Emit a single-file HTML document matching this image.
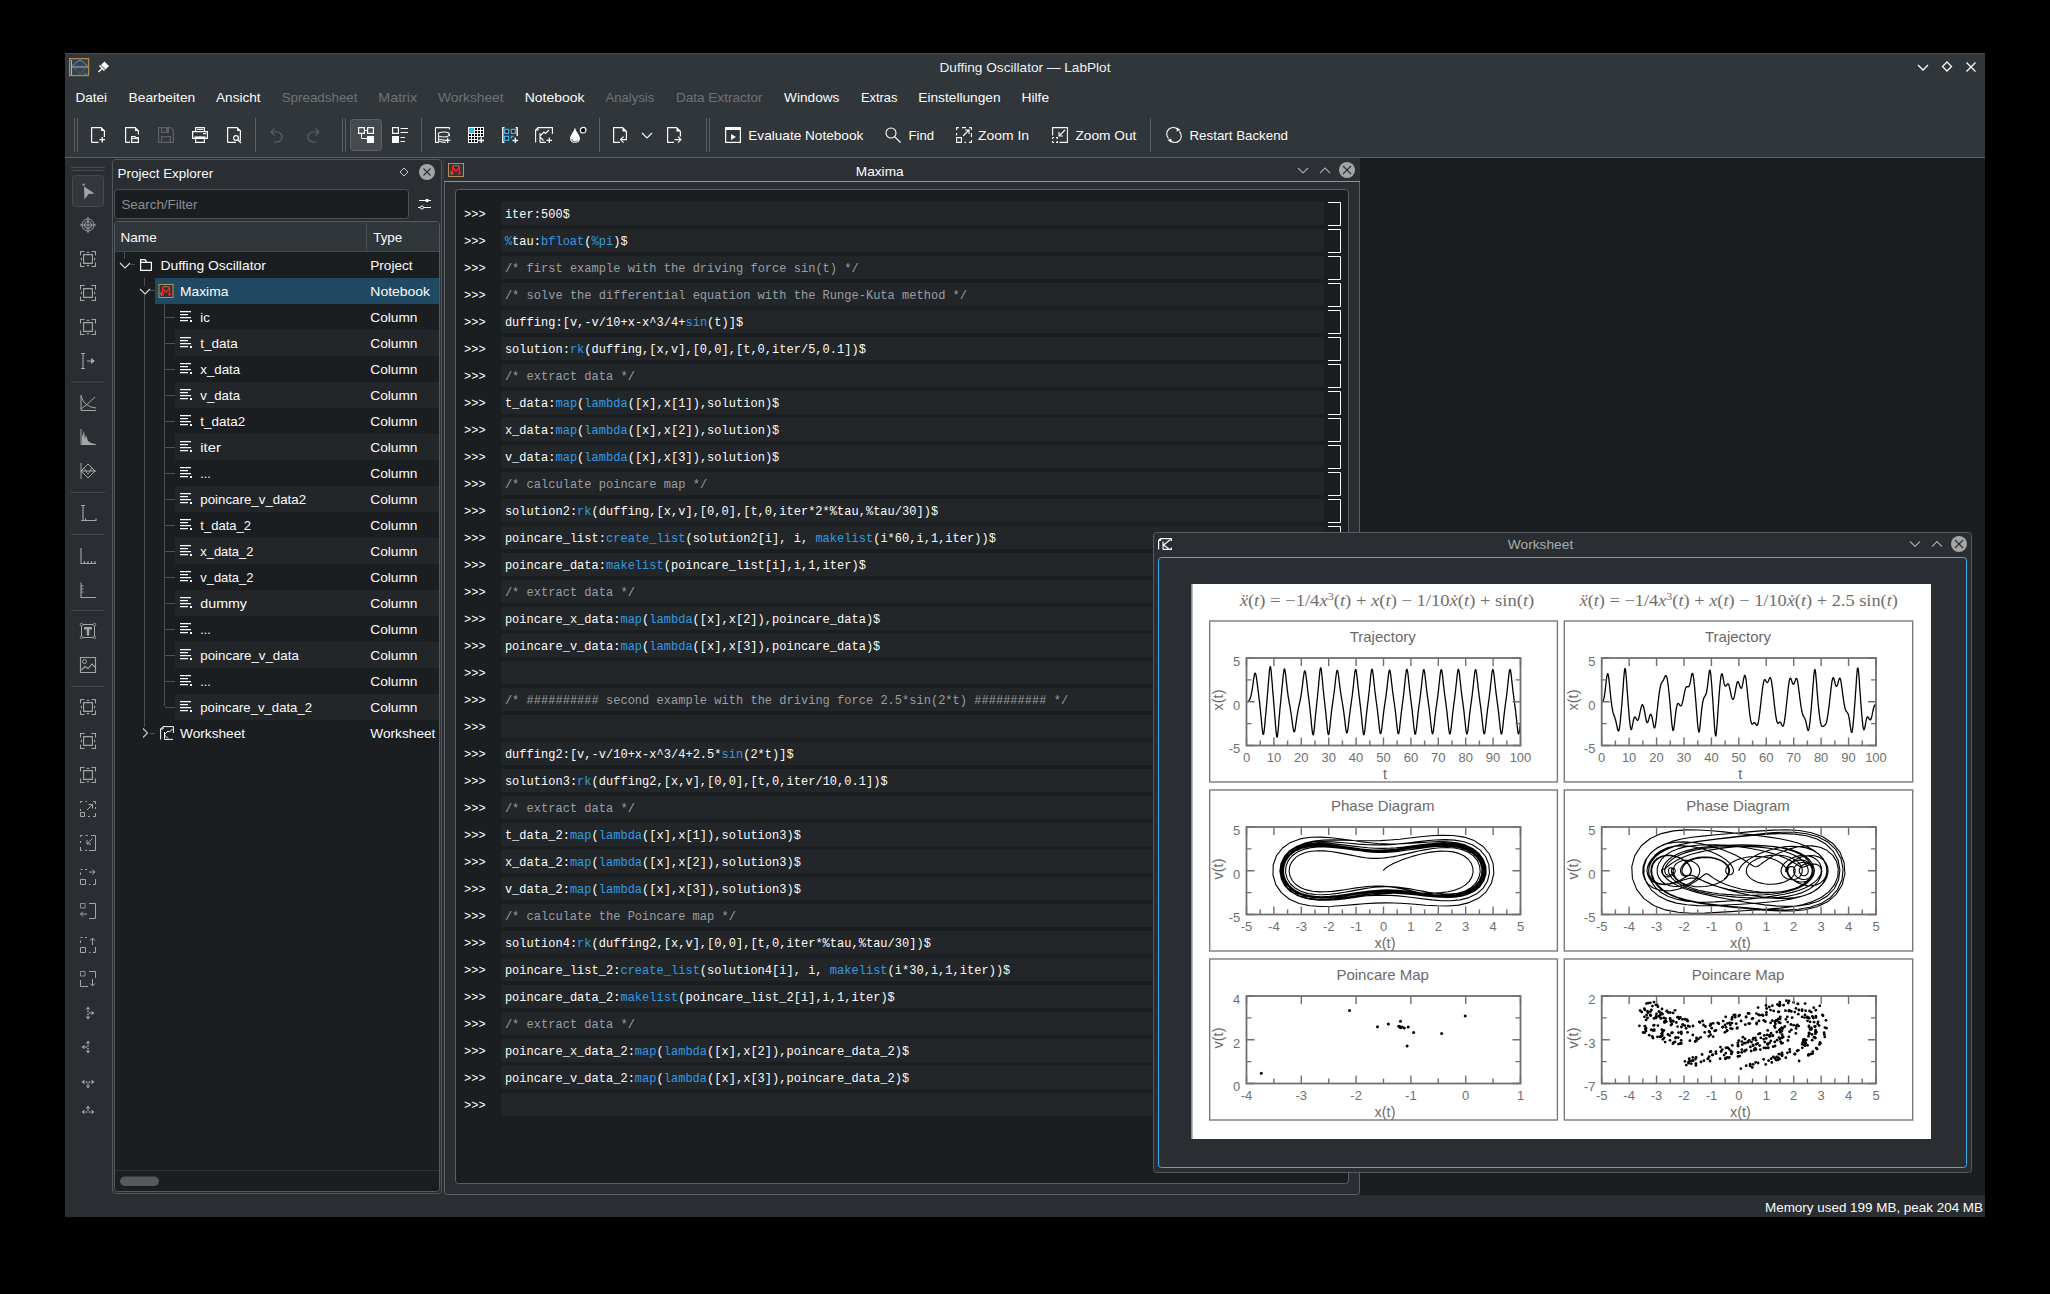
<!DOCTYPE html><html><head><meta charset="utf-8"><style>
*{box-sizing:border-box;margin:0;padding:0}
html,body{width:2050px;height:1294px;overflow:hidden;background:#000}
body{position:relative;font-family:"Liberation Sans",sans-serif;color:#eff0f1;font-size:13px}
.a{position:absolute}
.t{position:absolute;white-space:pre;line-height:1}
.mono{font-family:"Liberation Mono",monospace}
svg{position:absolute;overflow:visible}
</style></head><body><svg width="2050" height="1294" viewBox="0 0 2050 1294" style="left:0;top:0"><rect x="0" y="0" width="2050" height="1294" fill="#000" />
<rect x="65" y="53" width="1920" height="1164" fill="#31363b" />
<rect x="65" y="53" width="1920" height="1" fill="#454a50" />
<rect x="65" y="158" width="1920" height="1059" fill="#2a2e32" />
<line x1="65" y1="157.5" x2="1985" y2="157.5" stroke="#5b6065" stroke-width="1" />
<text x="1025" y="72" font-family="Liberation Sans" font-size="13.33" fill="#eff0f1" text-anchor="middle" textLength="171" lengthAdjust="spacingAndGlyphs" >Duffing Oscillator — LabPlot</text>
<rect x="69.6" y="58.6" width="19" height="17" fill="#3a434d" stroke="#b48a52" stroke-width="1.2"/>
<path d="M71.5 60 V75 M71 67 H88" stroke="#b9bec3" stroke-width="0.9" fill="none" />
<path d="M71.5 66.5 Q76 63 78 61 Q80 59.5 82 61 Q85 64 88 66.5" stroke="#5aa0d8" stroke-width="0.9" fill="none" />
<path d="M74 67.5 Q78 72 80 74 Q82 72 86 67.5" stroke="#7d858c" stroke-width="0.8" fill="none" stroke-dasharray="1.2 0.8"/>
<path d="M84 74 H87.5" stroke="#3d8fd0" stroke-width="1" fill="none" />
<path d="M104.5 61.5 L109 66 L105.5 69.5 L101 65 Z" stroke="none" stroke-width="0" fill="#fcfcfc" />
<path d="M99.5 65.5 L104.5 70.5" stroke="#fcfcfc" stroke-width="1.6" fill="none" />
<path d="M98.5 72 L102 68.5" stroke="#fcfcfc" stroke-width="1.5" fill="none" />
<path d="M1918 65 L1923 70 L1928 65" stroke="#fcfcfc" stroke-width="1.3" fill="none" />
<path d="M1947 62 L1951.5 66.5 L1947 71 L1942.5 66.5 Z" stroke="#fcfcfc" stroke-width="1.3" fill="none" />
<path d="M1966.5 62.5 L1975.5 71.5 M1975.5 62.5 L1966.5 71.5" stroke="#fcfcfc" stroke-width="1.3" fill="none" />
<text x="75.5" y="102" font-family="Liberation Sans" font-size="13.33" fill="#fcfcfc" text-anchor="start" textLength="31.6" lengthAdjust="spacingAndGlyphs" >Datei</text>
<text x="128.6" y="102" font-family="Liberation Sans" font-size="13.33" fill="#fcfcfc" text-anchor="start" textLength="66.6" lengthAdjust="spacingAndGlyphs" >Bearbeiten</text>
<text x="216" y="102" font-family="Liberation Sans" font-size="13.33" fill="#fcfcfc" text-anchor="start" textLength="44.6" lengthAdjust="spacingAndGlyphs" >Ansicht</text>
<text x="281.7" y="102" font-family="Liberation Sans" font-size="13.33" fill="#6e7378" text-anchor="start" textLength="75.8" lengthAdjust="spacingAndGlyphs" >Spreadsheet</text>
<text x="378.3" y="102" font-family="Liberation Sans" font-size="13.33" fill="#6e7378" text-anchor="start" textLength="38.9" lengthAdjust="spacingAndGlyphs" >Matrix</text>
<text x="438" y="102" font-family="Liberation Sans" font-size="13.33" fill="#6e7378" text-anchor="start" textLength="65.6" lengthAdjust="spacingAndGlyphs" >Worksheet</text>
<text x="524.7" y="102" font-family="Liberation Sans" font-size="13.33" fill="#fcfcfc" text-anchor="start" textLength="59.7" lengthAdjust="spacingAndGlyphs" >Notebook</text>
<text x="605.6" y="102" font-family="Liberation Sans" font-size="13.33" fill="#6e7378" text-anchor="start" textLength="48.7" lengthAdjust="spacingAndGlyphs" >Analysis</text>
<text x="675.9" y="102" font-family="Liberation Sans" font-size="13.33" fill="#6e7378" text-anchor="start" textLength="86.7" lengthAdjust="spacingAndGlyphs" >Data Extractor</text>
<text x="784.1" y="102" font-family="Liberation Sans" font-size="13.33" fill="#fcfcfc" text-anchor="start" textLength="55.3" lengthAdjust="spacingAndGlyphs" >Windows</text>
<text x="860.9" y="102" font-family="Liberation Sans" font-size="13.33" fill="#fcfcfc" text-anchor="start" textLength="36.5" lengthAdjust="spacingAndGlyphs" >Extras</text>
<text x="918.3" y="102" font-family="Liberation Sans" font-size="13.33" fill="#fcfcfc" text-anchor="start" textLength="82.3" lengthAdjust="spacingAndGlyphs" >Einstellungen</text>
<text x="1021.4" y="102" font-family="Liberation Sans" font-size="13.33" fill="#fcfcfc" text-anchor="start" textLength="27.7" lengthAdjust="spacingAndGlyphs" >Hilfe</text>
<line x1="74.5" y1="118" x2="74.5" y2="152" stroke="#5b6065" stroke-width="1" />
<line x1="77.5" y1="118" x2="77.5" y2="152" stroke="#5b6065" stroke-width="1" />
<line x1="255.5" y1="118" x2="255.5" y2="152" stroke="#5b6065" stroke-width="1" />
<line x1="342.5" y1="118" x2="342.5" y2="152" stroke="#5b6065" stroke-width="1" />
<line x1="345.5" y1="118" x2="345.5" y2="152" stroke="#5b6065" stroke-width="1" />
<line x1="421.5" y1="118" x2="421.5" y2="152" stroke="#5b6065" stroke-width="1" />
<line x1="599.5" y1="118" x2="599.5" y2="152" stroke="#5b6065" stroke-width="1" />
<line x1="706.5" y1="118" x2="706.5" y2="152" stroke="#5b6065" stroke-width="1" />
<line x1="709.5" y1="118" x2="709.5" y2="152" stroke="#5b6065" stroke-width="1" />
<line x1="1150.5" y1="118" x2="1150.5" y2="152" stroke="#5b6065" stroke-width="1" />
<rect x="350.5" y="119.5" width="31" height="31" rx="3" fill="#454a4f" stroke="#5d6166" stroke-width="1"/>
<g transform="translate(91,127)"><path d="M0.6,15.4 V0.6 H10 L13.4,4 V10 M0.6,15.4 H7.5" stroke="#fcfcfc" stroke-width="1.2" fill="none"/><path d="M10,0 L14,4 L10,4 Z" fill="#fcfcfc"/><path d="M8.5,12.6 H14 M11.25,10 V15.6" stroke="#fcfcfc" stroke-width="1.3" fill="none"/></g>
<g transform="translate(125,127)"><path d="M0.6,15.4 V0.6 H10 L13.4,4 V7.5 M0.6,15.4 H5" stroke="#fcfcfc" stroke-width="1.2" fill="none"/><path d="M10,0 L14,4 L10,4 Z" fill="#fcfcfc"/><path d="M6.6,9.6 H10 L11,10.6 H13.4 V15.4 H6.6 Z" stroke="#fcfcfc" stroke-width="1.2" fill="none"/><path d="M6.6,11.6 H13.4" stroke="#fcfcfc" stroke-width="1" fill="none"/></g>
<g transform="translate(158,127)"><path d="M0.6,0.6 H12.5 L15.4,3.5 V15.4 H0.6 Z" stroke="#5d6166" stroke-width="1.2" fill="none"/><path d="M3.6,0.6 V5.4 H10.4 V0.6" stroke="#5d6166" stroke-width="1.2" fill="none"/><path d="M3.6,15.4 V9.6 H12.4 V15.4" stroke="#5d6166" stroke-width="1.2" fill="none"/><path d="M8,1 H10 V5 H8 Z" fill="#5d6166"/></g>
<g transform="translate(192,127)"><path d="M3.6,4.6 V0.6 H12.4 V4.6" stroke="#fcfcfc" stroke-width="1.2" fill="none"/><path d="M5,2.4 H11" stroke="#fcfcfc" stroke-width="1" fill="none"/><path d="M0.6,4.6 H15.4 V11.4 H0.6 Z" stroke="#fcfcfc" stroke-width="1.2" fill="none"/><path d="M11,6 H14 V7.2 H11 Z" fill="#fcfcfc"/><path d="M2.5,9.4 H13.5 V11.2 H2.5 Z" fill="#fcfcfc"/><path d="M3.6,11.4 V15.4 H12.4 V11.4" stroke="#fcfcfc" stroke-width="1.2" fill="none"/></g>
<g transform="translate(227,127)"><path d="M0.6,15.4 V0.6 H10 L13.4,4 V14 M0.6,15.4 H9" stroke="#fcfcfc" stroke-width="1.2" fill="none"/><path d="M10,0 L14,4 L10,4 Z" fill="#fcfcfc"/><circle cx="9" cy="11" r="2.4" stroke="#fcfcfc" stroke-width="1.2" fill="none"/><path d="M10.8,12.8 L14,16" stroke="#fcfcfc" stroke-width="1.3" fill="none"/></g>
<g transform="translate(270,127)"><path d="M1,5 L4.5,1.5 M1,5 L4.5,8.5 M1,5 H7 A5,5 0 0 1 7,15 H4" stroke="#5d6166" stroke-width="1.2" fill="none"/></g>
<g transform="translate(304,127)"><path d="M15,5 L11.5,1.5 M15,5 L11.5,8.5 M15,5 H9 A5,5 0 0 0 9,15 H12" stroke="#5d6166" stroke-width="1.2" fill="none"/></g>
<g transform="translate(358,127)"><path d="M0.6,0.6 H6.4 V6.4 H0.6 Z M9.6,0.6 H15.4 V6.4 H9.6 Z" stroke="#fcfcfc" stroke-width="1.2" fill="none"/><path d="M6.4,3.5 H9.6 M3.5,6.4 V11.5 H9" stroke="#fcfcfc" stroke-width="1" fill="none"/><path d="M9,9 H16 V16 H9 Z" fill="#fcfcfc"/></g>
<g transform="translate(392,127)"><path d="M0.6,0.6 H6.4 V6.4 H0.6 Z" stroke="#fcfcfc" stroke-width="1.2" fill="none"/><path d="M8.5,1.5 H16 M8.5,5.5 H16 M8.5,10.5 H13 M8.5,14.5 H13" stroke="#fcfcfc" stroke-width="1.2" fill="none"/><path d="M0,9 H7 V16 H0 Z" fill="#fcfcfc"/></g>
<g transform="translate(434,127)"><path d="M1.5,0.6 H15.4 V2.5 M1.5,0.6 V15.4 H5 M15.4,7 V9" stroke="#fcfcfc" stroke-width="1.1" fill="none"/><path d="M4.5,6 Q10,4 15,6 M4.5,6 V14 Q10,16 12,15 M4.5,9 Q10,11 14.5,9 M4.5,12 Q9,13.5 11,13 M15,6 V9" stroke="#fcfcfc" stroke-width="1.1" fill="none"/><path d="M11,13.4 H16.4 M13.7,10.7 V16" stroke="#fcfcfc" stroke-width="1.3" fill="none"/></g>
<g transform="translate(468,127)"><path d="M0,0 H16 V10 H10 V16 H0 Z" fill="#fcfcfc"/><rect x="7" y="1" width="2" height="2" fill="#000"/><rect x="10" y="1" width="2" height="2" fill="#000"/><rect x="13" y="1" width="2" height="2" fill="#000"/><rect x="7" y="4" width="2" height="2" fill="#000"/><rect x="10" y="4" width="2" height="2" fill="#000"/><rect x="13" y="4" width="2" height="2" fill="#000"/><rect x="1" y="7" width="2" height="2" fill="#000"/><rect x="4" y="7" width="2" height="2" fill="#000"/><rect x="7" y="7" width="2" height="2" fill="#000"/><rect x="10" y="7" width="2" height="2" fill="#000"/><rect x="13" y="7" width="2" height="2" fill="#000"/><rect x="1" y="10" width="2" height="2" fill="#000"/><rect x="4" y="10" width="2" height="2" fill="#000"/><rect x="7" y="10" width="2" height="2" fill="#000"/><rect x="1" y="13" width="2" height="2" fill="#000"/><rect x="4" y="13" width="2" height="2" fill="#000"/><rect x="7" y="13" width="2" height="2" fill="#000"/><rect x="1" y="1" width="5" height="5" fill="#3daee9"/><rect x="10" y="10" width="7" height="7" fill="#31363b"/><path d="M10.5,13.5 H16 M13.25,10.5 V16" stroke="#fcfcfc" stroke-width="1.3" fill="none"/></g>
<g transform="translate(502,127)"><path d="M2.5,0.6 H0.8 V15.4 H2.5 M13.5,0.6 H15.2 V9" stroke="#fcfcfc" stroke-width="1.4" fill="none"/><rect x="2.6" y="2.4" width="4" height="4" fill="#2a2624" stroke="#3daee9" stroke-width="1.2"/><rect x="9.4" y="2.4" width="4" height="4" fill="#2a2624" stroke="#3daee9" stroke-width="1.2"/><rect x="2.6" y="9.3" width="4" height="4" fill="#2a2624" stroke="#3daee9" stroke-width="1.2"/><path d="M9.4,11.5 V9.3 H11.5" stroke="#3daee9" stroke-width="1.2" fill="none"/><path d="M10.5,13.5 H16 M13.25,10.5 V16" stroke="#fcfcfc" stroke-width="1.3" fill="none"/></g>
<g transform="translate(535,127)"><path d="M0.6,15.4 V3 L3,0.6 H17.4 V7 M0.6,3 H3 V0.6" stroke="#fcfcfc" stroke-width="1.1" fill="none"/><path d="M5,15.4 V6 M5,15.4 H11 M5,10 L8.5,13.5 M5,9 L9,5 L10.5,6.5 L14,3" stroke="#fcfcfc" stroke-width="1.1" fill="none"/><path d="M11.6,13.4 H17 M14.3,10.7 V16" stroke="#fcfcfc" stroke-width="1.3" fill="none"/></g>
<g transform="translate(570,127)"><path d="M4.9,0.5 C6,5 10,8 10,11.5 A5,4.5 0 0 1 0,11.5 C0,8 4,5 4.9,0.5 Z" fill="#fcfcfc"/><path d="M1.8,12 A3.2,2.8 0 0 0 7.8,13.5" stroke="#31363b" stroke-width="0.8" fill="none"/><circle cx="13.2" cy="3.2" r="2.8" fill="#000" stroke="#fcfcfc" stroke-width="1.2"/></g>
<g transform="translate(613,127)"><path d="M7,15.4 H0.6 V0.6 H9.5 L13.4,4.5 V12.6 H8" stroke="#fcfcfc" stroke-width="1.2" fill="none"/><path d="M9.5,0 L14,4.5 L9.5,4.5 Z" fill="#fcfcfc"/><path d="M10.6,9.6 L7.6,12.6 L10.6,15.6" stroke="#fcfcfc" stroke-width="1.2" fill="none"/></g>
<path d="M642 133 L647 138 L652 133" stroke="#fcfcfc" stroke-width="1.1" fill="none" />
<g transform="translate(667,127)"><path d="M7,15.4 H0.6 V0.6 H9.5 L13.4,4.5 V9.5" stroke="#fcfcfc" stroke-width="1.2" fill="none"/><path d="M9.5,0 L14,4.5 L9.5,4.5 Z" fill="#fcfcfc"/><path d="M7.5,12.6 H14 M11,9.6 L14,12.6 L11,15.6" stroke="#fcfcfc" stroke-width="1.2" fill="none"/></g>
<g transform="translate(725,127)"><path d="M0.6,0.6 H15.4 V15.4 H0.6 Z" stroke="#fcfcfc" stroke-width="1.2" fill="none"/><path d="M0,0 H16 V3 H0 Z" fill="#fcfcfc"/><path d="M6,7 L11,10 L6,13 Z" fill="#fcfcfc"/></g>
<text x="748.3" y="140" font-family="Liberation Sans" font-size="13.33" fill="#fcfcfc" text-anchor="start" textLength="115" lengthAdjust="spacingAndGlyphs" >Evaluate Notebook</text>
<g transform="translate(885,127)"><circle cx="6" cy="6" r="5" stroke="#fcfcfc" stroke-width="1.1" fill="none"/><path d="M9.6,9.6 L15.5,15.5" stroke="#fcfcfc" stroke-width="1.2" fill="none"/></g>
<text x="908.5" y="140" font-family="Liberation Sans" font-size="13.33" fill="#fcfcfc" text-anchor="start" textLength="25.5" lengthAdjust="spacingAndGlyphs" >Find</text>
<g transform="translate(956,127)"><path d="M0.6,3 V0.6 H3 M6,0.6 H10 M13,0.6 H15.4 V3 M15.4,6 V10 M15.4,13 V15.4 H13 M10,15.4 H8.5 M0.6,6 V8.5" stroke="#fcfcfc" stroke-width="1.1" fill="none"/><path d="M0.6,10.6 H5.4 V15.4 H0.6 Z" stroke="#fcfcfc" stroke-width="1.1" fill="none"/><path d="M7,9 L13,3 M9,3 H13 V7" stroke="#fcfcfc" stroke-width="1.1" fill="none"/></g>
<text x="978" y="140" font-family="Liberation Sans" font-size="13.33" fill="#fcfcfc" text-anchor="start" textLength="51" lengthAdjust="spacingAndGlyphs" >Zoom In</text>
<g transform="translate(1052,127)"><path d="M0.6,8.5 V0.6 H15.4 V15.4 H7.5" stroke="#fcfcfc" stroke-width="1.1" fill="none"/><path d="M0.6,10.6 H2 M4,10.6 H5.4 V12 M5.4,14 V15.4 H4 M2,15.4 H0.6 V14 M0.6,12 V10.6" stroke="#fcfcfc" stroke-width="1.1" fill="none"/><path d="M13,3 L7,9 M7,5 V9 H11" stroke="#fcfcfc" stroke-width="1.1" fill="none"/></g>
<text x="1075.4" y="140" font-family="Liberation Sans" font-size="13.33" fill="#fcfcfc" text-anchor="start" textLength="61" lengthAdjust="spacingAndGlyphs" >Zoom Out</text>
<g transform="translate(1166,127)"><path d="M2.5,11.5 A6.5,6.5 0 0 1 12,2.5 M13.5,4.5 A6.5,6.5 0 0 1 4,13.5" stroke="#fcfcfc" stroke-width="1.1" fill="none"/><path d="M11,0.5 L14.5,3 L10.5,4.5 Z" fill="#fcfcfc"/><path d="M5,15.5 L1.5,13 L5.5,11.5 Z" fill="#fcfcfc"/></g>
<text x="1189.5" y="140" font-family="Liberation Sans" font-size="13.33" fill="#fcfcfc" text-anchor="start" textLength="98.5" lengthAdjust="spacingAndGlyphs" >Restart Backend</text>
<line x1="71" y1="167.5" x2="105" y2="167.5" stroke="#464a4f" stroke-width="1" />
<line x1="71" y1="170.5" x2="105" y2="170.5" stroke="#464a4f" stroke-width="1" />
<rect x="72.5" y="175.5" width="31" height="31" rx="3" fill="#33373c" stroke="#45494e" stroke-width="1"/>
<line x1="71" y1="382" x2="105" y2="382" stroke="#43474c" stroke-width="1" />
<line x1="71" y1="492.5" x2="105" y2="492.5" stroke="#43474c" stroke-width="1" />
<line x1="71" y1="534.5" x2="105" y2="534.5" stroke="#43474c" stroke-width="1" />
<line x1="71" y1="610.5" x2="105" y2="610.5" stroke="#43474c" stroke-width="1" />
<line x1="71" y1="686.5" x2="105" y2="686.5" stroke="#43474c" stroke-width="1" />
<g transform="translate(80,183)"><path d="M4,3.5 L14.5,10.5 L8.5,11 L4.5,16.5 Z" fill="#a3a6a9"/><rect x="2.6" y="0.6" width="2" height="2" fill="#a3a6a9"/></g>
<g transform="translate(80,217)"><circle cx="8" cy="8" r="6" stroke="#a3a6a9" stroke-width="1" fill="none"/><circle cx="8" cy="8" r="3.5" stroke="#a3a6a9" stroke-width="1" fill="none"/><path d="M8,0 V16 M0,8 H16" stroke="#a3a6a9" stroke-width="0.9" fill="none"/></g>
<g transform="translate(80,251)"><path d="M0.5,4.5 V0.5 H4.5 M11.5,0.5 H15.5 V4.5 M15.5,11.5 V15.5 H11.5 M4.5,15.5 H0.5 V11.5" stroke="#a3a6a9" stroke-width="1.1" fill="none"/><path d="M3.6,3.6 H12.4 V12.4 H3.6 Z" stroke="#a3a6a9" stroke-width="1.1" fill="none"/><path d="M8,0.3 L9.6,2 H6.4 Z M8,15.7 L9.6,14 H6.4 Z M0.3,8 L2,6.4 V9.6 Z M15.7,8 L14,6.4 V9.6 Z" fill="#a3a6a9"/></g>
<g transform="translate(80,285)"><path d="M0.5,4.5 V0.5 H4.5 M11.5,0.5 H15.5 V4.5 M15.5,11.5 V15.5 H11.5 M4.5,15.5 H0.5 V11.5" stroke="#a3a6a9" stroke-width="1.1" fill="none"/><path d="M3.6,3.6 H12.4 V12.4 H3.6 Z" stroke="#a3a6a9" stroke-width="1.1" fill="none"/><path d="M0.3,8 L2,6.4 V9.6 Z M15.7,8 L14,6.4 V9.6 Z" fill="#a3a6a9"/></g>
<g transform="translate(80,319)"><path d="M0.5,4.5 V0.5 H4.5 M11.5,0.5 H15.5 V4.5 M15.5,11.5 V15.5 H11.5 M4.5,15.5 H0.5 V11.5" stroke="#a3a6a9" stroke-width="1.1" fill="none"/><path d="M3.6,3.6 H12.4 V12.4 H3.6 Z" stroke="#a3a6a9" stroke-width="1.1" fill="none"/><path d="M8,0.3 L9.6,2 H6.4 Z M8,15.7 L9.6,14 H6.4 Z" fill="#a3a6a9"/></g>
<g transform="translate(80,353)"><path d="M1,0.5 H5 M3,0.5 V15.5 M1,15.5 H5 M7,8 H12" stroke="#a3a6a9" stroke-width="1.1" fill="none"/><path d="M11,5 L15,8 L11,11 Z" fill="#a3a6a9"/></g>
<g transform="translate(80,395)"><path d="M1,0 V15.5 H16 M1,1 Q4,12 16,13 M1,14 Q8,9 15,2" stroke="#a3a6a9" stroke-width="1" fill="none"/></g>
<g transform="translate(80,429)"><path d="M1,0 V15.5 H16" stroke="#a3a6a9" stroke-width="1" fill="none"/><path d="M2,15 V8 L4,2 L5,10 L6,6 L8,12 L11,14 L15,15 Z" fill="#a3a6a9"/></g>
<g transform="translate(80,463)"><path d="M1,0 V16 M1,8 H16 M1,8 L8,1 L15,8 L8,15 Z" stroke="#a3a6a9" stroke-width="1" fill="none"/><path d="M2,8 Q4,2 6,8 T10,8 T14,8" stroke="#a3a6a9" stroke-width="0.8" fill="none"/></g>
<g transform="translate(80,505)"><path d="M1,0.5 H5 M3,0.5 V15.5 M1,15.5 H5 M5.5,13.5 V15.5 H16 V13.5" stroke="#a3a6a9" stroke-width="1.1" fill="none"/></g>
<g transform="translate(80,548)"><path d="M1,0 V15.5 H16 M4.5,15.5 V13 M8,15.5 V13 M11.5,15.5 V13 M15,15.5 V13" stroke="#a3a6a9" stroke-width="1.1" fill="none"/></g>
<g transform="translate(80,582)"><path d="M1,0.5 V15.5 H16 M1,4 H3.5 M1,7 H3.5 M1,10 H3.5" stroke="#a3a6a9" stroke-width="1.1" fill="none"/></g>
<g transform="translate(80,623)"><path d="M1.5,1.5 H14.5 V14.5 H1.5 Z" stroke="#a3a6a9" stroke-width="1" fill="none"/><path d="M4,4 H12 V6.5 H9.3 V12.5 H6.7 V6.5 H4 Z" fill="#a3a6a9"/><circle cx="1.5" cy="1.5" r="1.3" fill="#2a2e32" stroke="#a3a6a9" stroke-width="0.8"/><circle cx="14.5" cy="1.5" r="1.3" fill="#2a2e32" stroke="#a3a6a9" stroke-width="0.8"/><circle cx="1.5" cy="14.5" r="1.3" fill="#2a2e32" stroke="#a3a6a9" stroke-width="0.8"/><circle cx="14.5" cy="14.5" r="1.3" fill="#2a2e32" stroke="#a3a6a9" stroke-width="0.8"/></g>
<g transform="translate(80,657)"><path d="M0.5,0.5 H15.5 V15.5 H0.5 Z" stroke="#a3a6a9" stroke-width="1.1" fill="none"/><circle cx="4.5" cy="4.5" r="2" stroke="#a3a6a9" stroke-width="1" fill="none"/><path d="M1.5,13 L5,9.5 L8,11.5 L12,7 L15,10" stroke="#a3a6a9" stroke-width="1.1" fill="none"/></g>
<g transform="translate(80,699)"><path d="M0.5,4.5 V0.5 H4.5 M11.5,0.5 H15.5 V4.5 M15.5,11.5 V15.5 H11.5 M4.5,15.5 H0.5 V11.5" stroke="#a3a6a9" stroke-width="1.1" fill="none"/><path d="M3.6,3.6 H12.4 V12.4 H3.6 Z" stroke="#a3a6a9" stroke-width="1.1" fill="none"/><path d="M8,0.3 L9.6,2 H6.4 Z M8,15.7 L9.6,14 H6.4 Z M0.3,8 L2,6.4 V9.6 Z M15.7,8 L14,6.4 V9.6 Z" fill="#a3a6a9"/></g>
<g transform="translate(80,733)"><path d="M0.5,4.5 V0.5 H4.5 M11.5,0.5 H15.5 V4.5 M15.5,11.5 V15.5 H11.5 M4.5,15.5 H0.5 V11.5" stroke="#a3a6a9" stroke-width="1.1" fill="none"/><path d="M3.6,3.6 H12.4 V12.4 H3.6 Z" stroke="#a3a6a9" stroke-width="1.1" fill="none"/><path d="M0.3,8 L2,6.4 V9.6 Z M15.7,8 L14,6.4 V9.6 Z" fill="#a3a6a9"/></g>
<g transform="translate(80,767)"><path d="M0.5,4.5 V0.5 H4.5 M11.5,0.5 H15.5 V4.5 M15.5,11.5 V15.5 H11.5 M4.5,15.5 H0.5 V11.5" stroke="#a3a6a9" stroke-width="1.1" fill="none"/><path d="M3.6,3.6 H12.4 V12.4 H3.6 Z" stroke="#a3a6a9" stroke-width="1.1" fill="none"/><path d="M8,0.3 L9.6,2 H6.4 Z M8,15.7 L9.6,14 H6.4 Z" fill="#a3a6a9"/></g>
<g transform="translate(80,801)"><path d="M0.5,2 V0.5 H2.5 M5.5,0.5 H7 M13,0.5 H15.5 V3 M15.5,6 V8 M15.5,12 V15.5 H13 M8,15.5 H10 M0.5,8 V10" stroke="#a3a6a9" stroke-width="1" fill="none"/><path d="M0.5,11.5 H4.5 V15.5 H0.5 Z" stroke="#a3a6a9" stroke-width="1" fill="none"/><path d="M7,9 L12.5,3.5 M8.5,3.5 H12.5 V7.5" stroke="#a3a6a9" stroke-width="1" fill="none"/></g>
<g transform="translate(80,835)"><path d="M0.5,2 V0.5 H2.5 M5.5,0.5 H8 M0.5,6 V8 M0.5,12 V15.5 H2 M5,15.5 H7 M15.5,0.5 V15.5 H9 M11,0.5 H15.5" stroke="#a3a6a9" stroke-width="1" fill="none"/><path d="M12.5,3.5 L7,9 M7,5 V9 H11" stroke="#a3a6a9" stroke-width="1" fill="none"/></g>
<g transform="translate(80,869)"><path d="M0.5,0.5 H2.5 M5,0.5 H7 M0.5,3.5 V6 M15.5,10 V15.5 H13 M9,15.5 H10.5" stroke="#a3a6a9" stroke-width="1" fill="none"/><path d="M0.5,10.5 H5.5 V15.5 H0.5 Z" stroke="#a3a6a9" stroke-width="1" fill="none"/><path d="M9,3 H15 M12.5,0.5 L15,3 L12.5,5.5" stroke="#a3a6a9" stroke-width="1" fill="none"/></g>
<g transform="translate(80,903)"><path d="M0.5,0.5 H5 V5 H0.5 Z" stroke="#a3a6a9" stroke-width="0.8" fill="none"/><path d="M9,0.5 H15.5 V15.5 H9 M0.5,11 H7 M3,8.5 L0.5,11 L3,13.5" stroke="#a3a6a9" stroke-width="1" fill="none"/></g>
<g transform="translate(80,937)"><path d="M0.5,0.5 H2.5 M5,0.5 H7 M0.5,3.5 V6 M15.5,10 V15.5 H13 M9,15.5 H10.5" stroke="#a3a6a9" stroke-width="1" fill="none"/><path d="M0.5,10.5 H5.5 V15.5 H0.5 Z" stroke="#a3a6a9" stroke-width="1" fill="none"/><path d="M12.5,8 V1 M10,3.5 L12.5,1 L15,3.5" stroke="#a3a6a9" stroke-width="1" fill="none"/></g>
<g transform="translate(80,971)"><path d="M0.5,0.5 H5 V5 H0.5 Z" stroke="#a3a6a9" stroke-width="0.8" fill="none"/><path d="M9,0.5 H15.5 V7 M0.5,9 V15.5 H8 M12.5,8 V15 M10,12.5 L12.5,15 L15,12.5" stroke="#a3a6a9" stroke-width="1" fill="none"/></g>
<g transform="translate(80,1005)"><path d="M8,1.5 L10.2,4.5 H5.8 ZM8,14.5 L10.2,11.5 H5.8 ZM14.5,8 L11.5,5.8 V10.2 Z" fill="#a3a6a9"/><path d="M7.25,5.75 h1.5 v1.5 h-1.5 Z M7.25,8.75 h1.5 v1.5 h-1.5 Z M9.25,7.25 h1.5 v1.5 h-1.5 Z " fill="#a3a6a9"/></g>
<g transform="translate(80,1039)"><path d="M8,1.5 L10.2,4.5 H5.8 ZM8,14.5 L10.2,11.5 H5.8 ZM1.5,8 L4.5,5.8 V10.2 Z" fill="#a3a6a9"/><path d="M7.25,5.75 h1.5 v1.5 h-1.5 Z M7.25,8.75 h1.5 v1.5 h-1.5 Z M5.25,7.25 h1.5 v1.5 h-1.5 Z " fill="#a3a6a9"/></g>
<g transform="translate(80,1074)"><path d="M1.5,8 L4.5,5.8 V10.2 ZM14.5,8 L11.5,5.8 V10.2 ZM8,14.5 L10.2,11.5 H5.8 Z" fill="#a3a6a9"/><path d="M5.75,7.25 h1.5 v1.5 h-1.5 Z M8.75,7.25 h1.5 v1.5 h-1.5 Z M7.25,9.25 h1.5 v1.5 h-1.5 Z " fill="#a3a6a9"/></g>
<g transform="translate(80,1104)"><path d="M1.5,8 L4.5,5.8 V10.2 ZM14.5,8 L11.5,5.8 V10.2 ZM8,1.5 L10.2,4.5 H5.8 Z" fill="#a3a6a9"/><path d="M5.75,7.25 h1.5 v1.5 h-1.5 Z M8.75,7.25 h1.5 v1.5 h-1.5 Z M7.25,5.25 h1.5 v1.5 h-1.5 Z " fill="#a3a6a9"/></g>
<rect x="112.5" y="159.5" width="329" height="1034" rx="3" fill="#2a2e32" stroke="#52575c" stroke-width="1"/>
<text x="117.6" y="178" font-family="Liberation Sans" font-size="13.33" fill="#fcfcfc" text-anchor="start" textLength="95.6" lengthAdjust="spacingAndGlyphs" >Project Explorer</text>
<path d="M404 168 L408 172 L404 176 L400 172 Z" stroke="#c8cacc" stroke-width="1" fill="none" />
<circle cx="427" cy="172" r="8" fill="#a4a4a4"/>
<path d="M423.5 168.5 L430.5 175.5 M430.5 168.5 L423.5 175.5" stroke="#2a2e32" stroke-width="1.1" fill="none" />
<rect x="114.5" y="189.5" width="294" height="29" rx="3" fill="#1b1e20" stroke="#4b5055" stroke-width="1"/>
<text x="121.4" y="209" font-family="Liberation Sans" font-size="13.33" fill="#8a8e92" text-anchor="start" textLength="76" lengthAdjust="spacingAndGlyphs" >Search/Filter</text>
<path d="M419 200.5 H431 M418 207.5 H431" stroke="#fcfcfc" stroke-width="1" fill="none" />
<circle cx="427" cy="200.5" r="1.8" fill="#fcfcfc"/><circle cx="422" cy="207.5" r="1.6" fill="#2a2e32" stroke="#fcfcfc" stroke-width="1"/>
<rect x="114.5" y="221.5" width="325" height="970" rx="3" fill="#1b1e20" stroke="#55595e" stroke-width="1"/>
<path d="M115,251 V225 Q115,222 118,222 H436 Q439,222 439,225 V251 Z" fill="#31363b"/>
<line x1="115" y1="251.5" x2="439" y2="251.5" stroke="#43474c" stroke-width="1" />
<line x1="366.5" y1="223" x2="366.5" y2="251" stroke="#4b5055" stroke-width="1" />
<text x="120.5" y="242.3" font-family="Liberation Sans" font-size="13.33" fill="#fcfcfc" text-anchor="start" textLength="36.2" lengthAdjust="spacingAndGlyphs" >Name</text>
<text x="373.2" y="242.3" font-family="Liberation Sans" font-size="13.33" fill="#fcfcfc" text-anchor="start" textLength="29.1" lengthAdjust="spacingAndGlyphs" >Type</text>
<path d="M120 263 L125 268 L130 263" stroke="#dcdedf" stroke-width="1.1" fill="none" />
<line x1="130" y1="264.5" x2="135" y2="264.5" stroke="#4b5055" stroke-width="1" />
<g transform="translate(140,259)"><path d="M0.6,11.4 V0.6 H5 L7,3.4 H11.4 V11.4 Z M0.6,3.4 H7" stroke="#fcfcfc" stroke-width="1.2" fill="none"/></g>
<text x="160.4" y="270" font-family="Liberation Sans" font-size="13.33" fill="#fcfcfc" text-anchor="start" textLength="105.5" lengthAdjust="spacingAndGlyphs" >Duffing Oscillator</text>
<text x="370.3" y="270" font-family="Liberation Sans" font-size="13.33" fill="#fcfcfc" text-anchor="start" textLength="42.2" lengthAdjust="spacingAndGlyphs" >Project</text>
<rect x="155" y="278" width="284" height="26" fill="#1f4a62" />
<path d="M140 289 L145 294 L150 289" stroke="#dcdedf" stroke-width="1.1" fill="none" />
<line x1="150" y1="290.5" x2="155" y2="290.5" stroke="#4b5055" stroke-width="1" />
<rect x="159" y="284.5" width="14" height="13" fill="#333" stroke="#b8905a" stroke-width="1"/>
<path d="M162.5 294.5 V288 L166 292.5 L169.5 288 V294.5 M161 294.5 H164 M168 294.5 H171" stroke="#ff2020" stroke-width="1.3" fill="none" />
<path d="M163 287 Q166 286 169 287 M161 292 Q160 294 162 296" stroke="#bbbbbb" stroke-width="0.6" fill="none" />
<text x="180" y="296" font-family="Liberation Sans" font-size="13.33" fill="#fcfcfc" text-anchor="start" textLength="48.4" lengthAdjust="spacingAndGlyphs" >Maxima</text>
<text x="370.3" y="296" font-family="Liberation Sans" font-size="13.33" fill="#fcfcfc" text-anchor="start" textLength="59.8" lengthAdjust="spacingAndGlyphs" >Notebook</text>
<line x1="165" y1="317.5" x2="175" y2="317.5" stroke="#4b5055" stroke-width="1" />
<g transform="translate(180,311)"><path d="M0,0.6 H11 M0,3.6 H8 M0,6.6 H11 M0,9.6 H8" stroke="#fcfcfc" stroke-width="1.2" fill="none"/><path d="M10,9 H12 V11 H10 Z" fill="#fcfcfc"/></g>
<text x="200.3" y="322" font-family="Liberation Sans" font-size="13.33" fill="#fcfcfc" text-anchor="start" textLength="9.5" lengthAdjust="spacingAndGlyphs" >ic</text>
<text x="370.3" y="322" font-family="Liberation Sans" font-size="13.33" fill="#fcfcfc" text-anchor="start" textLength="47.2" lengthAdjust="spacingAndGlyphs" >Column</text>
<rect x="175" y="330" width="264" height="26" fill="#232629" />
<line x1="165" y1="343.5" x2="175" y2="343.5" stroke="#4b5055" stroke-width="1" />
<g transform="translate(180,337)"><path d="M0,0.6 H11 M0,3.6 H8 M0,6.6 H11 M0,9.6 H8" stroke="#fcfcfc" stroke-width="1.2" fill="none"/><path d="M10,9 H12 V11 H10 Z" fill="#fcfcfc"/></g>
<text x="200.3" y="348" font-family="Liberation Sans" font-size="13.33" fill="#fcfcfc" text-anchor="start" textLength="37.5" lengthAdjust="spacingAndGlyphs" >t_data</text>
<text x="370.3" y="348" font-family="Liberation Sans" font-size="13.33" fill="#fcfcfc" text-anchor="start" textLength="47.2" lengthAdjust="spacingAndGlyphs" >Column</text>
<line x1="165" y1="369.5" x2="175" y2="369.5" stroke="#4b5055" stroke-width="1" />
<g transform="translate(180,363)"><path d="M0,0.6 H11 M0,3.6 H8 M0,6.6 H11 M0,9.6 H8" stroke="#fcfcfc" stroke-width="1.2" fill="none"/><path d="M10,9 H12 V11 H10 Z" fill="#fcfcfc"/></g>
<text x="200.3" y="374" font-family="Liberation Sans" font-size="13.33" fill="#fcfcfc" text-anchor="start" textLength="39.9" lengthAdjust="spacingAndGlyphs" >x_data</text>
<text x="370.3" y="374" font-family="Liberation Sans" font-size="13.33" fill="#fcfcfc" text-anchor="start" textLength="47.2" lengthAdjust="spacingAndGlyphs" >Column</text>
<rect x="175" y="382" width="264" height="26" fill="#232629" />
<line x1="165" y1="395.5" x2="175" y2="395.5" stroke="#4b5055" stroke-width="1" />
<g transform="translate(180,389)"><path d="M0,0.6 H11 M0,3.6 H8 M0,6.6 H11 M0,9.6 H8" stroke="#fcfcfc" stroke-width="1.2" fill="none"/><path d="M10,9 H12 V11 H10 Z" fill="#fcfcfc"/></g>
<text x="200.3" y="400" font-family="Liberation Sans" font-size="13.33" fill="#fcfcfc" text-anchor="start" textLength="39.7" lengthAdjust="spacingAndGlyphs" >v_data</text>
<text x="370.3" y="400" font-family="Liberation Sans" font-size="13.33" fill="#fcfcfc" text-anchor="start" textLength="47.2" lengthAdjust="spacingAndGlyphs" >Column</text>
<line x1="165" y1="421.5" x2="175" y2="421.5" stroke="#4b5055" stroke-width="1" />
<g transform="translate(180,415)"><path d="M0,0.6 H11 M0,3.6 H8 M0,6.6 H11 M0,9.6 H8" stroke="#fcfcfc" stroke-width="1.2" fill="none"/><path d="M10,9 H12 V11 H10 Z" fill="#fcfcfc"/></g>
<text x="200.3" y="426" font-family="Liberation Sans" font-size="13.33" fill="#fcfcfc" text-anchor="start" textLength="44.9" lengthAdjust="spacingAndGlyphs" >t_data2</text>
<text x="370.3" y="426" font-family="Liberation Sans" font-size="13.33" fill="#fcfcfc" text-anchor="start" textLength="47.2" lengthAdjust="spacingAndGlyphs" >Column</text>
<rect x="175" y="434" width="264" height="26" fill="#232629" />
<line x1="165" y1="447.5" x2="175" y2="447.5" stroke="#4b5055" stroke-width="1" />
<g transform="translate(180,441)"><path d="M0,0.6 H11 M0,3.6 H8 M0,6.6 H11 M0,9.6 H8" stroke="#fcfcfc" stroke-width="1.2" fill="none"/><path d="M10,9 H12 V11 H10 Z" fill="#fcfcfc"/></g>
<text x="200.3" y="452" font-family="Liberation Sans" font-size="13.33" fill="#fcfcfc" text-anchor="start" textLength="20.5" lengthAdjust="spacingAndGlyphs" >iter</text>
<text x="370.3" y="452" font-family="Liberation Sans" font-size="13.33" fill="#fcfcfc" text-anchor="start" textLength="47.2" lengthAdjust="spacingAndGlyphs" >Column</text>
<line x1="165" y1="473.5" x2="175" y2="473.5" stroke="#4b5055" stroke-width="1" />
<g transform="translate(180,467)"><path d="M0,0.6 H11 M0,3.6 H8 M0,6.6 H11 M0,9.6 H8" stroke="#fcfcfc" stroke-width="1.2" fill="none"/><path d="M10,9 H12 V11 H10 Z" fill="#fcfcfc"/></g>
<text x="200.3" y="478" font-family="Liberation Sans" font-size="13.33" fill="#fcfcfc" text-anchor="start" textLength="10.3" lengthAdjust="spacingAndGlyphs" >...</text>
<text x="370.3" y="478" font-family="Liberation Sans" font-size="13.33" fill="#fcfcfc" text-anchor="start" textLength="47.2" lengthAdjust="spacingAndGlyphs" >Column</text>
<rect x="175" y="486" width="264" height="26" fill="#232629" />
<line x1="165" y1="499.5" x2="175" y2="499.5" stroke="#4b5055" stroke-width="1" />
<g transform="translate(180,493)"><path d="M0,0.6 H11 M0,3.6 H8 M0,6.6 H11 M0,9.6 H8" stroke="#fcfcfc" stroke-width="1.2" fill="none"/><path d="M10,9 H12 V11 H10 Z" fill="#fcfcfc"/></g>
<text x="200.3" y="504" font-family="Liberation Sans" font-size="13.33" fill="#fcfcfc" text-anchor="start" textLength="105.8" lengthAdjust="spacingAndGlyphs" >poincare_v_data2</text>
<text x="370.3" y="504" font-family="Liberation Sans" font-size="13.33" fill="#fcfcfc" text-anchor="start" textLength="47.2" lengthAdjust="spacingAndGlyphs" >Column</text>
<line x1="165" y1="525.5" x2="175" y2="525.5" stroke="#4b5055" stroke-width="1" />
<g transform="translate(180,519)"><path d="M0,0.6 H11 M0,3.6 H8 M0,6.6 H11 M0,9.6 H8" stroke="#fcfcfc" stroke-width="1.2" fill="none"/><path d="M10,9 H12 V11 H10 Z" fill="#fcfcfc"/></g>
<text x="200.3" y="530" font-family="Liberation Sans" font-size="13.33" fill="#fcfcfc" text-anchor="start" textLength="50.8" lengthAdjust="spacingAndGlyphs" >t_data_2</text>
<text x="370.3" y="530" font-family="Liberation Sans" font-size="13.33" fill="#fcfcfc" text-anchor="start" textLength="47.2" lengthAdjust="spacingAndGlyphs" >Column</text>
<rect x="175" y="538" width="264" height="26" fill="#232629" />
<line x1="165" y1="551.5" x2="175" y2="551.5" stroke="#4b5055" stroke-width="1" />
<g transform="translate(180,545)"><path d="M0,0.6 H11 M0,3.6 H8 M0,6.6 H11 M0,9.6 H8" stroke="#fcfcfc" stroke-width="1.2" fill="none"/><path d="M10,9 H12 V11 H10 Z" fill="#fcfcfc"/></g>
<text x="200.3" y="556" font-family="Liberation Sans" font-size="13.33" fill="#fcfcfc" text-anchor="start" textLength="53.1" lengthAdjust="spacingAndGlyphs" >x_data_2</text>
<text x="370.3" y="556" font-family="Liberation Sans" font-size="13.33" fill="#fcfcfc" text-anchor="start" textLength="47.2" lengthAdjust="spacingAndGlyphs" >Column</text>
<line x1="165" y1="577.5" x2="175" y2="577.5" stroke="#4b5055" stroke-width="1" />
<g transform="translate(180,571)"><path d="M0,0.6 H11 M0,3.6 H8 M0,6.6 H11 M0,9.6 H8" stroke="#fcfcfc" stroke-width="1.2" fill="none"/><path d="M10,9 H12 V11 H10 Z" fill="#fcfcfc"/></g>
<text x="200.3" y="582" font-family="Liberation Sans" font-size="13.33" fill="#fcfcfc" text-anchor="start" textLength="53.0" lengthAdjust="spacingAndGlyphs" >v_data_2</text>
<text x="370.3" y="582" font-family="Liberation Sans" font-size="13.33" fill="#fcfcfc" text-anchor="start" textLength="47.2" lengthAdjust="spacingAndGlyphs" >Column</text>
<rect x="175" y="590" width="264" height="26" fill="#232629" />
<line x1="165" y1="603.5" x2="175" y2="603.5" stroke="#4b5055" stroke-width="1" />
<g transform="translate(180,597)"><path d="M0,0.6 H11 M0,3.6 H8 M0,6.6 H11 M0,9.6 H8" stroke="#fcfcfc" stroke-width="1.2" fill="none"/><path d="M10,9 H12 V11 H10 Z" fill="#fcfcfc"/></g>
<text x="200.3" y="608" font-family="Liberation Sans" font-size="13.33" fill="#fcfcfc" text-anchor="start" textLength="46.7" lengthAdjust="spacingAndGlyphs" >dummy</text>
<text x="370.3" y="608" font-family="Liberation Sans" font-size="13.33" fill="#fcfcfc" text-anchor="start" textLength="47.2" lengthAdjust="spacingAndGlyphs" >Column</text>
<line x1="165" y1="629.5" x2="175" y2="629.5" stroke="#4b5055" stroke-width="1" />
<g transform="translate(180,623)"><path d="M0,0.6 H11 M0,3.6 H8 M0,6.6 H11 M0,9.6 H8" stroke="#fcfcfc" stroke-width="1.2" fill="none"/><path d="M10,9 H12 V11 H10 Z" fill="#fcfcfc"/></g>
<text x="200.3" y="634" font-family="Liberation Sans" font-size="13.33" fill="#fcfcfc" text-anchor="start" textLength="10.3" lengthAdjust="spacingAndGlyphs" >...</text>
<text x="370.3" y="634" font-family="Liberation Sans" font-size="13.33" fill="#fcfcfc" text-anchor="start" textLength="47.2" lengthAdjust="spacingAndGlyphs" >Column</text>
<rect x="175" y="642" width="264" height="26" fill="#232629" />
<line x1="165" y1="655.5" x2="175" y2="655.5" stroke="#4b5055" stroke-width="1" />
<g transform="translate(180,649)"><path d="M0,0.6 H11 M0,3.6 H8 M0,6.6 H11 M0,9.6 H8" stroke="#fcfcfc" stroke-width="1.2" fill="none"/><path d="M10,9 H12 V11 H10 Z" fill="#fcfcfc"/></g>
<text x="200.3" y="660" font-family="Liberation Sans" font-size="13.33" fill="#fcfcfc" text-anchor="start" textLength="98.5" lengthAdjust="spacingAndGlyphs" >poincare_v_data</text>
<text x="370.3" y="660" font-family="Liberation Sans" font-size="13.33" fill="#fcfcfc" text-anchor="start" textLength="47.2" lengthAdjust="spacingAndGlyphs" >Column</text>
<line x1="165" y1="681.5" x2="175" y2="681.5" stroke="#4b5055" stroke-width="1" />
<g transform="translate(180,675)"><path d="M0,0.6 H11 M0,3.6 H8 M0,6.6 H11 M0,9.6 H8" stroke="#fcfcfc" stroke-width="1.2" fill="none"/><path d="M10,9 H12 V11 H10 Z" fill="#fcfcfc"/></g>
<text x="200.3" y="686" font-family="Liberation Sans" font-size="13.33" fill="#fcfcfc" text-anchor="start" textLength="10.3" lengthAdjust="spacingAndGlyphs" >...</text>
<text x="370.3" y="686" font-family="Liberation Sans" font-size="13.33" fill="#fcfcfc" text-anchor="start" textLength="47.2" lengthAdjust="spacingAndGlyphs" >Column</text>
<rect x="175" y="694" width="264" height="26" fill="#232629" />
<line x1="165" y1="707.5" x2="175" y2="707.5" stroke="#4b5055" stroke-width="1" />
<g transform="translate(180,701)"><path d="M0,0.6 H11 M0,3.6 H8 M0,6.6 H11 M0,9.6 H8" stroke="#fcfcfc" stroke-width="1.2" fill="none"/><path d="M10,9 H12 V11 H10 Z" fill="#fcfcfc"/></g>
<text x="200.3" y="712" font-family="Liberation Sans" font-size="13.33" fill="#fcfcfc" text-anchor="start" textLength="111.7" lengthAdjust="spacingAndGlyphs" >poincare_v_data_2</text>
<text x="370.3" y="712" font-family="Liberation Sans" font-size="13.33" fill="#fcfcfc" text-anchor="start" textLength="47.2" lengthAdjust="spacingAndGlyphs" >Column</text>
<path d="M143 728.5 L147.5 733 L143 737.5" stroke="#c8cacc" stroke-width="1.1" fill="none" />
<line x1="150" y1="733.5" x2="155" y2="733.5" stroke="#4b5055" stroke-width="1" />
<g transform="translate(160,726)"><path d="M0.6,13.4 V3 L3,0.6 H13.4 V7 M0.6,3 H3 V0.6" stroke="#fcfcfc" stroke-width="1" fill="none"/><path d="M4.5,13.4 V6 M4.5,13.4 H13 M4.5,9 L8,12.5 M4.5,8.5 L8,5 L9.5,6 L12.5,3" stroke="#fcfcfc" stroke-width="1" fill="none"/></g>
<text x="180" y="738" font-family="Liberation Sans" font-size="13.33" fill="#fcfcfc" text-anchor="start" textLength="65.1" lengthAdjust="spacingAndGlyphs" >Worksheet</text>
<text x="370.3" y="738" font-family="Liberation Sans" font-size="13.33" fill="#fcfcfc" text-anchor="start" textLength="65.1" lengthAdjust="spacingAndGlyphs" >Worksheet</text>
<line x1="124.5" y1="252" x2="124.5" y2="259" stroke="#4b5055" stroke-width="1" />
<line x1="144.5" y1="278" x2="144.5" y2="286" stroke="#4b5055" stroke-width="1" />
<line x1="144.5" y1="295" x2="144.5" y2="727" stroke="#4b5055" stroke-width="1" />
<line x1="164.5" y1="304" x2="164.5" y2="706" stroke="#4b5055" stroke-width="1" />
<line x1="144.5" y1="265.5" x2="134" y2="265.5" stroke="#4b5055" stroke-width="0" />
<line x1="115" y1="1170.5" x2="439" y2="1170.5" stroke="#2e3236" stroke-width="1" />
<rect x="120" y="1176.5" width="39" height="9.5" rx="4.75" fill="#55595e"/>
<rect x="1360" y="158" width="625" height="1037" fill="#1b1e20" />
<rect x="65" y="1195" width="1920" height="22" fill="#2a2e32" />
<text x="1983" y="1211.8" font-family="Liberation Sans" font-size="13.33" fill="#fcfcfc" text-anchor="end" textLength="218" lengthAdjust="spacingAndGlyphs" >Memory used 199 MB, peak 204 MB</text>
<path d="M443,1194 V161 Q443,158 446,158 H1357 Q1360,158 1360,161 V1194 Z" fill="#2c3035"/>
<rect x="444" y="181" width="916" height="1" fill="#3daee9" />
<path d="M444.5,182 V1191.5 Q444.5,1194.5 447.5,1194.5 H1356.5 Q1359.5,1194.5 1359.5,1191.5 V182" fill="#2a2e32" stroke="#5b6065" stroke-width="1"/>
<line x1="443.5" y1="160" x2="443.5" y2="181" stroke="#3a3f44" stroke-width="1" />
<rect x="448.5" y="163.5" width="15" height="13" fill="#333" stroke="#b8905a" stroke-width="1"/>
<path d="M452.5 173.5 V167 L456 171.5 L459.5 167 V173.5 M451 173.5 H454 M458 173.5 H461" stroke="#ff2020" stroke-width="1.3" fill="none" />
<path d="M453 166 Q456 165 459 166 M451 171 Q450 173 452 175" stroke="#bbbbbb" stroke-width="0.6" fill="none" />
<text x="879.7" y="175.5" font-family="Liberation Sans" font-size="13.33" fill="#fcfcfc" text-anchor="middle" textLength="47.8" lengthAdjust="spacingAndGlyphs" >Maxima</text>
<path d="M1298 168 L1303 173 L1308 168" stroke="#a4a6a8" stroke-width="1.1" fill="none" />
<path d="M1320 173 L1325 168 L1330 173" stroke="#a4a6a8" stroke-width="1.1" fill="none" />
<circle cx="1347" cy="170" r="8" fill="#a4a4a4"/>
<path d="M1343 166 L1351 174 M1351 166 L1343 174" stroke="#2a2e32" stroke-width="1.1" fill="none" />
<rect x="455.5" y="189.5" width="893" height="994" rx="3" fill="#1b1e20" stroke="#5b6065" stroke-width="1"/>
<rect x="501" y="202" width="823" height="23" fill="#232629" />
<text x="464" y="218" font-family="Liberation Mono" font-size="12" fill="#fcfcfc" text-anchor="start" >&gt;&gt;&gt;</text>
<text x="504.9" y="218" font-family="Liberation Mono" font-size="12" textLength="65.0" lengthAdjust="spacing" xml:space="preserve"><tspan fill="#fcfcfc">iter:500$</tspan></text>
<path d="M1328 202.5 H1340.5 V225.5 H1328" stroke="#fcfcfc" stroke-width="1" fill="none" />
<rect x="501" y="229" width="823" height="23" fill="#232629" />
<text x="464" y="245" font-family="Liberation Mono" font-size="12" fill="#fcfcfc" text-anchor="start" >&gt;&gt;&gt;</text>
<text x="504.9" y="245" font-family="Liberation Mono" font-size="12" textLength="122.7" lengthAdjust="spacing" xml:space="preserve"><tspan fill="#2f9be6">%</tspan><tspan fill="#fcfcfc">tau:</tspan><tspan fill="#2f9be6">bfloat</tspan><tspan fill="#fcfcfc">(</tspan><tspan fill="#2f9be6">%pi</tspan><tspan fill="#fcfcfc">)$</tspan></text>
<path d="M1328 229.5 H1340.5 V252.5 H1328" stroke="#fcfcfc" stroke-width="1" fill="none" />
<rect x="501" y="256" width="823" height="23" fill="#232629" />
<text x="464" y="272" font-family="Liberation Mono" font-size="12" fill="#fcfcfc" text-anchor="start" >&gt;&gt;&gt;</text>
<text x="504.9" y="272" font-family="Liberation Mono" font-size="12" textLength="353.8" lengthAdjust="spacing" xml:space="preserve"><tspan fill="#9a9ea2">/* first example with the driving force sin(t) */</tspan></text>
<path d="M1328 256.5 H1340.5 V279.5 H1328" stroke="#fcfcfc" stroke-width="1" fill="none" />
<rect x="501" y="283" width="823" height="23" fill="#232629" />
<text x="464" y="299" font-family="Liberation Mono" font-size="12" fill="#fcfcfc" text-anchor="start" >&gt;&gt;&gt;</text>
<text x="504.9" y="299" font-family="Liberation Mono" font-size="12" textLength="462.1" lengthAdjust="spacing" xml:space="preserve"><tspan fill="#9a9ea2">/* solve the differential equation with the Runge-Kuta method */</tspan></text>
<path d="M1328 283.5 H1340.5 V306.5 H1328" stroke="#fcfcfc" stroke-width="1" fill="none" />
<rect x="501" y="310" width="823" height="23" fill="#232629" />
<text x="464" y="326" font-family="Liberation Mono" font-size="12" fill="#fcfcfc" text-anchor="start" >&gt;&gt;&gt;</text>
<text x="504.9" y="326" font-family="Liberation Mono" font-size="12" textLength="238.3" lengthAdjust="spacing" xml:space="preserve"><tspan fill="#fcfcfc">duffing:[v,-v/10+x-x^3/4+</tspan><tspan fill="#2f9be6">sin</tspan><tspan fill="#fcfcfc">(t)]$</tspan></text>
<path d="M1328 310.5 H1340.5 V333.5 H1328" stroke="#fcfcfc" stroke-width="1" fill="none" />
<rect x="501" y="337" width="823" height="23" fill="#232629" />
<text x="464" y="353" font-family="Liberation Mono" font-size="12" fill="#fcfcfc" text-anchor="start" >&gt;&gt;&gt;</text>
<text x="504.9" y="353" font-family="Liberation Mono" font-size="12" textLength="361.0" lengthAdjust="spacing" xml:space="preserve"><tspan fill="#fcfcfc">solution:</tspan><tspan fill="#2f9be6">rk</tspan><tspan fill="#fcfcfc">(duffing,[x,v],[0,0],[t,0,iter/5,0.1])$</tspan></text>
<path d="M1328 337.5 H1340.5 V360.5 H1328" stroke="#fcfcfc" stroke-width="1" fill="none" />
<rect x="501" y="364" width="823" height="23" fill="#232629" />
<text x="464" y="380" font-family="Liberation Mono" font-size="12" fill="#fcfcfc" text-anchor="start" >&gt;&gt;&gt;</text>
<text x="504.9" y="380" font-family="Liberation Mono" font-size="12" textLength="130.0" lengthAdjust="spacing" xml:space="preserve"><tspan fill="#9a9ea2">/* extract data */</tspan></text>
<path d="M1328 364.5 H1340.5 V387.5 H1328" stroke="#fcfcfc" stroke-width="1" fill="none" />
<rect x="501" y="391" width="823" height="23" fill="#232629" />
<text x="464" y="407" font-family="Liberation Mono" font-size="12" fill="#fcfcfc" text-anchor="start" >&gt;&gt;&gt;</text>
<text x="504.9" y="407" font-family="Liberation Mono" font-size="12" textLength="274.4" lengthAdjust="spacing" xml:space="preserve"><tspan fill="#fcfcfc">t_data:</tspan><tspan fill="#2f9be6">map</tspan><tspan fill="#fcfcfc">(</tspan><tspan fill="#2f9be6">lambda</tspan><tspan fill="#fcfcfc">([x],x[1]),solution)$</tspan></text>
<path d="M1328 391.5 H1340.5 V414.5 H1328" stroke="#fcfcfc" stroke-width="1" fill="none" />
<rect x="501" y="418" width="823" height="23" fill="#232629" />
<text x="464" y="434" font-family="Liberation Mono" font-size="12" fill="#fcfcfc" text-anchor="start" >&gt;&gt;&gt;</text>
<text x="504.9" y="434" font-family="Liberation Mono" font-size="12" textLength="274.4" lengthAdjust="spacing" xml:space="preserve"><tspan fill="#fcfcfc">x_data:</tspan><tspan fill="#2f9be6">map</tspan><tspan fill="#fcfcfc">(</tspan><tspan fill="#2f9be6">lambda</tspan><tspan fill="#fcfcfc">([x],x[2]),solution)$</tspan></text>
<path d="M1328 418.5 H1340.5 V441.5 H1328" stroke="#fcfcfc" stroke-width="1" fill="none" />
<rect x="501" y="445" width="823" height="23" fill="#232629" />
<text x="464" y="461" font-family="Liberation Mono" font-size="12" fill="#fcfcfc" text-anchor="start" >&gt;&gt;&gt;</text>
<text x="504.9" y="461" font-family="Liberation Mono" font-size="12" textLength="274.4" lengthAdjust="spacing" xml:space="preserve"><tspan fill="#fcfcfc">v_data:</tspan><tspan fill="#2f9be6">map</tspan><tspan fill="#fcfcfc">(</tspan><tspan fill="#2f9be6">lambda</tspan><tspan fill="#fcfcfc">([x],x[3]),solution)$</tspan></text>
<path d="M1328 445.5 H1340.5 V468.5 H1328" stroke="#fcfcfc" stroke-width="1" fill="none" />
<rect x="501" y="472" width="823" height="23" fill="#232629" />
<text x="464" y="488" font-family="Liberation Mono" font-size="12" fill="#fcfcfc" text-anchor="start" >&gt;&gt;&gt;</text>
<text x="504.9" y="488" font-family="Liberation Mono" font-size="12" textLength="202.2" lengthAdjust="spacing" xml:space="preserve"><tspan fill="#9a9ea2">/* calculate poincare map */</tspan></text>
<path d="M1328 472.5 H1340.5 V495.5 H1328" stroke="#fcfcfc" stroke-width="1" fill="none" />
<rect x="501" y="499" width="823" height="23" fill="#232629" />
<text x="464" y="515" font-family="Liberation Mono" font-size="12" fill="#fcfcfc" text-anchor="start" >&gt;&gt;&gt;</text>
<text x="504.9" y="515" font-family="Liberation Mono" font-size="12" textLength="433.2" lengthAdjust="spacing" xml:space="preserve"><tspan fill="#fcfcfc">solution2:</tspan><tspan fill="#2f9be6">rk</tspan><tspan fill="#fcfcfc">(duffing,[x,v],[0,0],[t,0,iter*2*%tau,%tau/30])$</tspan></text>
<path d="M1328 499.5 H1340.5 V522.5 H1328" stroke="#fcfcfc" stroke-width="1" fill="none" />
<rect x="501" y="526" width="823" height="23" fill="#232629" />
<text x="464" y="542" font-family="Liberation Mono" font-size="12" fill="#fcfcfc" text-anchor="start" >&gt;&gt;&gt;</text>
<text x="504.9" y="542" font-family="Liberation Mono" font-size="12" textLength="491.0" lengthAdjust="spacing" xml:space="preserve"><tspan fill="#fcfcfc">poincare_list:</tspan><tspan fill="#2f9be6">create_list</tspan><tspan fill="#fcfcfc">(solution2[i], i, </tspan><tspan fill="#2f9be6">makelist</tspan><tspan fill="#fcfcfc">(i*60,i,1,iter))$</tspan></text>
<path d="M1328 526.5 H1340.5 V549.5 H1328" stroke="#fcfcfc" stroke-width="1" fill="none" />
<rect x="501" y="553" width="823" height="23" fill="#232629" />
<text x="464" y="569" font-family="Liberation Mono" font-size="12" fill="#fcfcfc" text-anchor="start" >&gt;&gt;&gt;</text>
<text x="504.9" y="569" font-family="Liberation Mono" font-size="12" textLength="361.0" lengthAdjust="spacing" xml:space="preserve"><tspan fill="#fcfcfc">poincare_data:</tspan><tspan fill="#2f9be6">makelist</tspan><tspan fill="#fcfcfc">(poincare_list[i],i,1,iter)$</tspan></text>
<path d="M1328 553.5 H1340.5 V576.5 H1328" stroke="#fcfcfc" stroke-width="1" fill="none" />
<rect x="501" y="580" width="823" height="23" fill="#232629" />
<text x="464" y="596" font-family="Liberation Mono" font-size="12" fill="#fcfcfc" text-anchor="start" >&gt;&gt;&gt;</text>
<text x="504.9" y="596" font-family="Liberation Mono" font-size="12" textLength="130.0" lengthAdjust="spacing" xml:space="preserve"><tspan fill="#9a9ea2">/* extract data */</tspan></text>
<path d="M1328 580.5 H1340.5 V603.5 H1328" stroke="#fcfcfc" stroke-width="1" fill="none" />
<rect x="501" y="607" width="823" height="23" fill="#232629" />
<text x="464" y="623" font-family="Liberation Mono" font-size="12" fill="#fcfcfc" text-anchor="start" >&gt;&gt;&gt;</text>
<text x="504.9" y="623" font-family="Liberation Mono" font-size="12" textLength="375.4" lengthAdjust="spacing" xml:space="preserve"><tspan fill="#fcfcfc">poincare_x_data:</tspan><tspan fill="#2f9be6">map</tspan><tspan fill="#fcfcfc">(</tspan><tspan fill="#2f9be6">lambda</tspan><tspan fill="#fcfcfc">([x],x[2]),poincare_data)$</tspan></text>
<path d="M1328 607.5 H1340.5 V630.5 H1328" stroke="#fcfcfc" stroke-width="1" fill="none" />
<rect x="501" y="634" width="823" height="23" fill="#232629" />
<text x="464" y="650" font-family="Liberation Mono" font-size="12" fill="#fcfcfc" text-anchor="start" >&gt;&gt;&gt;</text>
<text x="504.9" y="650" font-family="Liberation Mono" font-size="12" textLength="375.4" lengthAdjust="spacing" xml:space="preserve"><tspan fill="#fcfcfc">poincare_v_data:</tspan><tspan fill="#2f9be6">map</tspan><tspan fill="#fcfcfc">(</tspan><tspan fill="#2f9be6">lambda</tspan><tspan fill="#fcfcfc">([x],x[3]),poincare_data)$</tspan></text>
<path d="M1328 634.5 H1340.5 V657.5 H1328" stroke="#fcfcfc" stroke-width="1" fill="none" />
<rect x="501" y="661" width="823" height="23" fill="#232629" />
<text x="464" y="677" font-family="Liberation Mono" font-size="12" fill="#fcfcfc" text-anchor="start" >&gt;&gt;&gt;</text>
<path d="M1328 661.5 H1340.5 V684.5 H1328" stroke="#fcfcfc" stroke-width="1" fill="none" />
<rect x="501" y="688" width="823" height="23" fill="#232629" />
<text x="464" y="704" font-family="Liberation Mono" font-size="12" fill="#fcfcfc" text-anchor="start" >&gt;&gt;&gt;</text>
<text x="504.9" y="704" font-family="Liberation Mono" font-size="12" textLength="563.2" lengthAdjust="spacing" xml:space="preserve"><tspan fill="#9a9ea2">/* ########## second example with the driving force 2.5*sin(2*t) ########## */</tspan></text>
<path d="M1328 688.5 H1340.5 V711.5 H1328" stroke="#fcfcfc" stroke-width="1" fill="none" />
<rect x="501" y="715" width="823" height="23" fill="#232629" />
<text x="464" y="731" font-family="Liberation Mono" font-size="12" fill="#fcfcfc" text-anchor="start" >&gt;&gt;&gt;</text>
<path d="M1328 715.5 H1340.5 V738.5 H1328" stroke="#fcfcfc" stroke-width="1" fill="none" />
<rect x="501" y="742" width="823" height="23" fill="#232629" />
<text x="464" y="758" font-family="Liberation Mono" font-size="12" fill="#fcfcfc" text-anchor="start" >&gt;&gt;&gt;</text>
<text x="504.9" y="758" font-family="Liberation Mono" font-size="12" textLength="288.8" lengthAdjust="spacing" xml:space="preserve"><tspan fill="#fcfcfc">duffing2:[v,-v/10+x-x^3/4+2.5*</tspan><tspan fill="#2f9be6">sin</tspan><tspan fill="#fcfcfc">(2*t)]$</tspan></text>
<path d="M1328 742.5 H1340.5 V765.5 H1328" stroke="#fcfcfc" stroke-width="1" fill="none" />
<rect x="501" y="769" width="823" height="23" fill="#232629" />
<text x="464" y="785" font-family="Liberation Mono" font-size="12" fill="#fcfcfc" text-anchor="start" >&gt;&gt;&gt;</text>
<text x="504.9" y="785" font-family="Liberation Mono" font-size="12" textLength="382.7" lengthAdjust="spacing" xml:space="preserve"><tspan fill="#fcfcfc">solution3:</tspan><tspan fill="#2f9be6">rk</tspan><tspan fill="#fcfcfc">(duffing2,[x,v],[0,0],[t,0,iter/10,0.1])$</tspan></text>
<path d="M1328 769.5 H1340.5 V792.5 H1328" stroke="#fcfcfc" stroke-width="1" fill="none" />
<rect x="501" y="796" width="823" height="23" fill="#232629" />
<text x="464" y="812" font-family="Liberation Mono" font-size="12" fill="#fcfcfc" text-anchor="start" >&gt;&gt;&gt;</text>
<text x="504.9" y="812" font-family="Liberation Mono" font-size="12" textLength="130.0" lengthAdjust="spacing" xml:space="preserve"><tspan fill="#9a9ea2">/* extract data */</tspan></text>
<path d="M1328 796.5 H1340.5 V819.5 H1328" stroke="#fcfcfc" stroke-width="1" fill="none" />
<rect x="501" y="823" width="823" height="23" fill="#232629" />
<text x="464" y="839" font-family="Liberation Mono" font-size="12" fill="#fcfcfc" text-anchor="start" >&gt;&gt;&gt;</text>
<text x="504.9" y="839" font-family="Liberation Mono" font-size="12" textLength="296.0" lengthAdjust="spacing" xml:space="preserve"><tspan fill="#fcfcfc">t_data_2:</tspan><tspan fill="#2f9be6">map</tspan><tspan fill="#fcfcfc">(</tspan><tspan fill="#2f9be6">lambda</tspan><tspan fill="#fcfcfc">([x],x[1]),solution3)$</tspan></text>
<path d="M1328 823.5 H1340.5 V846.5 H1328" stroke="#fcfcfc" stroke-width="1" fill="none" />
<rect x="501" y="850" width="823" height="23" fill="#232629" />
<text x="464" y="866" font-family="Liberation Mono" font-size="12" fill="#fcfcfc" text-anchor="start" >&gt;&gt;&gt;</text>
<text x="504.9" y="866" font-family="Liberation Mono" font-size="12" textLength="296.0" lengthAdjust="spacing" xml:space="preserve"><tspan fill="#fcfcfc">x_data_2:</tspan><tspan fill="#2f9be6">map</tspan><tspan fill="#fcfcfc">(</tspan><tspan fill="#2f9be6">lambda</tspan><tspan fill="#fcfcfc">([x],x[2]),solution3)$</tspan></text>
<path d="M1328 850.5 H1340.5 V873.5 H1328" stroke="#fcfcfc" stroke-width="1" fill="none" />
<rect x="501" y="877" width="823" height="23" fill="#232629" />
<text x="464" y="893" font-family="Liberation Mono" font-size="12" fill="#fcfcfc" text-anchor="start" >&gt;&gt;&gt;</text>
<text x="504.9" y="893" font-family="Liberation Mono" font-size="12" textLength="296.0" lengthAdjust="spacing" xml:space="preserve"><tspan fill="#fcfcfc">v_data_2:</tspan><tspan fill="#2f9be6">map</tspan><tspan fill="#fcfcfc">(</tspan><tspan fill="#2f9be6">lambda</tspan><tspan fill="#fcfcfc">([x],x[3]),solution3)$</tspan></text>
<path d="M1328 877.5 H1340.5 V900.5 H1328" stroke="#fcfcfc" stroke-width="1" fill="none" />
<rect x="501" y="904" width="823" height="23" fill="#232629" />
<text x="464" y="920" font-family="Liberation Mono" font-size="12" fill="#fcfcfc" text-anchor="start" >&gt;&gt;&gt;</text>
<text x="504.9" y="920" font-family="Liberation Mono" font-size="12" textLength="231.0" lengthAdjust="spacing" xml:space="preserve"><tspan fill="#9a9ea2">/* calculate the Poincare map */</tspan></text>
<path d="M1328 904.5 H1340.5 V927.5 H1328" stroke="#fcfcfc" stroke-width="1" fill="none" />
<rect x="501" y="931" width="823" height="23" fill="#232629" />
<text x="464" y="947" font-family="Liberation Mono" font-size="12" fill="#fcfcfc" text-anchor="start" >&gt;&gt;&gt;</text>
<text x="504.9" y="947" font-family="Liberation Mono" font-size="12" textLength="426.0" lengthAdjust="spacing" xml:space="preserve"><tspan fill="#fcfcfc">solution4:</tspan><tspan fill="#2f9be6">rk</tspan><tspan fill="#fcfcfc">(duffing2,[x,v],[0,0],[t,0,iter*%tau,%tau/30])$</tspan></text>
<path d="M1328 931.5 H1340.5 V954.5 H1328" stroke="#fcfcfc" stroke-width="1" fill="none" />
<rect x="501" y="958" width="823" height="23" fill="#232629" />
<text x="464" y="974" font-family="Liberation Mono" font-size="12" fill="#fcfcfc" text-anchor="start" >&gt;&gt;&gt;</text>
<text x="504.9" y="974" font-family="Liberation Mono" font-size="12" textLength="505.4" lengthAdjust="spacing" xml:space="preserve"><tspan fill="#fcfcfc">poincare_list_2:</tspan><tspan fill="#2f9be6">create_list</tspan><tspan fill="#fcfcfc">(solution4[i], i, </tspan><tspan fill="#2f9be6">makelist</tspan><tspan fill="#fcfcfc">(i*30,i,1,iter))$</tspan></text>
<path d="M1328 958.5 H1340.5 V981.5 H1328" stroke="#fcfcfc" stroke-width="1" fill="none" />
<rect x="501" y="985" width="823" height="23" fill="#232629" />
<text x="464" y="1001" font-family="Liberation Mono" font-size="12" fill="#fcfcfc" text-anchor="start" >&gt;&gt;&gt;</text>
<text x="504.9" y="1001" font-family="Liberation Mono" font-size="12" textLength="389.9" lengthAdjust="spacing" xml:space="preserve"><tspan fill="#fcfcfc">poincare_data_2:</tspan><tspan fill="#2f9be6">makelist</tspan><tspan fill="#fcfcfc">(poincare_list_2[i],i,1,iter)$</tspan></text>
<path d="M1328 985.5 H1340.5 V1008.5 H1328" stroke="#fcfcfc" stroke-width="1" fill="none" />
<rect x="501" y="1012" width="823" height="23" fill="#232629" />
<text x="464" y="1028" font-family="Liberation Mono" font-size="12" fill="#fcfcfc" text-anchor="start" >&gt;&gt;&gt;</text>
<text x="504.9" y="1028" font-family="Liberation Mono" font-size="12" textLength="130.0" lengthAdjust="spacing" xml:space="preserve"><tspan fill="#9a9ea2">/* extract data */</tspan></text>
<path d="M1328 1012.5 H1340.5 V1035.5 H1328" stroke="#fcfcfc" stroke-width="1" fill="none" />
<rect x="501" y="1039" width="823" height="23" fill="#232629" />
<text x="464" y="1055" font-family="Liberation Mono" font-size="12" fill="#fcfcfc" text-anchor="start" >&gt;&gt;&gt;</text>
<text x="504.9" y="1055" font-family="Liberation Mono" font-size="12" textLength="404.3" lengthAdjust="spacing" xml:space="preserve"><tspan fill="#fcfcfc">poincare_x_data_2:</tspan><tspan fill="#2f9be6">map</tspan><tspan fill="#fcfcfc">(</tspan><tspan fill="#2f9be6">lambda</tspan><tspan fill="#fcfcfc">([x],x[2]),poincare_data_2)$</tspan></text>
<path d="M1328 1039.5 H1340.5 V1062.5 H1328" stroke="#fcfcfc" stroke-width="1" fill="none" />
<rect x="501" y="1066" width="823" height="23" fill="#232629" />
<text x="464" y="1082" font-family="Liberation Mono" font-size="12" fill="#fcfcfc" text-anchor="start" >&gt;&gt;&gt;</text>
<text x="504.9" y="1082" font-family="Liberation Mono" font-size="12" textLength="404.3" lengthAdjust="spacing" xml:space="preserve"><tspan fill="#fcfcfc">poincare_v_data_2:</tspan><tspan fill="#2f9be6">map</tspan><tspan fill="#fcfcfc">(</tspan><tspan fill="#2f9be6">lambda</tspan><tspan fill="#fcfcfc">([x],x[3]),poincare_data_2)$</tspan></text>
<path d="M1328 1066.5 H1340.5 V1089.5 H1328" stroke="#fcfcfc" stroke-width="1" fill="none" />
<rect x="501" y="1093" width="823" height="23" fill="#232629" />
<text x="464" y="1109" font-family="Liberation Mono" font-size="12" fill="#fcfcfc" text-anchor="start" >&gt;&gt;&gt;</text>
<path d="M1328 1093.5 H1340.5 V1116.5 H1328" stroke="#fcfcfc" stroke-width="1" fill="none" />
<rect x="1153.5" y="532.5" width="818" height="640" rx="3" fill="#2a2e32" stroke="#55595e" stroke-width="1"/>
<g transform="translate(1158,538)"><path d="M0.6,11.4 V2.5 L2.5,0.6 H13.4 V3 M0.6,2.5 H2.5 V0.6" stroke="#fcfcfc" stroke-width="1.2" fill="none"/><path d="M5,11.4 V3.5 M5,11.4 H13.4 V9.5 M12.5,1.5 L5.5,7 L11,11" stroke="#fcfcfc" stroke-width="1.2" fill="none"/></g>
<text x="1540.5" y="549" font-family="Liberation Sans" font-size="13.33" fill="#a8abae" text-anchor="middle" textLength="65.5" lengthAdjust="spacingAndGlyphs" >Worksheet</text>
<path d="M1910 541.5 L1915 546.5 L1920 541.5" stroke="#a4a6a8" stroke-width="1.1" fill="none" />
<path d="M1932 546.5 L1937 541.5 L1942 546.5" stroke="#a4a6a8" stroke-width="1.1" fill="none" />
<circle cx="1959" cy="544" r="8" fill="#a4a4a4"/>
<path d="M1955 540 L1963 548 M1963 540 L1955 548" stroke="#2a2e32" stroke-width="1.1" fill="none" />
<rect x="1158.5" y="557.5" width="808" height="610" rx="3" fill="#2a2e32" stroke="#3daee9" stroke-width="1"/>
<rect x="1191" y="584" width="740" height="555" fill="#ffffff" />
<rect x="1191" y="584" width="1.6" height="555" fill="#8e8e8e" />
<text x="1239.7" y="606" font-family="Liberation Serif" font-size="16" fill="#6e6e6e" textLength="294.5999999999999" lengthAdjust="spacingAndGlyphs" xml:space="preserve"><tspan font-style="italic" >ẍ</tspan><tspan font-style="normal" >(</tspan><tspan font-style="italic" >t</tspan><tspan font-style="normal" >) = −1/4</tspan><tspan font-style="italic" >x</tspan><tspan font-style="normal" dy="-6" font-size="10.5">3</tspan><tspan font-style="normal" dy="6">(</tspan><tspan font-style="italic" >t</tspan><tspan font-style="normal" >) + </tspan><tspan font-style="italic" >x</tspan><tspan font-style="normal" >(</tspan><tspan font-style="italic" >t</tspan><tspan font-style="normal" >) − 1/10</tspan><tspan font-style="italic" >ẋ</tspan><tspan font-style="normal" >(</tspan><tspan font-style="italic" >t</tspan><tspan font-style="normal" >) + </tspan><tspan font-style="normal" >sin(</tspan><tspan font-style="italic" >t</tspan><tspan font-style="normal" >)</tspan></text>
<text x="1579.5" y="606" font-family="Liberation Serif" font-size="16" fill="#6e6e6e" textLength="318.4000000000001" lengthAdjust="spacingAndGlyphs" xml:space="preserve"><tspan font-style="italic" >ẍ</tspan><tspan font-style="normal" >(</tspan><tspan font-style="italic" >t</tspan><tspan font-style="normal" >) = −1/4</tspan><tspan font-style="italic" >x</tspan><tspan font-style="normal" dy="-6" font-size="10.5">3</tspan><tspan font-style="normal" dy="6">(</tspan><tspan font-style="italic" >t</tspan><tspan font-style="normal" >) + </tspan><tspan font-style="italic" >x</tspan><tspan font-style="normal" >(</tspan><tspan font-style="italic" >t</tspan><tspan font-style="normal" >) − 1/10</tspan><tspan font-style="italic" >ẋ</tspan><tspan font-style="normal" >(</tspan><tspan font-style="italic" >t</tspan><tspan font-style="normal" >) + </tspan><tspan font-style="normal" >2.5 sin(</tspan><tspan font-style="italic" >t</tspan><tspan font-style="normal" >)</tspan></text>
<rect x="1209.7" y="621" width="347.70000000000005" height="161" fill="none" stroke="#7b7b7b" stroke-width="1.4"/>
<polyline points="1246.5,701.8 1246.8,701.7 1247.0,701.7 1247.3,701.7 1247.6,701.7 1247.9,701.6 1248.1,701.4 1248.4,701.3 1248.7,701.0 1249.0,700.7 1249.2,700.3 1249.5,699.9 1249.8,699.3 1250.1,698.6 1250.3,697.9 1250.6,697.0 1250.9,696.0 1251.2,694.9 1251.4,693.6 1251.7,692.2 1252.0,690.7 1252.3,689.0 1252.5,687.2 1252.8,685.4 1253.1,683.4 1253.3,681.5 1253.6,679.5 1253.9,677.7 1254.2,676.1 1254.4,674.8 1254.7,673.8 1255.0,673.2 1255.3,673.1 1255.5,673.5 1255.8,674.4 1256.1,675.7 1256.4,677.3 1256.6,679.1 1256.9,681.1 1257.2,683.3 1257.5,685.5 1257.7,687.7 1258.0,689.9 1258.3,692.2 1258.6,694.4 1258.8,696.6 1259.1,698.8 1259.4,701.1 1259.7,703.4 1259.9,705.8 1260.2,708.3 1260.5,710.9 1260.7,713.6 1261.0,716.5 1261.3,719.4 1261.6,722.4 1261.8,725.3 1262.1,728.0 1262.4,730.5 1262.7,732.4 1262.9,733.8 1263.2,734.4 1263.5,734.2 1263.8,733.3 1264.0,731.6 1264.3,729.4 1264.6,726.8 1264.9,723.9 1265.1,720.9 1265.4,717.8 1265.7,714.8 1266.0,711.7 1266.2,708.7 1266.5,705.7 1266.8,702.7 1267.0,699.7 1267.3,696.5 1267.6,693.3 1267.9,690.0 1268.1,686.6 1268.4,683.0 1268.7,679.5 1269.0,676.0 1269.2,672.8 1269.5,670.1 1269.8,668.0 1270.1,666.8 1270.3,666.5 1270.6,667.3 1270.9,669.0 1271.2,671.4 1271.4,674.4 1271.7,677.7 1272.0,681.2 1272.3,684.7 1272.5,688.2 1272.8,691.6 1273.1,694.9 1273.4,698.2 1273.6,701.4 1273.9,704.6 1274.2,707.9 1274.4,711.2 1274.7,714.7 1275.0,718.2 1275.3,721.7 1275.5,725.3 1275.8,728.7 1276.1,731.8 1276.4,734.3 1276.6,736.1 1276.9,737.1 1277.2,737.0 1277.5,735.9 1277.7,734.0 1278.0,731.4 1278.3,728.4 1278.6,725.1 1278.8,721.8 1279.1,718.4 1279.4,715.2 1279.7,712.1 1279.9,709.1 1280.2,706.2 1280.5,703.5 1280.8,700.8 1281.0,698.1 1281.3,695.4 1281.6,692.7 1281.8,689.9 1282.1,687.0 1282.4,684.1 1282.7,681.2 1282.9,678.4 1283.2,675.7 1283.5,673.3 1283.8,671.3 1284.0,669.8 1284.3,669.1 1284.6,669.0 1284.9,669.7 1285.1,671.0 1285.4,672.9 1285.7,675.2 1286.0,677.7 1286.2,680.3 1286.5,682.9 1286.8,685.4 1287.1,687.8 1287.3,690.1 1287.6,692.2 1287.9,694.2 1288.1,696.1 1288.4,697.8 1288.7,699.4 1289.0,701.0 1289.2,702.6 1289.5,704.1 1289.8,705.6 1290.1,707.2 1290.3,708.8 1290.6,710.5 1290.9,712.3 1291.2,714.1 1291.4,716.0 1291.7,718.1 1292.0,720.2 1292.3,722.3 1292.5,724.4 1292.8,726.4 1293.1,728.2 1293.4,729.7 1293.6,730.9 1293.9,731.6 1294.2,731.9 1294.5,731.6 1294.7,730.9 1295.0,729.8 1295.3,728.3 1295.5,726.5 1295.8,724.6 1296.1,722.6 1296.4,720.6 1296.6,718.7 1296.9,716.8 1297.2,715.0 1297.5,713.3 1297.7,711.8 1298.0,710.3 1298.3,708.9 1298.6,707.5 1298.8,706.3 1299.1,705.0 1299.4,703.8 1299.7,702.5 1299.9,701.3 1300.2,700.0 1300.5,698.6 1300.8,697.1 1301.0,695.6 1301.3,693.9 1301.6,692.1 1301.8,690.2 1302.1,688.1 1302.4,685.9 1302.7,683.7 1302.9,681.4 1303.2,679.0 1303.5,676.8 1303.8,674.8 1304.0,673.1 1304.3,671.8 1304.6,671.1 1304.9,670.9 1305.1,671.3 1305.4,672.2 1305.7,673.7 1306.0,675.5 1306.2,677.6 1306.5,679.9 1306.8,682.3 1307.1,684.7 1307.3,687.1 1307.6,689.5 1307.9,691.8 1308.2,694.0 1308.4,696.2 1308.7,698.4 1309.0,700.5 1309.2,702.7 1309.5,705.0 1309.8,707.3 1310.1,709.8 1310.3,712.3 1310.6,715.0 1310.9,717.8 1311.2,720.7 1311.4,723.6 1311.7,726.4 1312.0,729.1 1312.3,731.4 1312.5,733.2 1312.8,734.4 1313.1,734.8 1313.4,734.5 1313.6,733.4 1313.9,731.6 1314.2,729.4 1314.5,726.8 1314.7,724.0 1315.0,721.1 1315.3,718.2 1315.5,715.3 1315.8,712.5 1316.1,709.8 1316.4,707.2 1316.6,704.6 1316.9,702.0 1317.2,699.4 1317.5,696.8 1317.7,694.0 1318.0,691.2 1318.3,688.3 1318.6,685.2 1318.8,682.1 1319.1,679.0 1319.4,676.0 1319.7,673.3 1319.9,670.9 1320.2,669.2 1320.5,668.1 1320.8,667.9 1321.0,668.5 1321.3,669.9 1321.6,672.0 1321.8,674.5 1322.1,677.3 1322.4,680.2 1322.7,683.2 1322.9,686.2 1323.2,689.1 1323.5,691.8 1323.8,694.5 1324.0,697.0 1324.3,699.5 1324.6,702.0 1324.9,704.4 1325.1,706.9 1325.4,709.4 1325.7,712.1 1326.0,714.8 1326.2,717.6 1326.5,720.4 1326.8,723.3 1327.1,726.1 1327.3,728.7 1327.6,731.0 1327.9,732.9 1328.2,734.1 1328.4,734.7 1328.7,734.5 1329.0,733.6 1329.2,732.0 1329.5,730.0 1329.8,727.6 1330.1,725.0 1330.3,722.3 1330.6,719.6 1330.9,717.0 1331.2,714.5 1331.4,712.1 1331.7,709.9 1332.0,707.8 1332.3,705.7 1332.5,703.8 1332.8,701.8 1333.1,699.9 1333.4,698.0 1333.6,696.0 1333.9,694.0 1334.2,691.9 1334.5,689.7 1334.7,687.4 1335.0,685.0 1335.3,682.5 1335.5,680.1 1335.8,677.7 1336.1,675.5 1336.4,673.5 1336.6,671.9 1336.9,670.8 1337.2,670.3 1337.5,670.4 1337.7,671.1 1338.0,672.4 1338.3,674.0 1338.6,676.0 1338.8,678.2 1339.1,680.5 1339.4,682.8 1339.7,685.1 1339.9,687.3 1340.2,689.4 1340.5,691.4 1340.8,693.3 1341.0,695.0 1341.3,696.7 1341.6,698.4 1341.9,700.0 1342.1,701.5 1342.4,703.1 1342.7,704.8 1342.9,706.5 1343.2,708.2 1343.5,710.1 1343.8,712.1 1344.0,714.2 1344.3,716.4 1344.6,718.7 1344.9,721.0 1345.1,723.4 1345.4,725.8 1345.7,728.0 1346.0,729.9 1346.2,731.4 1346.5,732.5 1346.8,733.0 1347.1,732.9 1347.3,732.2 1347.6,731.0 1347.9,729.3 1348.2,727.3 1348.4,725.1 1348.7,722.7 1349.0,720.3 1349.2,718.0 1349.5,715.7 1349.8,713.5 1350.1,711.3 1350.3,709.3 1350.6,707.3 1350.9,705.3 1351.2,703.4 1351.4,701.5 1351.7,699.5 1352.0,697.5 1352.3,695.4 1352.5,693.2 1352.8,690.9 1353.1,688.4 1353.4,685.9 1353.6,683.2 1353.9,680.6 1354.2,677.9 1354.5,675.5 1354.7,673.2 1355.0,671.4 1355.3,670.1 1355.6,669.5 1355.8,669.6 1356.1,670.3 1356.4,671.7 1356.6,673.6 1356.9,675.8 1357.2,678.3 1357.5,680.9 1357.7,683.6 1358.0,686.2 1358.3,688.8 1358.6,691.2 1358.8,693.6 1359.1,695.9 1359.4,698.2 1359.7,700.4 1359.9,702.6 1360.2,704.9 1360.5,707.2 1360.8,709.7 1361.0,712.2 1361.3,714.8 1361.6,717.5 1361.9,720.4 1362.1,723.2 1362.4,726.0 1362.7,728.6 1363.0,730.9 1363.2,732.8 1363.5,734.1 1363.8,734.7 1364.0,734.5 1364.3,733.6 1364.6,732.0 1364.9,730.0 1365.1,727.5 1365.4,724.9 1365.7,722.1 1366.0,719.3 1366.2,716.6 1366.5,714.0 1366.8,711.5 1367.1,709.1 1367.3,706.8 1367.6,704.5 1367.9,702.2 1368.2,700.0 1368.4,697.7 1368.7,695.4 1369.0,693.0 1369.3,690.5 1369.5,687.9 1369.8,685.2 1370.1,682.4 1370.3,679.6 1370.6,676.9 1370.9,674.4 1371.2,672.3 1371.4,670.6 1371.7,669.5 1372.0,669.1 1372.3,669.4 1372.5,670.4 1372.8,672.0 1373.1,674.1 1373.4,676.5 1373.6,679.1 1373.9,681.7 1374.2,684.4 1374.5,686.9 1374.7,689.4 1375.0,691.8 1375.3,694.0 1375.6,696.2 1375.8,698.3 1376.1,700.3 1376.4,702.3 1376.7,704.3 1376.9,706.4 1377.2,708.5 1377.5,710.7 1377.7,713.0 1378.0,715.4 1378.3,717.9 1378.6,720.5 1378.8,723.1 1379.1,725.6 1379.4,728.0 1379.7,730.1 1379.9,731.9 1380.2,733.1 1380.5,733.7 1380.8,733.6 1381.0,732.9 1381.3,731.6 1381.6,729.9 1381.9,727.8 1382.1,725.4 1382.4,723.0 1382.7,720.5 1383.0,718.0 1383.2,715.7 1383.5,713.4 1383.8,711.3 1384.0,709.2 1384.3,707.3 1384.6,705.4 1384.9,703.6 1385.1,701.7 1385.4,699.9 1385.7,698.0 1386.0,696.1 1386.2,694.0 1386.5,691.9 1386.8,689.7 1387.1,687.3 1387.3,684.9 1387.6,682.4 1387.9,679.9 1388.2,677.4 1388.4,675.1 1388.7,673.1 1389.0,671.6 1389.3,670.5 1389.5,670.0 1389.8,670.2 1390.1,671.0 1390.3,672.3 1390.6,674.1 1390.9,676.3 1391.2,678.6 1391.4,681.1 1391.7,683.5 1392.0,685.9 1392.3,688.3 1392.5,690.5 1392.8,692.7 1393.1,694.7 1393.4,696.7 1393.6,698.6 1393.9,700.6 1394.2,702.5 1394.5,704.4 1394.7,706.4 1395.0,708.5 1395.3,710.7 1395.6,713.0 1395.8,715.4 1396.1,717.9 1396.4,720.5 1396.7,723.1 1396.9,725.7 1397.2,728.1 1397.5,730.3 1397.7,732.0 1398.0,733.2 1398.3,733.8 1398.6,733.7 1398.8,733.0 1399.1,731.7 1399.4,729.8 1399.7,727.6 1399.9,725.2 1400.2,722.7 1400.5,720.1 1400.8,717.5 1401.0,715.1 1401.3,712.7 1401.6,710.4 1401.9,708.2 1402.1,706.1 1402.4,704.0 1402.7,701.9 1403.0,699.9 1403.2,697.7 1403.5,695.5 1403.8,693.2 1404.0,690.8 1404.3,688.3 1404.6,685.7 1404.9,683.0 1405.1,680.3 1405.4,677.6 1405.7,675.1 1406.0,672.9 1406.2,671.1 1406.5,669.9 1406.8,669.3 1407.1,669.4 1407.3,670.3 1407.6,671.7 1407.9,673.7 1408.2,676.0 1408.4,678.5 1408.7,681.1 1409.0,683.8 1409.3,686.4 1409.5,688.9 1409.8,691.3 1410.1,693.7 1410.4,695.9 1410.6,698.1 1410.9,700.2 1411.2,702.3 1411.4,704.5 1411.7,706.6 1412.0,708.9 1412.3,711.3 1412.5,713.7 1412.8,716.3 1413.1,719.0 1413.4,721.7 1413.6,724.4 1413.9,727.0 1414.2,729.4 1414.5,731.4 1414.7,733.0 1415.0,734.0 1415.3,734.2 1415.6,733.8 1415.8,732.7 1416.1,731.0 1416.4,728.9 1416.7,726.5 1416.9,724.0 1417.2,721.4 1417.5,718.7 1417.8,716.2 1418.0,713.8 1418.3,711.4 1418.6,709.2 1418.8,707.1 1419.1,705.0 1419.4,702.9 1419.7,700.9 1419.9,698.8 1420.2,696.7 1420.5,694.6 1420.8,692.3 1421.0,689.9 1421.3,687.4 1421.6,684.9 1421.9,682.2 1422.1,679.6 1422.4,677.1 1422.7,674.7 1423.0,672.6 1423.2,671.0 1423.5,670.0 1423.8,669.6 1424.1,669.8 1424.3,670.8 1424.6,672.3 1424.9,674.2 1425.1,676.5 1425.4,678.9 1425.7,681.5 1426.0,684.0 1426.2,686.5 1426.5,688.9 1426.8,691.2 1427.1,693.3 1427.3,695.4 1427.6,697.4 1427.9,699.4 1428.2,701.4 1428.4,703.3 1428.7,705.3 1429.0,707.3 1429.3,709.4 1429.5,711.7 1429.8,714.0 1430.1,716.4 1430.4,718.9 1430.6,721.5 1430.9,724.1 1431.2,726.6 1431.5,728.9 1431.7,730.9 1432.0,732.4 1432.3,733.4 1432.5,733.8 1432.8,733.4 1433.1,732.5 1433.4,731.0 1433.6,729.1 1433.9,726.8 1434.2,724.4 1434.5,721.9 1434.7,719.4 1435.0,716.9 1435.3,714.5 1435.6,712.3 1435.8,710.1 1436.1,708.0 1436.4,706.0 1436.7,704.1 1436.9,702.1 1437.2,700.2 1437.5,698.2 1437.8,696.1 1438.0,694.0 1438.3,691.7 1438.6,689.4 1438.8,686.9 1439.1,684.3 1439.4,681.7 1439.7,679.1 1439.9,676.6 1440.2,674.3 1440.5,672.3 1440.8,670.8 1441.0,669.9 1441.3,669.6 1441.6,670.0 1441.9,671.1 1442.1,672.7 1442.4,674.7 1442.7,677.0 1443.0,679.5 1443.2,682.0 1443.5,684.6 1443.8,687.1 1444.1,689.5 1444.3,691.7 1444.6,694.0 1444.9,696.1 1445.2,698.1 1445.4,700.2 1445.7,702.2 1446.0,704.2 1446.2,706.3 1446.5,708.5 1446.8,710.8 1447.1,713.1 1447.3,715.6 1447.6,718.2 1447.9,720.8 1448.2,723.5 1448.4,726.1 1448.7,728.6 1449.0,730.7 1449.3,732.4 1449.5,733.5 1449.8,734.0 1450.1,733.8 1450.4,733.0 1450.6,731.5 1450.9,729.6 1451.2,727.3 1451.5,724.8 1451.7,722.2 1452.0,719.6 1452.3,717.1 1452.5,714.6 1452.8,712.3 1453.1,710.0 1453.4,707.8 1453.6,705.7 1453.9,703.6 1454.2,701.6 1454.5,699.5 1454.7,697.4 1455.0,695.2 1455.3,692.9 1455.6,690.5 1455.8,688.0 1456.1,685.4 1456.4,682.8 1456.7,680.1 1456.9,677.5 1457.2,675.0 1457.5,672.8 1457.8,671.1 1458.0,669.9 1458.3,669.4 1458.6,669.6 1458.8,670.4 1459.1,671.9 1459.4,673.8 1459.7,676.1 1459.9,678.6 1460.2,681.2 1460.5,683.8 1460.8,686.3 1461.0,688.8 1461.3,691.1 1461.6,693.4 1461.9,695.5 1462.1,697.6 1462.4,699.7 1462.7,701.7 1463.0,703.8 1463.2,705.9 1463.5,708.0 1463.8,710.2 1464.1,712.6 1464.3,715.0 1464.6,717.6 1464.9,720.2 1465.2,722.8 1465.4,725.4 1465.7,727.9 1466.0,730.1 1466.2,731.9 1466.5,733.2 1466.8,733.9 1467.1,733.9 1467.3,733.2 1467.6,731.9 1467.9,730.1 1468.2,728.0 1468.4,725.5 1468.7,723.0 1469.0,720.4 1469.3,717.9 1469.5,715.4 1469.8,713.1 1470.1,710.9 1470.4,708.7 1470.6,706.6 1470.9,704.6 1471.2,702.6 1471.5,700.6 1471.7,698.6 1472.0,696.5 1472.3,694.4 1472.5,692.1 1472.8,689.8 1473.1,687.3 1473.4,684.8 1473.6,682.2 1473.9,679.6 1474.2,677.0 1474.5,674.7 1474.7,672.6 1475.0,671.0 1475.3,670.0 1475.6,669.6 1475.8,669.9 1476.1,670.8 1476.4,672.3 1476.7,674.3 1476.9,676.6 1477.2,679.0 1477.5,681.5 1477.8,684.1 1478.0,686.6 1478.3,689.0 1478.6,691.3 1478.9,693.5 1479.1,695.6 1479.4,697.6 1479.7,699.6 1479.9,701.6 1480.2,703.6 1480.5,705.6 1480.8,707.7 1481.0,709.8 1481.3,712.1 1481.6,714.5 1481.9,717.0 1482.1,719.6 1482.4,722.2 1482.7,724.8 1483.0,727.3 1483.2,729.6 1483.5,731.5 1483.8,732.9 1484.1,733.7 1484.3,733.9 1484.6,733.4 1484.9,732.2 1485.2,730.5 1485.4,728.5 1485.7,726.1 1486.0,723.6 1486.2,721.0 1486.5,718.5 1486.8,716.0 1487.1,713.7 1487.3,711.4 1487.6,709.2 1487.9,707.1 1488.2,705.1 1488.4,703.1 1488.7,701.0 1489.0,699.0 1489.3,696.9 1489.5,694.8 1489.8,692.5 1490.1,690.2 1490.4,687.7 1490.6,685.1 1490.9,682.5 1491.2,679.8 1491.5,677.3 1491.7,674.8 1492.0,672.7 1492.3,671.1 1492.6,670.0 1492.8,669.5 1493.1,669.7 1493.4,670.6 1493.6,672.1 1493.9,674.0 1494.2,676.3 1494.5,678.8 1494.7,681.4 1495.0,683.9 1495.3,686.5 1495.6,688.9 1495.8,691.2 1496.1,693.5 1496.4,695.6 1496.7,697.7 1496.9,699.8 1497.2,701.8 1497.5,703.8 1497.8,705.9 1498.0,708.1 1498.3,710.3 1498.6,712.7 1498.9,715.1 1499.1,717.7 1499.4,720.3 1499.7,723.0 1500.0,725.6 1500.2,728.1 1500.5,730.3 1500.8,732.1 1501.0,733.3 1501.3,734.0 1501.6,733.9 1501.9,733.2 1502.1,731.9 1502.4,730.0 1502.7,727.8 1503.0,725.4 1503.2,722.8 1503.5,720.2 1503.8,717.7 1504.1,715.2 1504.3,712.8 1504.6,710.6 1504.9,708.4 1505.2,706.3 1505.4,704.3 1505.7,702.2 1506.0,700.2 1506.3,698.1 1506.5,696.0 1506.8,693.8 1507.1,691.5 1507.3,689.1 1507.6,686.6 1507.9,684.0 1508.2,681.3 1508.4,678.7 1508.7,676.2 1509.0,673.9 1509.3,671.9 1509.5,670.5 1509.8,669.7 1510.1,669.5 1510.4,670.1 1510.6,671.2 1510.9,672.9 1511.2,675.0 1511.5,677.4 1511.7,679.9 1512.0,682.5 1512.3,685.0 1512.6,687.5 1512.8,689.9 1513.1,692.2 1513.4,694.4 1513.7,696.5 1513.9,698.5 1514.2,700.5 1514.5,702.5 1514.7,704.5 1515.0,706.6 1515.3,708.8 1515.6,711.0 1515.8,713.4 1516.1,715.8 1516.4,718.4 1516.7,721.0 1516.9,723.6 1517.2,726.2 1517.5,728.6 1517.8,730.7 1518.0,732.4 1518.3,733.5 1518.6,733.9 1518.9,733.7 1519.1,732.8 1519.4,731.4 1519.7,729.5 1520.0,727.2 1520.2,724.8 1520.5,722.2" fill="none" stroke="#000" stroke-width="1.3" stroke-linejoin="round"/>
<path d="M1246.50,745.5 v-8 M1246.50,658 v8 M1273.90,745.5 v-8 M1273.90,658 v8 M1301.30,745.5 v-8 M1301.30,658 v8 M1328.70,745.5 v-8 M1328.70,658 v8 M1356.10,745.5 v-8 M1356.10,658 v8 M1383.50,745.5 v-8 M1383.50,658 v8 M1410.90,745.5 v-8 M1410.90,658 v8 M1438.30,745.5 v-8 M1438.30,658 v8 M1465.70,745.5 v-8 M1465.70,658 v8 M1493.10,745.5 v-8 M1493.10,658 v8 M1520.50,745.5 v-8 M1520.50,658 v8 M1260.20,745.5 v-5 M1287.60,745.5 v-5 M1315.00,745.5 v-5 M1342.40,745.5 v-5 M1369.80,745.5 v-5 M1397.20,745.5 v-5 M1424.60,745.5 v-5 M1452.00,745.5 v-5 M1479.40,745.5 v-5 M1506.80,745.5 v-5 M1246.5,745.50 h8 M1520.5,745.50 h-8 M1246.5,701.75 h8 M1520.5,701.75 h-8 M1246.5,658.00 h8 M1520.5,658.00 h-8 M1246.5,723.62 h5 M1520.5,723.62 h-5 M1246.5,679.88 h5 M1520.5,679.88 h-5 " stroke="#707070" stroke-width="1.4" fill="none" />
<rect x="1246.5" y="658" width="274.0" height="87.5" fill="none" stroke="#707070" stroke-width="1.8"/>
<text x="1246.50" y="762.0" font-family="Liberation Sans" font-size="13" fill="#6f6f6f" text-anchor="middle" >0</text>
<text x="1273.90" y="762.0" font-family="Liberation Sans" font-size="13" fill="#6f6f6f" text-anchor="middle" >10</text>
<text x="1301.30" y="762.0" font-family="Liberation Sans" font-size="13" fill="#6f6f6f" text-anchor="middle" >20</text>
<text x="1328.70" y="762.0" font-family="Liberation Sans" font-size="13" fill="#6f6f6f" text-anchor="middle" >30</text>
<text x="1356.10" y="762.0" font-family="Liberation Sans" font-size="13" fill="#6f6f6f" text-anchor="middle" >40</text>
<text x="1383.50" y="762.0" font-family="Liberation Sans" font-size="13" fill="#6f6f6f" text-anchor="middle" >50</text>
<text x="1410.90" y="762.0" font-family="Liberation Sans" font-size="13" fill="#6f6f6f" text-anchor="middle" >60</text>
<text x="1438.30" y="762.0" font-family="Liberation Sans" font-size="13" fill="#6f6f6f" text-anchor="middle" >70</text>
<text x="1465.70" y="762.0" font-family="Liberation Sans" font-size="13" fill="#6f6f6f" text-anchor="middle" >80</text>
<text x="1493.10" y="762.0" font-family="Liberation Sans" font-size="13" fill="#6f6f6f" text-anchor="middle" >90</text>
<text x="1520.50" y="762.0" font-family="Liberation Sans" font-size="13" fill="#6f6f6f" text-anchor="middle" >100</text>
<text x="1240.2" y="665.80" font-family="Liberation Sans" font-size="13" fill="#6f6f6f" text-anchor="end" >5</text>
<text x="1240.2" y="709.55" font-family="Liberation Sans" font-size="13" fill="#6f6f6f" text-anchor="end" >0</text>
<text x="1240.2" y="753.30" font-family="Liberation Sans" font-size="13" fill="#6f6f6f" text-anchor="end" >-5</text>
<text x="1382.7" y="642" font-family="Liberation Sans" font-size="15" fill="#6a6a6a" text-anchor="middle" >Trajectory</text>
<text x="1385.0" y="778.8" font-family="Liberation Sans" font-size="14.5" fill="#6a6a6a" text-anchor="middle" >t</text>
<text x="0" y="0" transform="translate(1223.0,700.0) rotate(-90)" font-family="Liberation Sans" font-size="14.5" fill="#6a6a6a" text-anchor="middle">x(t)</text>
<rect x="1564.3" y="621" width="348.4000000000001" height="161" fill="none" stroke="#7b7b7b" stroke-width="1.4"/>
<polyline points="1601.7,701.8 1602.0,701.7 1602.2,701.7 1602.5,701.6 1602.8,701.3 1603.1,700.9 1603.3,700.3 1603.6,699.5 1603.9,698.4 1604.2,697.1 1604.4,695.6 1604.7,693.9 1605.0,691.9 1605.3,689.7 1605.5,687.4 1605.8,685.0 1606.1,682.5 1606.4,680.2 1606.6,678.0 1606.9,676.2 1607.2,674.8 1607.5,673.9 1607.7,673.6 1608.0,674.0 1608.3,675.1 1608.6,676.7 1608.8,678.7 1609.1,681.1 1609.4,683.7 1609.7,686.4 1609.9,689.2 1610.2,691.9 1610.5,694.6 1610.8,697.1 1611.0,699.6 1611.3,701.8 1611.6,703.9 1611.8,705.9 1612.1,707.6 1612.4,709.2 1612.7,710.6 1612.9,711.9 1613.2,713.0 1613.5,713.9 1613.8,714.8 1614.0,715.6 1614.3,716.3 1614.6,717.0 1614.9,717.8 1615.1,718.6 1615.4,719.5 1615.7,720.5 1616.0,721.6 1616.2,722.8 1616.5,724.1 1616.8,725.5 1617.1,726.9 1617.3,728.2 1617.6,729.3 1617.9,730.2 1618.2,730.8 1618.4,731.0 1618.7,730.8 1619.0,730.1 1619.3,728.9 1619.5,727.3 1619.8,725.4 1620.1,723.1 1620.4,720.6 1620.6,717.9 1620.9,715.1 1621.2,712.1 1621.4,709.0 1621.7,705.8 1622.0,702.4 1622.3,699.0 1622.5,695.4 1622.8,691.6 1623.1,687.8 1623.4,683.9 1623.6,680.1 1623.9,676.6 1624.2,673.4 1624.5,670.9 1624.7,669.2 1625.0,668.5 1625.3,668.9 1625.6,670.3 1625.8,672.6 1626.1,675.6 1626.4,679.1 1626.7,682.8 1626.9,686.7 1627.2,690.7 1627.5,694.5 1627.8,698.3 1628.0,702.0 1628.3,705.6 1628.6,709.0 1628.9,712.4 1629.1,715.6 1629.4,718.6 1629.7,721.4 1630.0,723.9 1630.2,726.0 1630.5,727.6 1630.8,728.8 1631.1,729.4 1631.3,729.5 1631.6,729.1 1631.9,728.3 1632.1,727.1 1632.4,725.7 1632.7,724.2 1633.0,722.7 1633.2,721.3 1633.5,720.0 1633.8,718.9 1634.1,718.1 1634.3,717.5 1634.6,717.1 1634.9,717.0 1635.2,717.1 1635.4,717.4 1635.7,717.8 1636.0,718.3 1636.3,718.8 1636.5,719.3 1636.8,719.8 1637.1,720.2 1637.4,720.3 1637.6,720.4 1637.9,720.1 1638.2,719.7 1638.5,719.1 1638.7,718.2 1639.0,717.2 1639.3,716.0 1639.6,714.7 1639.8,713.3 1640.1,711.9 1640.4,710.6 1640.7,709.3 1640.9,708.1 1641.2,707.1 1641.5,706.2 1641.7,705.5 1642.0,705.0 1642.3,704.7 1642.6,704.7 1642.8,705.0 1643.1,705.5 1643.4,706.2 1643.7,707.1 1643.9,708.3 1644.2,709.6 1644.5,711.0 1644.8,712.5 1645.0,714.1 1645.3,715.7 1645.6,717.3 1645.9,718.7 1646.1,720.0 1646.4,721.1 1646.7,721.9 1647.0,722.5 1647.2,722.7 1647.5,722.6 1647.8,722.3 1648.1,721.7 1648.3,720.9 1648.6,719.9 1648.9,718.9 1649.2,717.8 1649.4,716.8 1649.7,715.9 1650.0,715.2 1650.3,714.6 1650.5,714.3 1650.8,714.2 1651.1,714.4 1651.3,714.9 1651.6,715.6 1651.9,716.6 1652.2,717.8 1652.4,719.2 1652.7,720.7 1653.0,722.2 1653.3,723.8 1653.5,725.2 1653.8,726.4 1654.1,727.3 1654.4,727.8 1654.6,727.8 1654.9,727.3 1655.2,726.4 1655.5,725.0 1655.7,723.3 1656.0,721.2 1656.3,718.9 1656.6,716.5 1656.8,713.9 1657.1,711.3 1657.4,708.7 1657.7,706.2 1657.9,703.7 1658.2,701.3 1658.5,698.9 1658.8,696.7 1659.0,694.6 1659.3,692.7 1659.6,690.9 1659.9,689.2 1660.1,687.8 1660.4,686.5 1660.7,685.4 1660.9,684.5 1661.2,683.7 1661.5,683.0 1661.8,682.5 1662.0,682.1 1662.3,681.7 1662.6,681.3 1662.9,680.9 1663.1,680.5 1663.4,680.1 1663.7,679.5 1664.0,678.9 1664.2,678.3 1664.5,677.6 1664.8,677.0 1665.1,676.4 1665.3,675.9 1665.6,675.6 1665.9,675.5 1666.2,675.6 1666.4,676.1 1666.7,676.8 1667.0,677.9 1667.3,679.2 1667.5,680.9 1667.8,682.7 1668.1,684.8 1668.4,687.0 1668.6,689.4 1668.9,692.0 1669.2,694.6 1669.5,697.4 1669.7,700.2 1670.0,703.1 1670.3,706.2 1670.5,709.3 1670.8,712.4 1671.1,715.5 1671.4,718.6 1671.6,721.6 1671.9,724.3 1672.2,726.6 1672.5,728.5 1672.7,729.9 1673.0,730.5 1673.3,730.4 1673.6,729.7 1673.8,728.4 1674.1,726.5 1674.4,724.3 1674.7,721.9 1674.9,719.4 1675.2,717.0 1675.5,714.6 1675.8,712.4 1676.0,710.4 1676.3,708.6 1676.6,707.1 1676.9,705.9 1677.1,704.9 1677.4,704.2 1677.7,703.8 1678.0,703.5 1678.2,703.5 1678.5,703.6 1678.8,703.8 1679.1,704.2 1679.3,704.6 1679.6,705.0 1679.9,705.3 1680.1,705.6 1680.4,705.9 1680.7,705.9 1681.0,705.9 1681.2,705.6 1681.5,705.2 1681.8,704.6 1682.1,703.9 1682.3,703.0 1682.6,701.9 1682.9,700.7 1683.2,699.4 1683.4,698.0 1683.7,696.6 1684.0,695.2 1684.3,693.8 1684.5,692.4 1684.8,691.2 1685.1,690.1 1685.4,689.1 1685.6,688.2 1685.9,687.6 1686.2,687.1 1686.5,686.8 1686.7,686.6 1687.0,686.5 1687.3,686.6 1687.6,686.7 1687.8,686.8 1688.1,686.8 1688.4,686.8 1688.7,686.7 1688.9,686.4 1689.2,686.0 1689.5,685.3 1689.8,684.4 1690.0,683.3 1690.3,682.1 1690.6,680.6 1690.8,679.1 1691.1,677.6 1691.4,676.2 1691.7,674.9 1691.9,674.0 1692.2,673.4 1692.5,673.3 1692.8,673.7 1693.0,674.6 1693.3,676.1 1693.6,677.9 1693.9,680.2 1694.1,682.7 1694.4,685.4 1694.7,688.4 1695.0,691.4 1695.2,694.6 1695.5,697.8 1695.8,701.1 1696.1,704.5 1696.3,707.9 1696.6,711.4 1696.9,714.9 1697.2,718.3 1697.4,721.7 1697.7,724.8 1698.0,727.5 1698.3,729.7 1698.5,731.2 1698.8,732.0 1699.1,732.0 1699.4,731.2 1699.6,729.6 1699.9,727.5 1700.2,725.0 1700.4,722.2 1700.7,719.3 1701.0,716.5 1701.3,713.7 1701.5,711.1 1701.8,708.7 1702.1,706.5 1702.4,704.6 1702.6,702.9 1702.9,701.5 1703.2,700.2 1703.5,699.2 1703.7,698.4 1704.0,697.7 1704.3,697.2 1704.6,696.8 1704.8,696.3 1705.1,695.9 1705.4,695.5 1705.7,694.9 1705.9,694.2 1706.2,693.4 1706.5,692.3 1706.8,691.0 1707.0,689.4 1707.3,687.6 1707.6,685.5 1707.9,683.2 1708.1,680.8 1708.4,678.3 1708.7,675.9 1709.0,673.7 1709.2,671.8 1709.5,670.6 1709.8,670.0 1710.0,670.2 1710.3,671.2 1710.6,673.0 1710.9,675.4 1711.1,678.2 1711.4,681.5 1711.7,685.0 1712.0,688.7 1712.2,692.5 1712.5,696.3 1712.8,700.3 1713.1,704.3 1713.3,708.5 1713.6,712.7 1713.9,716.9 1714.2,721.1 1714.4,725.2 1714.7,728.9 1715.0,732.0 1715.3,734.4 1715.5,735.7 1715.8,735.9 1716.1,734.9 1716.4,732.9 1716.6,730.0 1716.9,726.5 1717.2,722.6 1717.5,718.6 1717.7,714.5 1718.0,710.5 1718.3,706.5 1718.6,702.7 1718.8,699.0 1719.1,695.4 1719.4,692.0 1719.6,688.7 1719.9,685.6 1720.2,682.7 1720.5,680.1 1720.7,677.9 1721.0,676.1 1721.3,674.7 1721.6,673.9 1721.8,673.7 1722.1,673.9 1722.4,674.6 1722.7,675.7 1722.9,677.1 1723.2,678.5 1723.5,680.0 1723.8,681.5 1724.0,682.8 1724.3,683.9 1724.6,684.8 1724.9,685.5 1725.1,685.9 1725.4,686.1 1725.7,686.1 1726.0,686.0 1726.2,685.7 1726.5,685.3 1726.8,684.9 1727.1,684.4 1727.3,684.1 1727.6,683.9 1727.9,683.8 1728.2,683.9 1728.4,684.1 1728.7,684.6 1729.0,685.3 1729.2,686.2 1729.5,687.3 1729.8,688.5 1730.1,689.8 1730.3,691.1 1730.6,692.4 1730.9,693.8 1731.2,695.0 1731.4,696.2 1731.7,697.2 1732.0,698.0 1732.3,698.7 1732.5,699.1 1732.8,699.4 1733.1,699.3 1733.4,699.1 1733.6,698.6 1733.9,697.9 1734.2,696.9 1734.5,695.8 1734.7,694.5 1735.0,693.1 1735.3,691.6 1735.6,690.1 1735.8,688.5 1736.1,687.0 1736.4,685.6 1736.7,684.3 1736.9,683.2 1737.2,682.4 1737.5,681.8 1737.8,681.6 1738.0,681.5 1738.3,681.8 1738.6,682.3 1738.8,682.9 1739.1,683.7 1739.4,684.6 1739.7,685.5 1739.9,686.3 1740.2,687.1 1740.5,687.7 1740.8,688.1 1741.0,688.3 1741.3,688.2 1741.6,687.9 1741.9,687.3 1742.1,686.4 1742.4,685.3 1742.7,684.1 1743.0,682.6 1743.2,681.1 1743.5,679.6 1743.8,678.2 1744.1,677.0 1744.3,676.0 1744.6,675.4 1744.9,675.3 1745.2,675.7 1745.4,676.5 1745.7,677.8 1746.0,679.5 1746.3,681.5 1746.5,683.8 1746.8,686.3 1747.1,688.9 1747.4,691.6 1747.6,694.4 1747.9,697.1 1748.2,699.8 1748.5,702.4 1748.7,705.0 1749.0,707.6 1749.3,710.0 1749.5,712.3 1749.8,714.5 1750.1,716.5 1750.4,718.3 1750.6,719.9 1750.9,721.3 1751.2,722.4 1751.5,723.2 1751.7,723.8 1752.0,724.1 1752.3,724.2 1752.6,724.1 1752.8,723.9 1753.1,723.6 1753.4,723.3 1753.7,723.0 1753.9,722.8 1754.2,722.7 1754.5,722.7 1754.8,722.8 1755.0,723.0 1755.3,723.4 1755.6,723.8 1755.9,724.2 1756.1,724.7 1756.4,725.1 1756.7,725.3 1757.0,725.4 1757.2,725.3 1757.5,724.9 1757.8,724.2 1758.1,723.3 1758.3,722.1 1758.6,720.6 1758.9,719.0 1759.1,717.1 1759.4,715.0 1759.7,712.9 1760.0,710.6 1760.2,708.3 1760.5,705.9 1760.8,703.4 1761.1,701.0 1761.3,698.6 1761.6,696.2 1761.9,693.8 1762.2,691.6 1762.4,689.4 1762.7,687.4 1763.0,685.5 1763.3,683.9 1763.5,682.5 1763.8,681.3 1764.1,680.5 1764.4,679.9 1764.6,679.6 1764.9,679.6 1765.2,679.8 1765.5,680.1 1765.7,680.6 1766.0,681.1 1766.3,681.6 1766.6,682.0 1766.8,682.3 1767.1,682.5 1767.4,682.5 1767.7,682.3 1767.9,682.0 1768.2,681.5 1768.5,680.9 1768.7,680.2 1769.0,679.5 1769.3,678.8 1769.6,678.2 1769.8,677.8 1770.1,677.6 1770.4,677.7 1770.7,678.1 1770.9,678.9 1771.2,679.9 1771.5,681.3 1771.8,682.9 1772.0,684.8 1772.3,686.8 1772.6,689.0 1772.9,691.3 1773.1,693.7 1773.4,696.1 1773.7,698.5 1774.0,701.0 1774.2,703.4 1774.5,705.8 1774.8,708.1 1775.1,710.4 1775.3,712.5 1775.6,714.6 1775.9,716.4 1776.2,718.1 1776.4,719.5 1776.7,720.8 1777.0,721.8 1777.3,722.5 1777.5,723.0 1777.8,723.2 1778.1,723.3 1778.3,723.2 1778.6,723.0 1778.9,722.7 1779.2,722.4 1779.4,722.2 1779.7,722.1 1780.0,722.1 1780.3,722.2 1780.5,722.4 1780.8,722.8 1781.1,723.3 1781.4,723.9 1781.6,724.5 1781.9,725.1 1782.2,725.6 1782.5,726.0 1782.7,726.2 1783.0,726.1 1783.3,725.8 1783.6,725.2 1783.8,724.2 1784.1,723.0 1784.4,721.5 1784.7,719.7 1784.9,717.8 1785.2,715.6 1785.5,713.3 1785.8,711.0 1786.0,708.5 1786.3,706.0 1786.6,703.4 1786.9,700.9 1787.1,698.3 1787.4,695.7 1787.7,693.2 1787.9,690.7 1788.2,688.4 1788.5,686.2 1788.8,684.1 1789.0,682.3 1789.3,680.8 1789.6,679.6 1789.9,678.8 1790.1,678.3 1790.4,678.2 1790.7,678.3 1791.0,678.8 1791.2,679.4 1791.5,680.2 1791.8,681.1 1792.1,682.0 1792.3,682.7 1792.6,683.4 1792.9,683.9 1793.2,684.2 1793.4,684.3 1793.7,684.1 1794.0,683.8 1794.3,683.3 1794.5,682.6 1794.8,681.8 1795.1,681.0 1795.4,680.1 1795.6,679.4 1795.9,678.8 1796.2,678.4 1796.5,678.4 1796.7,678.6 1797.0,679.1 1797.3,680.0 1797.6,681.2 1797.8,682.6 1798.1,684.4 1798.4,686.3 1798.6,688.3 1798.9,690.4 1799.2,692.6 1799.5,694.9 1799.7,697.1 1800.0,699.2 1800.3,701.3 1800.6,703.3 1800.8,705.2 1801.1,707.0 1801.4,708.7 1801.7,710.2 1801.9,711.5 1802.2,712.7 1802.5,713.7 1802.8,714.5 1803.0,715.3 1803.3,715.9 1803.6,716.4 1803.9,716.8 1804.1,717.3 1804.4,717.7 1804.7,718.2 1805.0,718.8 1805.2,719.5 1805.5,720.4 1805.8,721.4 1806.1,722.5 1806.3,723.7 1806.6,725.0 1806.9,726.4 1807.2,727.7 1807.4,728.8 1807.7,729.7 1808.0,730.3 1808.2,730.5 1808.5,730.3 1808.8,729.6 1809.1,728.4 1809.3,726.8 1809.6,724.9 1809.9,722.6 1810.2,720.1 1810.4,717.4 1810.7,714.5 1811.0,711.5 1811.3,708.4 1811.5,705.2 1811.8,701.8 1812.1,698.4 1812.4,694.8 1812.6,691.2 1812.9,687.5 1813.2,683.8 1813.5,680.2 1813.7,676.8 1814.0,673.9 1814.3,671.6 1814.6,670.1 1814.8,669.5 1815.1,669.9 1815.4,671.3 1815.7,673.4 1815.9,676.2 1816.2,679.4 1816.5,682.9 1816.8,686.4 1817.0,690.0 1817.3,693.4 1817.6,696.8 1817.8,700.0 1818.1,703.0 1818.4,705.9 1818.7,708.6 1818.9,711.2 1819.2,713.5 1819.5,715.7 1819.8,717.8 1820.0,719.6 1820.3,721.2 1820.6,722.6 1820.9,723.7 1821.1,724.7 1821.4,725.4 1821.7,725.9 1822.0,726.2 1822.2,726.4 1822.5,726.4 1822.8,726.4 1823.1,726.3 1823.3,726.2 1823.6,726.0 1823.9,725.9 1824.2,725.7 1824.4,725.5 1824.7,725.3 1825.0,725.1 1825.3,724.8 1825.5,724.4 1825.8,724.0 1826.1,723.3 1826.4,722.5 1826.6,721.6 1826.9,720.4 1827.2,719.1 1827.4,717.7 1827.7,716.0 1828.0,714.2 1828.3,712.3 1828.5,710.2 1828.8,708.1 1829.1,705.8 1829.4,703.5 1829.6,701.1 1829.9,698.6 1830.2,696.1 1830.5,693.6 1830.7,691.2 1831.0,688.8 1831.3,686.5 1831.6,684.4 1831.8,682.4 1832.1,680.8 1832.4,679.4 1832.7,678.5 1832.9,677.9 1833.2,677.7 1833.5,677.9 1833.8,678.5 1834.0,679.3 1834.3,680.2 1834.6,681.3 1834.9,682.5 1835.1,683.5 1835.4,684.5 1835.7,685.3 1836.0,685.9 1836.2,686.3 1836.5,686.4 1836.8,686.3 1837.0,685.9 1837.3,685.3 1837.6,684.5 1837.9,683.5 1838.1,682.5 1838.4,681.4 1838.7,680.4 1839.0,679.5 1839.2,678.8 1839.5,678.3 1839.8,678.1 1840.1,678.3 1840.3,678.9 1840.6,679.8 1840.9,681.1 1841.2,682.6 1841.4,684.4 1841.7,686.3 1842.0,688.4 1842.3,690.5 1842.5,692.7 1842.8,694.8 1843.1,696.9 1843.4,698.9 1843.6,700.8 1843.9,702.6 1844.2,704.2 1844.5,705.7 1844.7,707.0 1845.0,708.2 1845.3,709.1 1845.6,709.9 1845.8,710.6 1846.1,711.1 1846.4,711.5 1846.6,711.8 1846.9,712.1 1847.2,712.4 1847.5,712.8 1847.7,713.2 1848.0,713.8 1848.3,714.6 1848.6,715.5 1848.8,716.7 1849.1,718.0 1849.4,719.6 1849.7,721.4 1849.9,723.4 1850.2,725.4 1850.5,727.3 1850.8,729.2 1851.0,730.7 1851.3,731.8 1851.6,732.4 1851.9,732.3 1852.1,731.6 1852.4,730.2 1852.7,728.3 1853.0,725.9 1853.2,723.1 1853.5,720.0 1853.8,716.8 1854.1,713.4 1854.3,709.8 1854.6,706.2 1854.9,702.5 1855.2,698.7 1855.4,694.7 1855.7,690.7 1856.0,686.6 1856.3,682.5 1856.5,678.6 1856.8,675.0 1857.1,671.9 1857.3,669.6 1857.6,668.2 1857.9,667.9 1858.2,668.8 1858.4,670.7 1858.7,673.5 1859.0,676.8 1859.3,680.6 1859.5,684.6 1859.8,688.6 1860.1,692.6 1860.4,696.5 1860.6,700.3 1860.9,704.0 1861.2,707.6 1861.5,711.0 1861.7,714.4 1862.0,717.5 1862.3,720.4 1862.6,723.1 1862.8,725.4 1863.1,727.3 1863.4,728.7 1863.7,729.5 1863.9,729.8 1864.2,729.6 1864.5,728.9 1864.8,727.8 1865.0,726.5 1865.3,725.0 1865.6,723.4 1865.9,721.9 1866.1,720.5 1866.4,719.4 1866.7,718.4 1866.9,717.7 1867.2,717.2 1867.5,716.9 1867.8,716.9 1868.0,717.1 1868.3,717.4 1868.6,717.8 1868.9,718.3 1869.1,718.8 1869.4,719.3 1869.7,719.6 1870.0,719.8 1870.2,719.9 1870.5,719.7 1870.8,719.4 1871.1,718.8 1871.3,718.0 1871.6,717.1 1871.9,716.0 1872.2,714.7 1872.4,713.4 1872.7,712.1 1873.0,710.8 1873.3,709.5 1873.5,708.4 1873.8,707.3 1874.1,706.4 1874.4,705.7 1874.6,705.3 1874.9,705.0 1875.2,705.0 1875.5,705.2 1875.7,705.7 1876.0,706.4" fill="none" stroke="#000" stroke-width="1.3" stroke-linejoin="round"/>
<path d="M1601.70,745.5 v-8 M1601.70,658 v8 M1629.13,745.5 v-8 M1629.13,658 v8 M1656.56,745.5 v-8 M1656.56,658 v8 M1683.99,745.5 v-8 M1683.99,658 v8 M1711.42,745.5 v-8 M1711.42,658 v8 M1738.85,745.5 v-8 M1738.85,658 v8 M1766.28,745.5 v-8 M1766.28,658 v8 M1793.71,745.5 v-8 M1793.71,658 v8 M1821.14,745.5 v-8 M1821.14,658 v8 M1848.57,745.5 v-8 M1848.57,658 v8 M1876.00,745.5 v-8 M1876.00,658 v8 M1615.41,745.5 v-5 M1642.85,745.5 v-5 M1670.28,745.5 v-5 M1697.70,745.5 v-5 M1725.13,745.5 v-5 M1752.57,745.5 v-5 M1780.00,745.5 v-5 M1807.42,745.5 v-5 M1834.86,745.5 v-5 M1862.28,745.5 v-5 M1601.7,745.50 h8 M1876,745.50 h-8 M1601.7,701.75 h8 M1876,701.75 h-8 M1601.7,658.00 h8 M1876,658.00 h-8 M1601.7,723.62 h5 M1876,723.62 h-5 M1601.7,679.88 h5 M1876,679.88 h-5 " stroke="#707070" stroke-width="1.4" fill="none" />
<rect x="1601.7" y="658" width="274.29999999999995" height="87.5" fill="none" stroke="#707070" stroke-width="1.8"/>
<text x="1601.70" y="762.0" font-family="Liberation Sans" font-size="13" fill="#6f6f6f" text-anchor="middle" >0</text>
<text x="1629.13" y="762.0" font-family="Liberation Sans" font-size="13" fill="#6f6f6f" text-anchor="middle" >10</text>
<text x="1656.56" y="762.0" font-family="Liberation Sans" font-size="13" fill="#6f6f6f" text-anchor="middle" >20</text>
<text x="1683.99" y="762.0" font-family="Liberation Sans" font-size="13" fill="#6f6f6f" text-anchor="middle" >30</text>
<text x="1711.42" y="762.0" font-family="Liberation Sans" font-size="13" fill="#6f6f6f" text-anchor="middle" >40</text>
<text x="1738.85" y="762.0" font-family="Liberation Sans" font-size="13" fill="#6f6f6f" text-anchor="middle" >50</text>
<text x="1766.28" y="762.0" font-family="Liberation Sans" font-size="13" fill="#6f6f6f" text-anchor="middle" >60</text>
<text x="1793.71" y="762.0" font-family="Liberation Sans" font-size="13" fill="#6f6f6f" text-anchor="middle" >70</text>
<text x="1821.14" y="762.0" font-family="Liberation Sans" font-size="13" fill="#6f6f6f" text-anchor="middle" >80</text>
<text x="1848.57" y="762.0" font-family="Liberation Sans" font-size="13" fill="#6f6f6f" text-anchor="middle" >90</text>
<text x="1876.00" y="762.0" font-family="Liberation Sans" font-size="13" fill="#6f6f6f" text-anchor="middle" >100</text>
<text x="1595.4" y="665.80" font-family="Liberation Sans" font-size="13" fill="#6f6f6f" text-anchor="end" >5</text>
<text x="1595.4" y="709.55" font-family="Liberation Sans" font-size="13" fill="#6f6f6f" text-anchor="end" >0</text>
<text x="1595.4" y="753.30" font-family="Liberation Sans" font-size="13" fill="#6f6f6f" text-anchor="end" >-5</text>
<text x="1738.05" y="642" font-family="Liberation Sans" font-size="15" fill="#6a6a6a" text-anchor="middle" >Trajectory</text>
<text x="1740.35" y="778.8" font-family="Liberation Sans" font-size="14.5" fill="#6a6a6a" text-anchor="middle" >t</text>
<text x="0" y="0" transform="translate(1577.6,700.0) rotate(-90)" font-family="Liberation Sans" font-size="14.5" fill="#6a6a6a" text-anchor="middle">x(t)</text>
<rect x="1209.7" y="790" width="347.70000000000005" height="161" fill="none" stroke="#7b7b7b" stroke-width="1.4"/>
<polyline points="1383.5,870.8 1383.5,870.7 1383.5,870.6 1383.6,870.4 1383.8,870.1 1384.1,869.7 1384.5,869.2 1385.0,868.7 1385.8,868.0 1386.8,867.3 1388.0,866.5 1389.4,865.6 1391.2,864.7 1393.2,863.6 1395.6,862.5 1398.4,861.4 1401.5,860.1 1405.1,858.8 1409.0,857.5 1413.4,856.1 1418.2,854.8 1423.4,853.5 1429.0,852.4 1434.8,851.6 1440.9,851.1 1447.1,851.2 1453.1,851.9 1458.8,853.4 1463.8,855.8 1468.0,859.0 1471.1,863.0 1472.8,867.6 1473.1,872.3 1471.8,877.1 1469.1,881.4 1465.2,885.1 1460.2,888.1 1454.4,890.3 1448.1,891.7 1441.4,892.6 1434.5,893.0 1427.5,893.1 1420.5,893.0 1413.5,892.9 1406.6,892.8 1399.7,892.9 1392.7,893.2 1385.6,893.6 1378.4,894.3 1370.8,895.2 1363.0,896.3 1354.8,897.5 1346.3,898.7 1337.3,899.7 1328.2,900.3 1318.9,900.3 1309.8,899.3 1301.2,896.9 1293.6,893.0 1287.4,887.6 1283.2,880.7 1281.2,873.0 1281.8,865.0 1284.8,857.6 1289.9,851.3 1296.8,846.4 1305.0,843.0 1314.0,841.0 1323.5,840.1 1333.1,839.9 1342.8,840.1 1352.3,840.5 1361.7,840.7 1371.1,840.8 1380.5,840.6 1390.1,840.0 1399.8,839.2 1409.9,838.0 1420.3,836.8 1431.1,835.8 1442.1,835.2 1453.3,835.5 1464.1,837.1 1474.1,840.6 1482.8,846.2 1489.3,854.0 1493.1,863.4 1493.8,873.5 1491.4,883.3 1486.1,891.8 1478.5,898.3 1469.1,902.6 1458.7,905.1 1447.8,906.0 1436.7,905.8 1425.9,905.2 1415.2,904.3 1404.8,903.5 1394.7,903.0 1384.6,902.9 1374.5,903.1 1364.3,903.7 1353.8,904.6 1343.1,905.5 1332.1,906.3 1320.9,906.5 1309.8,905.7 1299.1,903.5 1289.5,899.3 1281.5,892.9 1275.8,884.6 1273.0,875.0 1273.2,865.0 1276.5,855.7 1282.5,848.0 1290.5,842.4 1300.0,838.9 1310.3,837.3 1320.8,837.1 1331.3,837.8 1341.5,839.0 1351.2,840.3 1360.5,841.7 1369.4,842.7 1378.1,843.5 1386.5,843.9 1394.9,844.0 1403.4,843.7 1411.9,843.2 1420.6,842.6 1429.6,842.0 1438.6,841.6 1447.7,841.8 1456.7,842.8 1465.1,844.9 1472.7,848.4 1478.9,853.4 1483.4,859.6 1485.9,866.7 1486.0,874.1 1483.8,881.0 1479.6,887.0 1473.8,891.6 1466.7,894.7 1458.9,896.4 1450.8,896.9 1442.6,896.5 1434.7,895.6 1427.1,894.2 1420.0,892.7 1413.3,891.3 1407.1,889.9 1401.3,888.7 1395.9,887.7 1390.7,886.9 1385.8,886.4 1380.9,886.1 1376.1,886.0 1371.3,886.2 1366.4,886.6 1361.4,887.2 1356.1,887.9 1350.6,888.8 1344.8,889.7 1338.7,890.6 1332.4,891.4 1325.8,891.8 1319.2,891.9 1312.7,891.3 1306.5,889.9 1300.8,887.7 1295.9,884.5 1292.2,880.5 1289.9,875.8 1289.1,870.8 1289.9,865.8 1292.2,861.3 1295.8,857.4 1300.4,854.4 1305.9,852.3 1311.9,851.2 1318.1,850.8 1324.3,850.9 1330.5,851.5 1336.3,852.4 1341.9,853.4 1347.2,854.4 1352.2,855.4 1356.8,856.3 1361.2,857.1 1365.4,857.7 1369.4,858.1 1373.3,858.4 1377.2,858.4 1381.1,858.2 1385.0,857.9 1389.1,857.3 1393.4,856.6 1398.0,855.7 1402.9,854.6 1408.1,853.4 1413.7,852.1 1419.8,850.8 1426.2,849.6 1433.0,848.5 1440.1,847.7 1447.4,847.5 1454.6,848.0 1461.5,849.5 1467.8,852.0 1473.2,855.6 1477.2,860.4 1479.6,865.9 1480.2,871.8 1478.9,877.6 1475.9,882.9 1471.4,887.4 1465.7,890.7 1459.0,893.0 1451.8,894.3 1444.3,894.9 1436.8,894.8 1429.3,894.5 1421.9,893.9 1414.8,893.3 1407.8,892.8 1400.9,892.5 1394.1,892.4 1387.3,892.6 1380.4,893.0 1373.4,893.7 1366.0,894.6 1358.4,895.8 1350.4,897.0 1341.9,898.2 1333.2,899.2 1324.1,899.8 1315.0,899.6 1306.2,898.4 1297.9,895.8 1290.6,891.6 1284.9,885.9 1281.3,878.9 1279.9,871.2 1281.0,863.4 1284.4,856.4 1289.9,850.5 1296.9,846.2 1305.1,843.5 1313.9,842.0 1323.0,841.6 1332.1,841.9 1341.0,842.5 1349.7,843.3 1358.2,844.1 1366.5,844.6 1374.6,844.9 1382.7,844.9 1390.8,844.6 1399.1,843.9 1407.7,843.0 1416.5,841.9 1425.7,840.8 1435.2,840.0 1444.9,839.6 1454.7,840.1 1464.0,841.7 1472.7,845.0 1480.0,849.9 1485.6,856.5 1488.8,864.4 1489.5,872.8 1487.5,881.0 1483.2,888.1 1476.8,893.8 1468.9,897.6 1460.1,899.9 1450.8,900.8 1441.4,900.7 1432.2,899.9 1423.2,898.9 1414.6,897.7 1406.3,896.7 1398.3,895.9 1390.5,895.4 1382.8,895.2 1375.1,895.4 1367.4,895.8 1359.4,896.5 1351.2,897.4 1342.7,898.3 1334.0,899.1 1325.0,899.5 1316.1,899.3 1307.3,898.1 1299.1,895.7 1291.8,891.8 1286.0,886.4 1282.1,879.9 1280.4,872.5 1281.0,865.1 1283.9,858.2 1288.7,852.5 1295.2,848.3 1302.7,845.5 1310.8,844.1 1319.2,843.8 1327.6,844.3 1335.8,845.2 1343.6,846.5 1351.0,847.7 1358.0,848.9 1364.7,850.0 1371.0,850.8 1377.2,851.3 1383.2,851.6 1389.2,851.6 1395.3,851.3 1401.5,850.8 1407.8,850.0 1414.4,849.1 1421.4,848.2 1428.6,847.3 1436.1,846.5 1443.7,846.2 1451.4,846.4 1458.8,847.5 1465.8,849.6 1472.0,852.9 1476.9,857.3 1480.3,862.7 1481.9,868.7 1481.6,874.8 1479.4,880.5 1475.5,885.4 1470.3,889.2 1464.1,891.9 1457.2,893.4 1450.0,894.0 1442.7,893.8 1435.6,893.2 1428.7,892.2 1422.2,891.1 1416.0,890.0 1410.1,888.9 1404.6,888.1 1399.3,887.4 1394.1,886.9 1389.1,886.6 1384.2,886.6 1379.2,886.9 1374.1,887.3 1368.8,888.0 1363.2,888.9 1357.4,889.9 1351.2,891.1 1344.6,892.3 1337.7,893.4 1330.5,894.2 1323.1,894.7 1315.6,894.5 1308.2,893.6 1301.4,891.5 1295.4,888.3 1290.5,884.0 1287.2,878.7 1285.6,872.7 1285.9,866.7 1288.1,860.9 1292.0,856.0 1297.3,852.1 1303.5,849.4 1310.5,847.7 1317.9,847.0 1325.3,847.0 1332.7,847.4 1339.9,848.2 1346.8,849.0 1353.5,849.9 1359.9,850.6 1366.2,851.1 1372.2,851.5 1378.3,851.5 1384.3,851.3 1390.5,850.9 1396.8,850.2 1403.4,849.2 1410.3,848.1 1417.6,846.9 1425.2,845.8 1433.2,844.7 1441.4,844.1 1449.8,844.1 1458.0,845.0 1465.8,847.0 1472.8,850.3 1478.5,855.1 1482.5,861.1 1484.5,867.8 1484.3,874.8 1481.9,881.5 1477.7,887.2 1471.8,891.6 1464.7,894.7 1456.9,896.5 1448.7,897.3 1440.4,897.2 1432.2,896.7 1424.2,895.9 1416.5,895.0 1409.0,894.2 1401.8,893.6 1394.7,893.2 1387.7,893.0 1380.7,893.2 1373.6,893.7 1366.3,894.4 1358.7,895.4 1350.8,896.5 1342.6,897.6 1334.0,898.6 1325.2,899.2 1316.3,899.1 1307.6,898.0 1299.4,895.7 1292.1,892.0 1286.2,886.7 1282.2,880.1 1280.5,872.7 1281.0,865.2 1283.9,858.3 1288.7,852.4 1295.2,848.0 1302.8,845.1 1311.1,843.5 1319.7,843.0 1328.4,843.3 1336.9,844.1 1345.1,845.1 1352.9,846.1 1360.5,847.0 1367.8,847.8 1374.9,848.2 1381.9,848.4 1389.0,848.2 1396.1,847.8 1403.4,847.1 1410.9,846.1 1418.8,845.1 1427.0,844.1 1435.5,843.3 1444.1,842.9 1452.8,843.3 1461.3,844.6 1469.1,847.2 1475.9,851.2 1481.2,856.6 1484.6,863.2 1485.8,870.4 1484.8,877.5 1481.6,884.0 1476.6,889.4 1470.1,893.3 1462.6,895.9 1454.5,897.1 1446.2,897.4 1437.9,896.9 1429.9,896.0 1422.1,894.9 1414.8,893.8 1407.7,892.7 1401.0,891.9 1394.4,891.3 1388.1,891.0 1381.8,890.9 1375.4,891.1 1369.0,891.6 1362.3,892.4 1355.4,893.3 1348.2,894.3 1340.7,895.3 1332.8,896.2 1324.8,896.7 1316.7,896.5 1308.7,895.6 1301.2,893.5 1294.6,890.2 1289.2,885.6 1285.4,879.9 1283.5,873.5 1283.7,866.9 1285.9,860.7 1289.9,855.3 1295.4,851.1 1302.0,848.2 1309.4,846.6 1317.1,845.9 1324.9,846.1 1332.5,846.7 1339.9,847.7 1346.9,848.8 1353.6,849.8 1360.0,850.8 1366.2,851.6 1372.1,852.1 1377.9,852.4 1383.6,852.4 1389.4,852.2 1395.3,851.7 1401.3,851.0 1407.7,850.0 1414.3,849.0 1421.3,847.9 1428.6,846.8 1436.3,846.0 1444.1,845.6 1452.0,845.8 1459.7,846.9 1466.8,849.1 1473.1,852.6 1478.1,857.3 1481.4,863.0 1482.9,869.3 1482.3,875.7 1479.8,881.7 1475.6,886.7 1469.9,890.6 1463.3,893.3 1456.0,894.8 1448.3,895.4 1440.6,895.2 1433.1,894.6 1425.7,893.7 1418.7,892.7 1412.0,891.8 1405.5,891.0 1399.3,890.4 1393.2,890.0 1387.2,889.9 1381.2,890.0 1375.1,890.5 1368.8,891.1 1362.3,892.0 1355.5,893.1 1348.3,894.2 1340.8,895.4 1332.9,896.3 1324.8,896.9 1316.6,896.8 1308.6,895.9 1301.0,893.8 1294.2,890.5 1288.8,885.8 1284.9,879.9 1283.1,873.4 1283.3,866.6 1285.7,860.2 1289.9,854.7 1295.6,850.4 1302.5,847.4 1310.1,845.7 1318.0,845.0 1326.1,845.1 1334.0,845.7 1341.7,846.6 1349.2,847.5 1356.3,848.4 1363.2,849.2 1369.8,849.7 1376.4,850.0 1382.9,849.9 1389.4,849.6 1396.1,849.1 1403.0,848.3 1410.2,847.3 1417.8,846.2 1425.6,845.0 1433.9,844.1 1442.3,843.6 1450.8,843.7 1459.2,844.7 1467.0,846.9 1474.0,850.5 1479.6,855.5 1483.4,861.7 1485.2,868.6 1484.7,875.7 1482.1,882.4 1477.5,888.0 1471.4,892.3 1464.2,895.2 1456.3,896.8 1448.0,897.3 1439.7,897.1 1431.6,896.4 1423.7,895.4 1416.1,894.4 1408.9,893.5 1401.9,892.7 1395.1,892.2 1388.4,892.0 1381.7,892.0 1375.0,892.4 1368.2,893.0 1361.1,893.8 1353.7,894.8 1346.0,895.9 1338.0,896.9 1329.6,897.7 1321.1,898.0 1312.7,897.5 1304.5,896.0 1297.0,893.2 1290.6,889.0 1285.7,883.5 1282.7,877.0 1281.8,869.9 1283.2,863.0 1286.6,856.8 1291.8,851.7 1298.4,848.1 1305.9,845.8 1313.9,844.6 1322.1,844.5 1330.3,845.0 1338.2,845.8 1345.8,846.9 1353.2,847.9 1360.1,848.9 1366.9,849.6 1373.4,850.1 1379.8,850.4 1386.2,850.3 1392.6,850.0 1399.2,849.4 1406.0,848.6 1413.1,847.6 1420.6,846.5 1428.3,845.5 1436.4,844.7 1444.6,844.3 1452.8,844.6 1460.8,845.9 1468.3,848.4 1474.7,852.2 1479.8,857.3 1483.0,863.4 1484.3,870.1 1483.4,876.9 1480.5,883.1 1475.8,888.2 1469.7,892.0 1462.6,894.6 1454.9,895.9 1447.0,896.2 1439.0,895.9 1431.3,895.1 1423.8,894.1 1416.6,893.1 1409.8,892.1 1403.3,891.2 1397.0,890.6 1390.8,890.3 1384.7,890.2 1378.6,890.3 1372.4,890.8 1366.0,891.5 1359.4,892.4 1352.5,893.4 1345.2,894.5 1337.6,895.6 1329.7,896.3 1321.6,896.7 1313.5,896.3 1305.7,895.0 1298.5,892.4 1292.3,888.6 1287.4,883.6 1284.3,877.5 1283.3,870.9 1284.3,864.3 1287.2,858.3 1291.9,853.3 1298.0,849.6 1305.0,847.2 1312.7,845.9 1320.5,845.6 1328.4,845.9 1336.0,846.6 1343.4,847.6 1350.5,848.6 1357.3,849.6 1363.8,850.3 1370.1,850.9 1376.3,851.2 1382.4,851.3 1388.5,851.0 1394.8,850.5 1401.2,849.8 1407.9,848.8 1414.9,847.8 1422.3,846.6 1430.0,845.6 1438.0,844.8 1446.2,844.5 1454.4,845.0 1462.2,846.5 1469.5,849.2 1475.6,853.2 1480.3,858.5 1483.2,864.7 1484.1,871.4 1482.8,878.1 1479.5,884.1 1474.6,889.0 1468.2,892.6 1461.0,894.9 1453.2,896.1 1445.2,896.3 1437.3,895.9 1429.5,895.2 1422.0,894.2 1414.8,893.2 1407.9,892.3 1401.3,891.6 1394.8,891.2 1388.5,891.0 1382.1,891.0 1375.7,891.4 1369.2,892.0 1362.4,892.9 1355.3,893.9 1347.9,895.0 1340.1,896.1 1332.0,897.0 1323.7,897.5 1315.4,897.3 1307.2,896.2 1299.6,893.9 1292.9,890.2 1287.5,885.2 1283.9,879.1 1282.4,872.3 1283.0,865.4 1285.7,859.0 1290.3,853.6 1296.3,849.4 1303.5,846.7 1311.3,845.2 1319.4,844.7 1327.5,844.9 1335.5,845.7 1343.2,846.6 1350.6,847.6 1357.7,848.5 1364.5,849.3 1371.1,849.9 1377.6,850.1 1384.1,850.1 1390.6,849.8 1397.2,849.3 1404.1,848.4 1411.2,847.5 1418.7,846.4 1426.5,845.3 1434.6,844.4 1442.9,843.9 1451.3,844.1 1459.5,845.2 1467.2,847.4 1474.0,851.1 1479.4,856.0 1483.1,862.1 1484.7,869.0 1484.2,875.9 1481.6,882.4 1477.0,887.8 1471.0,892.0 1463.9,894.8 1456.1,896.3 1448.0,896.8 1439.9,896.6 1431.9,895.8 1424.2,894.9 1416.8,893.8 1409.7,892.8 1402.9,892.0 1396.4,891.5 1389.9,891.1 1383.6,891.1 1377.2,891.3 1370.6,891.9 1363.9,892.6 1356.9,893.6 1349.6,894.6 1342.0,895.7 1334.0,896.6 1325.8,897.2 1317.5,897.2 1309.3,896.4 1301.6,894.4 1294.6,891.1 1289.0,886.5 1284.9,880.7 1282.8,874.1 1282.8,867.2 1285.0,860.7 1289.0,855.1 1294.7,850.7 1301.5,847.6 1309.0,845.8 1317.0,845.1 1325.0,845.2 1332.9,845.8 1340.6,846.7 1348.0,847.8 1355.0,848.8 1361.7,849.7 1368.2,850.3 1374.6,850.7 1380.8,850.9 1387.0,850.8 1393.3,850.4 1399.8,849.7 1406.5,848.8 1413.6,847.8 1420.9,846.7 1428.6,845.7 1436.6,844.9 1444.8,844.5 1453.0,844.8 1460.9,846.1 1468.3,848.6 1474.7,852.4 1479.7,857.4 1482.9,863.6 1484.1,870.3 1483.2,877.0 1480.3,883.1 1475.6,888.2 1469.5,892.0 1462.4,894.6 1454.7,895.9 1446.8,896.2 1438.8,895.9 1431.0,895.2 1423.5,894.2 1416.4,893.2 1409.5,892.2 1402.9,891.4 1396.5,890.9 1390.3,890.6 1384.1,890.5 1377.8,890.8 1371.5,891.3 1365.0,892.0 1358.1,893.0 1351.0,894.1 1343.5,895.2 1335.7,896.2 1327.6,896.9 1319.4,897.0 1311.3,896.4 1303.4,894.8 1296.3,891.8 1290.4,887.6 1285.9,882.1 1283.4,875.7 1282.9,868.9 1284.5,862.3 1288.1,856.5 1293.3,851.7 1299.9,848.4 1307.2,846.3 1315.1,845.3 1323.1,845.2 1331.0,845.7 1338.8,846.5 1346.2,847.5 1353.3,848.5 1360.1,849.4 1366.7,850.1 1373.1,850.5 1379.4,850.7 1385.7,850.6 1392.1,850.2 1398.6,849.6 1405.4,848.7 1412.4,847.7 1419.8,846.6 1427.5,845.5 1435.6,844.7 1443.8,844.2 1452.1,844.4 1460.2,845.6 1467.7,848.0 1474.3,851.7 1479.5,856.7 1483.0,862.8 1484.4,869.6 1483.7,876.4 1480.9,882.7 1476.3,888.0 1470.2,892.0 1463.1,894.7 1455.4,896.1 1447.3,896.6 1439.3,896.3 1431.4,895.6 1423.7,894.6 1416.4,893.6 1409.4,892.7 1402.7,891.9 1396.1,891.4 1389.7,891.1 1383.4,891.1 1377.0,891.4 1370.4,891.9 1363.7,892.7 1356.7,893.7 1349.3,894.7 1341.6,895.8 1333.6,896.8 1325.4,897.3 1317.0,897.3 1308.8,896.4 1301.1,894.4 1294.2,891.0 1288.6,886.3 1284.6,880.4 1282.6,873.7 1282.8,866.8 1285.0,860.3 1289.2,854.7 1295.0,850.3 1301.9,847.3 1309.6,845.6 1317.6,844.9 1325.7,845.0 1333.6,845.7 1341.4,846.6 1348.8,847.6 1355.9,848.6 1362.7,849.4 1369.2,850.0 1375.6,850.4 1382.0,850.5 1388.4,850.3 1394.8,849.8 1401.5,849.1 1408.4,848.2 1415.6,847.2 1423.2,846.1 1431.1,845.1 1439.2,844.4 1447.5,844.2 1455.8,844.8 1463.6,846.5 1470.8,849.5 1476.8,853.8 1481.3,859.3 1483.9,865.8 1484.4,872.6 1482.7,879.3 1479.1,885.2 1473.8,889.9 1467.2,893.3 1459.8,895.4 1451.9,896.4 1443.8,896.5 1435.9,896.0 1428.1,895.1 1420.6,894.1 1413.5,893.0 1406.7,892.1 1400.1,891.4 1393.7,891.0 1387.4,890.8 1381.1,890.9 1374.7,891.2 1368.2,891.9 1361.5,892.7 1354.5,893.7 1347.1,894.8 1339.4,895.9 1331.4,896.7 1323.2,897.2 1314.9,896.9 1306.9,895.8 1299.4,893.4 1292.8,889.7 1287.6,884.8 1284.2,878.7 1282.7,872.0 1283.4,865.2 1286.1,858.9 1290.7,853.7 1296.7,849.7 1303.8,847.0 1311.5,845.6 1319.4,845.1" fill="none" stroke="#000" stroke-width="1.1" stroke-linejoin="round"/>
<path d="M1246.50,914.5 v-8 M1246.50,827 v8 M1273.90,914.5 v-8 M1273.90,827 v8 M1301.30,914.5 v-8 M1301.30,827 v8 M1328.70,914.5 v-8 M1328.70,827 v8 M1356.10,914.5 v-8 M1356.10,827 v8 M1383.50,914.5 v-8 M1383.50,827 v8 M1410.90,914.5 v-8 M1410.90,827 v8 M1438.30,914.5 v-8 M1438.30,827 v8 M1465.70,914.5 v-8 M1465.70,827 v8 M1493.10,914.5 v-8 M1493.10,827 v8 M1520.50,914.5 v-8 M1520.50,827 v8 M1260.20,914.5 v-5 M1287.60,914.5 v-5 M1315.00,914.5 v-5 M1342.40,914.5 v-5 M1369.80,914.5 v-5 M1397.20,914.5 v-5 M1424.60,914.5 v-5 M1452.00,914.5 v-5 M1479.40,914.5 v-5 M1506.80,914.5 v-5 M1246.5,914.50 h8 M1520.5,914.50 h-8 M1246.5,870.75 h8 M1520.5,870.75 h-8 M1246.5,827.00 h8 M1520.5,827.00 h-8 M1246.5,892.62 h5 M1520.5,892.62 h-5 M1246.5,848.88 h5 M1520.5,848.88 h-5 " stroke="#707070" stroke-width="1.4" fill="none" />
<rect x="1246.5" y="827" width="274.0" height="87.5" fill="none" stroke="#707070" stroke-width="1.8"/>
<text x="1246.50" y="931.0" font-family="Liberation Sans" font-size="13" fill="#6f6f6f" text-anchor="middle" >-5</text>
<text x="1273.90" y="931.0" font-family="Liberation Sans" font-size="13" fill="#6f6f6f" text-anchor="middle" >-4</text>
<text x="1301.30" y="931.0" font-family="Liberation Sans" font-size="13" fill="#6f6f6f" text-anchor="middle" >-3</text>
<text x="1328.70" y="931.0" font-family="Liberation Sans" font-size="13" fill="#6f6f6f" text-anchor="middle" >-2</text>
<text x="1356.10" y="931.0" font-family="Liberation Sans" font-size="13" fill="#6f6f6f" text-anchor="middle" >-1</text>
<text x="1383.50" y="931.0" font-family="Liberation Sans" font-size="13" fill="#6f6f6f" text-anchor="middle" >0</text>
<text x="1410.90" y="931.0" font-family="Liberation Sans" font-size="13" fill="#6f6f6f" text-anchor="middle" >1</text>
<text x="1438.30" y="931.0" font-family="Liberation Sans" font-size="13" fill="#6f6f6f" text-anchor="middle" >2</text>
<text x="1465.70" y="931.0" font-family="Liberation Sans" font-size="13" fill="#6f6f6f" text-anchor="middle" >3</text>
<text x="1493.10" y="931.0" font-family="Liberation Sans" font-size="13" fill="#6f6f6f" text-anchor="middle" >4</text>
<text x="1520.50" y="931.0" font-family="Liberation Sans" font-size="13" fill="#6f6f6f" text-anchor="middle" >5</text>
<text x="1240.2" y="834.80" font-family="Liberation Sans" font-size="13" fill="#6f6f6f" text-anchor="end" >5</text>
<text x="1240.2" y="878.55" font-family="Liberation Sans" font-size="13" fill="#6f6f6f" text-anchor="end" >0</text>
<text x="1240.2" y="922.30" font-family="Liberation Sans" font-size="13" fill="#6f6f6f" text-anchor="end" >-5</text>
<text x="1382.7" y="811" font-family="Liberation Sans" font-size="15" fill="#6a6a6a" text-anchor="middle" >Phase Diagram</text>
<text x="1385.0" y="947.8" font-family="Liberation Sans" font-size="14.5" fill="#6a6a6a" text-anchor="middle" >x(t)</text>
<text x="0" y="0" transform="translate(1223.0,869.0) rotate(-90)" font-family="Liberation Sans" font-size="14.5" fill="#6a6a6a" text-anchor="middle">v(t)</text>
<rect x="1564.3" y="790" width="348.4000000000001" height="161" fill="none" stroke="#7b7b7b" stroke-width="1.4"/>
<polyline points="1738.8,870.8 1738.9,870.5 1739.0,869.9 1739.5,868.8 1740.3,867.4 1741.6,865.7 1743.5,863.7 1746.0,861.5 1749.3,859.1 1753.3,856.7 1758.1,854.3 1763.6,852.0 1769.8,850.0 1776.6,848.2 1783.9,846.9 1791.4,846.3 1799.1,846.6 1806.5,847.9 1813.3,850.5 1819.1,854.3 1823.5,859.2 1826.2,865.1 1826.9,871.5 1825.7,878.0 1822.5,883.9 1817.5,889.0 1811.1,893.0 1803.7,895.8 1795.5,897.6 1787.0,898.4 1778.3,898.4 1769.7,897.9 1761.3,896.9 1753.3,895.7 1745.7,894.2 1738.6,892.6 1732.0,891.0 1725.9,889.2 1720.4,887.4 1715.5,885.7 1711.0,884.0 1707.1,882.4 1703.7,881.0 1700.7,879.8 1698.0,878.9 1695.5,878.3 1693.2,878.0 1690.9,878.1 1688.6,878.5 1686.1,879.2 1683.3,880.1 1680.2,881.2 1676.7,882.4 1672.9,883.5 1668.8,884.2 1664.5,884.6 1660.2,884.3 1656.1,883.2 1652.4,881.3 1649.5,878.5 1647.7,874.8 1647.0,870.6 1647.8,866.0 1650.0,861.3 1653.7,856.9 1658.7,853.0 1664.8,849.6 1671.9,846.9 1679.7,844.7 1688.1,843.0 1697.0,841.6 1706.4,840.3 1716.1,839.1 1726.2,837.9 1736.7,836.6 1747.6,835.3 1758.9,834.0 1770.6,832.9 1782.6,832.2 1794.7,832.3 1806.6,833.7 1817.8,836.7 1827.7,841.9 1835.6,849.3 1841.0,858.6 1843.1,869.1 1842.0,879.8 1837.5,889.6 1830.3,897.7 1820.9,903.6 1810.0,907.3 1798.1,909.3 1785.9,910.0 1773.6,909.8 1761.5,909.1 1749.6,908.1 1738.0,907.1 1726.8,906.0 1716.0,904.8 1705.5,903.5 1695.5,901.9 1686.1,899.8 1677.3,897.2 1669.5,893.9 1662.9,889.8 1657.7,885.0 1654.0,879.8 1652.0,874.3 1651.7,869.1 1653.0,864.4 1655.7,860.5 1659.3,857.7 1663.7,856.1 1668.4,855.5 1673.1,855.9 1677.6,857.1 1681.6,858.9 1685.0,861.1 1687.7,863.5 1689.5,866.0 1690.7,868.4 1691.1,870.6 1690.8,872.6 1689.9,874.2 1688.7,875.4 1687.1,876.0 1685.4,876.2 1683.7,875.8 1682.3,874.9 1681.2,873.6 1680.6,871.8 1680.5,869.8 1681.2,867.5 1682.6,865.3 1684.6,863.2 1687.3,861.2 1690.6,859.6 1694.3,858.3 1698.3,857.4 1702.6,857.0 1706.9,857.0 1711.1,857.4 1715.2,858.3 1718.9,859.5 1722.2,861.0 1725.0,862.8 1727.2,864.9 1728.7,867.1 1729.5,869.5 1729.5,871.9 1728.7,874.4 1727.2,876.8 1725.0,879.1 1722.0,881.1 1718.5,883.0 1714.4,884.5 1709.9,885.7 1705.0,886.5 1700.0,886.8 1695.0,886.6 1690.2,885.8 1685.6,884.5 1681.6,882.7 1678.2,880.3 1675.6,877.6 1673.9,874.6 1673.2,871.6 1673.4,868.6 1674.5,865.9 1676.4,863.6 1678.9,861.9 1681.9,860.8 1685.1,860.3 1688.4,860.4 1691.5,861.1 1694.4,862.4 1696.7,864.1 1698.5,866.2 1699.5,868.6 1699.8,871.2 1699.2,874.0 1697.8,876.7 1695.5,879.3 1692.4,881.7 1688.6,883.8 1684.3,885.4 1679.6,886.3 1674.6,886.5 1669.8,885.7 1665.3,884.0 1661.6,881.3 1658.8,877.7 1657.3,873.4 1657.2,868.6 1658.6,863.8 1661.6,859.2 1665.9,855.0 1671.3,851.6 1677.8,848.9 1685.0,846.9 1692.7,845.7 1700.7,845.0 1708.8,844.8 1716.9,844.9 1724.9,845.4 1732.8,846.1 1740.4,847.0 1747.7,848.0 1754.6,849.2 1761.2,850.5 1767.3,852.0 1772.9,853.6 1778.1,855.3 1782.6,857.0 1786.7,858.8 1790.1,860.6 1793.1,862.2 1795.5,863.7 1797.5,865.0 1799.2,866.0 1800.5,866.7 1801.8,867.0 1802.9,867.1 1804.1,866.8 1805.4,866.4 1806.9,865.7 1808.5,865.1 1810.4,864.5 1812.4,864.1 1814.5,864.1 1816.6,864.4 1818.4,865.3 1820.0,866.7 1820.9,868.6 1821.3,871.0 1820.8,873.7 1819.4,876.7 1817.0,879.8 1813.7,882.8 1809.4,885.7 1804.4,888.2 1798.5,890.5 1792.0,892.4 1785.0,894.0 1777.5,895.4 1769.5,896.6 1761.2,897.7 1752.6,898.8 1743.7,899.7 1734.5,900.6 1725.0,901.3 1715.3,901.9 1705.5,902.2 1695.7,902.0 1686.0,901.1 1676.8,899.3 1668.2,896.4 1660.8,892.3 1654.9,886.9 1650.8,880.6 1648.7,873.7 1648.9,866.7 1651.3,860.2 1655.5,854.7 1661.2,850.4 1668.1,847.6 1675.6,846.1 1683.4,845.8 1691.1,846.4 1698.5,847.8 1705.5,849.7 1711.7,851.9 1717.2,854.4 1721.9,857.1 1725.8,859.7 1728.8,862.4 1731.1,864.9 1732.5,867.2 1733.3,869.3 1733.5,871.1 1733.1,872.6 1732.3,873.7 1731.3,874.5 1730.1,874.8 1728.8,874.7 1727.6,874.2 1726.7,873.4 1726.0,872.3 1725.7,870.9 1725.9,869.3 1726.6,867.6 1727.9,865.8 1729.8,864.0 1732.2,862.3 1735.1,860.7 1738.4,859.3 1742.2,858.2 1746.3,857.3 1750.6,856.8 1755.0,856.5 1759.4,856.6 1763.8,857.0 1768.0,857.7 1772.0,858.8 1775.5,860.1 1778.6,861.6 1781.2,863.3 1783.3,865.0 1784.9,866.7 1785.9,868.3 1786.4,869.7 1786.6,870.8 1786.4,871.5 1786.1,871.8 1785.8,871.7 1785.6,871.1 1785.6,870.2 1786.0,868.8 1786.9,867.1 1788.3,865.1 1790.4,863.0 1793.2,860.9 1796.6,858.9 1800.6,857.2 1805.0,856.0 1809.7,855.5 1814.5,855.8 1819.0,857.1 1822.9,859.5 1825.9,862.9 1827.7,867.3 1828.1,872.2 1826.8,877.5 1823.9,882.6 1819.4,887.3 1813.6,891.4 1806.6,894.7 1798.6,897.3 1790.0,899.2 1780.8,900.7 1771.3,901.8 1761.4,902.7 1751.2,903.5 1740.9,904.2 1730.3,904.8 1719.5,905.4 1708.6,905.7 1697.7,905.6 1686.9,904.8 1676.4,903.1 1666.7,900.1 1658.2,895.7 1651.3,889.8 1646.4,882.6 1643.9,874.5 1644.0,866.3 1646.6,858.7 1651.5,852.2 1658.1,847.3 1666.0,844.0 1674.7,842.3 1683.8,841.9 1692.8,842.5 1701.4,843.8 1709.6,845.7 1717.1,847.9 1723.9,850.2 1730.0,852.7 1735.3,855.1 1739.8,857.4 1743.6,859.7 1746.8,861.7 1749.3,863.4 1751.4,864.8 1753.1,865.9 1754.5,866.5 1755.8,866.7 1757.1,866.5 1758.5,865.8 1760.2,864.6 1762.4,863.0 1765.1,861.1 1768.5,858.8 1772.6,856.3 1777.5,853.7 1783.3,851.2 1789.8,848.9 1796.9,847.0 1804.6,845.9 1812.4,845.9 1820.0,847.3 1826.9,850.3 1832.6,855.1 1836.6,861.4 1838.3,868.9 1837.7,876.9 1834.5,884.7 1829.0,891.6 1821.6,897.3 1812.6,901.6 1802.4,904.7 1791.4,906.7 1779.9,908.1 1768.0,909.1 1755.8,910.0 1743.4,910.8 1730.7,911.6 1717.8,912.4 1704.6,913.1 1691.3,913.2 1678.1,912.3 1665.4,909.9 1653.8,905.5 1643.9,898.6 1636.6,889.4 1632.4,878.4 1631.8,866.7 1634.9,855.4 1641.3,845.8 1650.3,838.5 1661.2,833.6 1673.4,830.9 1686.1,829.9 1698.9,830.0 1711.5,830.8 1723.9,831.9 1735.9,833.2 1747.5,834.4 1758.6,835.8 1769.4,837.1 1779.7,838.8 1789.4,840.7 1798.5,843.2 1806.6,846.4 1813.7,850.3 1819.4,854.9 1823.6,860.0 1826.1,865.5 1826.9,870.9 1826.1,875.8 1823.8,879.9 1820.4,882.9 1816.3,884.9 1811.7,885.7 1807.0,885.6 1802.5,884.6 1798.3,883.0 1794.8,881.0 1792.0,878.7 1789.8,876.3 1788.5,874.0 1787.8,871.8 1787.8,869.9 1788.3,868.3 1789.3,867.2 1790.5,866.6 1791.8,866.5 1793.1,866.9 1794.2,867.7 1794.9,869.0 1795.2,870.7 1794.9,872.6 1794.0,874.7 1792.5,876.8 1790.3,878.7 1787.5,880.5 1784.2,882.0 1780.5,883.1 1776.5,883.9 1772.3,884.2 1768.0,884.2 1763.9,883.7 1760.0,882.9 1756.3,881.7 1753.1,880.1 1750.5,878.4 1748.4,876.3 1747.0,874.1 1746.3,871.8 1746.4,869.4 1747.2,867.0 1748.7,864.6 1751.0,862.4 1753.9,860.4 1757.4,858.7 1761.5,857.2 1765.9,856.1 1770.6,855.4 1775.5,855.1 1780.4,855.3 1785.1,856.0 1789.5,857.3 1793.5,859.0 1796.9,861.2 1799.5,863.7 1801.3,866.4 1802.2,869.3 1802.2,872.0 1801.4,874.5 1799.9,876.6 1797.8,878.2 1795.3,879.2 1792.5,879.7 1789.8,879.5 1787.1,878.7 1784.8,877.5 1783.0,875.8 1781.7,873.7 1781.1,871.3 1781.3,868.8 1782.4,866.2 1784.2,863.5 1786.9,861.1 1790.3,858.9 1794.3,857.1 1798.8,855.9 1803.5,855.5 1808.2,855.9 1812.7,857.3 1816.6,859.7 1819.6,863.0 1821.3,867.2 1821.8,871.8 1820.7,876.7 1818.0,881.5 1814.0,885.8 1808.6,889.6 1802.2,892.6 1795.0,894.8 1787.2,896.4 1779.0,897.4 1770.6,897.9 1762.0,898.0 1753.5,897.9 1745.0,897.6 1736.7,897.1 1728.6,896.4 1720.7,895.5 1713.1,894.5 1705.8,893.2 1699.0,891.7 1692.7,889.9 1687.0,887.9 1682.0,885.6 1677.7,883.1 1674.3,880.4 1671.6,877.8 1669.9,875.2 1668.8,872.8 1668.5,870.8 1668.7,869.3 1669.4,868.2 1670.2,867.7 1671.2,867.7 1672.1,868.1 1672.8,869.0 1673.2,870.0 1673.2,871.3 1672.9,872.5 1672.1,873.7 1671.1,874.6 1669.8,875.2 1668.3,875.3 1667.0,874.9 1665.8,874.0 1665.0,872.6 1664.7,870.6 1665.1,868.2 1666.3,865.6 1668.3,862.8 1671.3,860.0 1675.0,857.4 1679.6,855.0 1684.9,852.9 1690.8,851.1 1697.2,849.7 1704.0,848.5 1711.1,847.6 1718.4,847.0 1725.9,846.6 1733.5,846.4 1741.2,846.4 1748.8,846.6 1756.3,847.0 1763.7,847.6 1770.8,848.5 1777.6,849.7 1783.9,851.3 1789.7,853.2 1794.9,855.5 1799.3,858.0 1802.8,860.8 1805.5,863.7 1807.3,866.6 1808.1,869.2 1808.2,871.6 1807.7,873.5 1806.6,874.8 1805.2,875.6 1803.6,875.7 1802.1,875.3 1800.8,874.4 1799.9,873.2 1799.3,871.6 1799.3,869.9 1799.9,868.2 1800.9,866.6 1802.4,865.2 1804.4,864.2 1806.5,863.7 1808.7,863.7 1810.9,864.4 1812.7,865.8 1813.9,867.8 1814.5,870.3 1814.1,873.3 1812.9,876.5 1810.6,879.7 1807.3,882.8 1803.0,885.7 1797.9,888.2 1792.1,890.3 1785.7,892.0 1778.9,893.2 1771.6,894.2 1764.2,894.8 1756.6,895.1 1748.9,895.2 1741.3,895.2 1733.7,894.9 1726.2,894.4 1718.9,893.7 1711.8,892.8 1705.0,891.6 1698.7,890.2 1692.9,888.5 1687.6,886.5 1683.1,884.2 1679.2,881.8 1676.1,879.3 1673.9,876.7 1672.4,874.4 1671.6,872.2 1671.4,870.5 1671.7,869.2 1672.4,868.4 1673.2,868.1 1674.0,868.3 1674.7,868.9 1675.1,869.9 1675.2,871.1 1674.9,872.5 1674.1,873.9 1672.9,875.1 1671.4,876.1 1669.6,876.8 1667.6,876.9 1665.8,876.5 1664.1,875.5 1662.9,873.8 1662.3,871.6 1662.4,869.0 1663.4,866.0 1665.4,862.9 1668.3,859.8 1672.2,856.9 1677.0,854.3 1682.5,852.0 1688.6,850.1 1695.3,848.6 1702.5,847.4 1710.0,846.5 1717.7,845.8 1725.6,845.3 1733.6,845.1 1741.7,844.9 1749.7,845.0 1757.8,845.3 1765.7,845.8 1773.4,846.6 1780.8,847.8 1787.7,849.5 1794.0,851.6 1799.7,854.1 1804.4,857.1 1808.2,860.5 1810.8,864.0 1812.4,867.6 1812.8,871.0 1812.3,874.0 1810.9,876.4 1808.8,878.2 1806.3,879.2 1803.6,879.5 1800.9,879.1 1798.4,878.1 1796.4,876.6 1794.8,874.8 1793.9,872.7 1793.6,870.5 1794.0,868.3 1795.1,866.3 1796.8,864.6 1798.9,863.3 1801.4,862.5 1804.0,862.3 1806.6,862.8 1808.9,864.0 1810.7,865.9 1811.9,868.4 1812.2,871.3 1811.5,874.5 1809.8,877.9 1807.1,881.1 1803.3,884.1 1798.7,886.7 1793.4,888.9 1787.4,890.6 1781.0,891.7 1774.3,892.5 1767.4,892.9 1760.5,892.9 1753.5,892.6 1746.8,892.1 1740.2,891.3 1733.9,890.4 1727.9,889.2 1722.3,887.9 1717.2,886.5 1712.5,884.9 1708.3,883.3 1704.6,881.7 1701.5,880.1 1698.8,878.6 1696.5,877.3 1694.6,876.3 1693.0,875.6 1691.6,875.2 1690.2,875.1 1688.8,875.5 1687.2,876.2 1685.3,877.2 1683.1,878.5 1680.5,879.9 1677.4,881.3 1673.9,882.6 1670.0,883.6 1665.9,884.1 1661.7,884.0 1657.6,883.1 1654.0,881.2 1651.2,878.5 1649.3,874.9 1648.6,870.6 1649.4,866.0 1651.6,861.4 1655.3,856.9 1660.2,852.9 1666.4,849.5 1673.5,846.7 1681.4,844.5 1689.9,842.8 1698.9,841.4 1708.3,840.2 1718.0,839.0 1728.1,837.9 1738.6,836.8 1749.4,835.7 1760.6,834.7 1772.0,833.9 1783.6,833.6 1795.2,834.1 1806.5,835.8 1817.0,839.1 1826.2,844.3 1833.4,851.4 1838.1,860.2 1839.9,869.9 1838.6,879.7 1834.4,888.5 1827.7,895.7 1818.9,901.0 1808.9,904.3 1798.1,906.0 1786.9,906.4 1775.8,905.9 1764.9,904.9 1754.5,903.5 1744.4,902.0 1734.9,900.4 1725.9,898.7 1717.4,897.1 1709.4,895.4 1701.9,893.7 1695.0,891.9 1688.7,889.9 1683.0,887.9 1677.9,885.7 1673.6,883.5 1669.9,881.2 1667.0,879.0 1664.8,876.8 1663.2,874.9 1662.1,873.2 1661.6,871.8 1661.4,870.7 1661.6,870.0 1661.9,869.5 1662.3,869.3 1662.8,869.2 1663.3,869.2 1663.8,869.1 1664.3,869.0 1664.9,868.7 1665.6,868.2 1666.5,867.5 1667.7,866.4 1669.2,865.2 1671.2,863.7 1673.7,862.1 1676.7,860.3 1680.2,858.6 1684.3,856.8 1689.0,855.1 1694.1,853.5 1699.8,852.1 1705.8,850.8 1712.3,849.6 1719.0,848.6 1726.1,847.7 1733.5,847.0 1741.0,846.4 1748.7,846.0 1756.5,845.9 1764.3,846.0 1772.0,846.4 1779.5,847.2 1786.7,848.5 1793.4,850.4 1799.4,852.8 1804.6,855.8 1808.8,859.2 1811.8,863.1 1813.6,867.0 1814.1,870.9 1813.5,874.5 1811.9,877.5 1809.4,879.8 1806.3,881.3 1802.9,882.0 1799.3,881.9 1796.0,881.1 1792.9,879.7 1790.4,877.8 1788.5,875.6 1787.3,873.2 1787.0,870.7 1787.4,868.2 1788.6,865.8 1790.5,863.7 1793.0,862.0 1795.9,860.7 1799.2,860.1 1802.5,860.1 1805.8,860.9 1808.6,862.4 1810.9,864.7 1812.4,867.6 1812.8,871.0 1812.2,874.6 1810.4,878.2 1807.6,881.7 1803.6,884.7 1798.8,887.4 1793.3,889.4 1787.2,890.9 1780.7,891.8 1774.0,892.3 1767.3,892.3 1760.6,892.0 1754.0,891.3 1747.7,890.4 1741.7,889.2 1736.2,887.8 1731.0,886.3 1726.4,884.7 1722.3,883.0 1718.8,881.2 1715.7,879.5 1713.2,877.9 1711.2,876.5 1709.6,875.3 1708.3,874.4 1707.3,873.9 1706.3,873.7 1705.3,874.0 1704.2,874.7 1702.8,875.8 1701.0,877.3 1698.7,879.1 1695.7,881.2 1692.1,883.4 1687.8,885.7 1682.8,887.8 1677.1,889.5 1671.1,890.6 1664.8,890.8 1658.6,889.9 1652.9,887.7 1648.1,884.1 1644.7,879.2 1642.9,873.3 1643.1,866.8 1645.4,860.3 1649.7,854.2 1655.7,848.9 1663.2,844.7 1672.0,841.4 1681.5,839.0 1691.8,837.3 1702.5,836.1 1713.5,835.0 1724.9,834.0 1736.5,833.0 1748.6,831.9 1760.9,830.9 1773.5,830.1 1786.3,829.8 1799.1,830.5 1811.4,832.7 1822.8,836.8 1832.5,843.2 1839.8,851.9 1844.1,862.5 1844.9,873.8 1842.2,884.8 1836.2,894.4 1827.6,901.8 1817.0,906.8 1805.2,909.7 1792.7,911.0 1780.1,911.0 1767.5,910.4 1755.2,909.4 1743.3,908.3 1731.7,907.1 1720.5,905.9 1709.7,904.6 1699.3,903.1 1689.5,901.2 1680.3,898.8 1672.0,895.7 1664.7,891.9 1658.8,887.3 1654.5,882.1 1651.8,876.5 1650.8,871.0 1651.5,866.0 1653.7,861.7 1657.1,858.4 1661.4,856.3 1666.1,855.3 1670.9,855.4 1675.6,856.3 1679.9,857.8 1683.7,859.9 1686.7,862.2 1689.0,864.7 1690.5,867.2 1691.3,869.5 1691.3,871.5 1690.8,873.3 1689.8,874.6 1688.4,875.4 1686.9,875.8 1685.4,875.6 1683.9,874.9 1682.8,873.7 1682.1,872.1 1682.0,870.3 1682.5,868.2 1683.6,866.0 1685.4,863.9 1687.8,862.0 1690.8,860.4 1694.3,859.0 1698.2,858.1 1702.2,857.6 1706.4,857.5 1710.5,857.8 1714.5,858.5 1718.1,859.6 1721.4,861.1 1724.2,862.8 1726.3,864.8 1727.8,867.1 1728.6,869.4 1728.7,871.9 1727.9,874.4 1726.4,876.8 1724.1,879.1" fill="none" stroke="#000" stroke-width="1.1" stroke-linejoin="round"/>
<path d="M1601.70,914.5 v-8 M1601.70,827 v8 M1629.13,914.5 v-8 M1629.13,827 v8 M1656.56,914.5 v-8 M1656.56,827 v8 M1683.99,914.5 v-8 M1683.99,827 v8 M1711.42,914.5 v-8 M1711.42,827 v8 M1738.85,914.5 v-8 M1738.85,827 v8 M1766.28,914.5 v-8 M1766.28,827 v8 M1793.71,914.5 v-8 M1793.71,827 v8 M1821.14,914.5 v-8 M1821.14,827 v8 M1848.57,914.5 v-8 M1848.57,827 v8 M1876.00,914.5 v-8 M1876.00,827 v8 M1615.41,914.5 v-5 M1642.85,914.5 v-5 M1670.28,914.5 v-5 M1697.70,914.5 v-5 M1725.13,914.5 v-5 M1752.57,914.5 v-5 M1780.00,914.5 v-5 M1807.42,914.5 v-5 M1834.86,914.5 v-5 M1862.28,914.5 v-5 M1601.7,914.50 h8 M1876,914.50 h-8 M1601.7,870.75 h8 M1876,870.75 h-8 M1601.7,827.00 h8 M1876,827.00 h-8 M1601.7,892.62 h5 M1876,892.62 h-5 M1601.7,848.88 h5 M1876,848.88 h-5 " stroke="#707070" stroke-width="1.4" fill="none" />
<rect x="1601.7" y="827" width="274.29999999999995" height="87.5" fill="none" stroke="#707070" stroke-width="1.8"/>
<text x="1601.70" y="931.0" font-family="Liberation Sans" font-size="13" fill="#6f6f6f" text-anchor="middle" >-5</text>
<text x="1629.13" y="931.0" font-family="Liberation Sans" font-size="13" fill="#6f6f6f" text-anchor="middle" >-4</text>
<text x="1656.56" y="931.0" font-family="Liberation Sans" font-size="13" fill="#6f6f6f" text-anchor="middle" >-3</text>
<text x="1683.99" y="931.0" font-family="Liberation Sans" font-size="13" fill="#6f6f6f" text-anchor="middle" >-2</text>
<text x="1711.42" y="931.0" font-family="Liberation Sans" font-size="13" fill="#6f6f6f" text-anchor="middle" >-1</text>
<text x="1738.85" y="931.0" font-family="Liberation Sans" font-size="13" fill="#6f6f6f" text-anchor="middle" >0</text>
<text x="1766.28" y="931.0" font-family="Liberation Sans" font-size="13" fill="#6f6f6f" text-anchor="middle" >1</text>
<text x="1793.71" y="931.0" font-family="Liberation Sans" font-size="13" fill="#6f6f6f" text-anchor="middle" >2</text>
<text x="1821.14" y="931.0" font-family="Liberation Sans" font-size="13" fill="#6f6f6f" text-anchor="middle" >3</text>
<text x="1848.57" y="931.0" font-family="Liberation Sans" font-size="13" fill="#6f6f6f" text-anchor="middle" >4</text>
<text x="1876.00" y="931.0" font-family="Liberation Sans" font-size="13" fill="#6f6f6f" text-anchor="middle" >5</text>
<text x="1595.4" y="834.80" font-family="Liberation Sans" font-size="13" fill="#6f6f6f" text-anchor="end" >5</text>
<text x="1595.4" y="878.55" font-family="Liberation Sans" font-size="13" fill="#6f6f6f" text-anchor="end" >0</text>
<text x="1595.4" y="922.30" font-family="Liberation Sans" font-size="13" fill="#6f6f6f" text-anchor="end" >-5</text>
<text x="1738.05" y="811" font-family="Liberation Sans" font-size="15" fill="#6a6a6a" text-anchor="middle" >Phase Diagram</text>
<text x="1740.35" y="947.8" font-family="Liberation Sans" font-size="14.5" fill="#6a6a6a" text-anchor="middle" >x(t)</text>
<text x="0" y="0" transform="translate(1577.6,869.0) rotate(-90)" font-family="Liberation Sans" font-size="14.5" fill="#6a6a6a" text-anchor="middle">v(t)</text>
<rect x="1209.7" y="959" width="347.70000000000005" height="161" fill="none" stroke="#7b7b7b" stroke-width="1.4"/>
<g fill="#000"><circle cx="1261.3" cy="1073.2" r="1.5"/><circle cx="1349.5" cy="1010.4" r="1.5"/><circle cx="1377.5" cy="1026.8" r="1.5"/><circle cx="1388.4" cy="1024.0" r="1.5"/><circle cx="1400.5" cy="1021.2" r="1.5"/><circle cx="1398.8" cy="1026.2" r="1.5"/><circle cx="1400.5" cy="1027.7" r="1.5"/><circle cx="1402.1" cy="1027.1" r="1.5"/><circle cx="1404.3" cy="1027.9" r="1.5"/><circle cx="1408.2" cy="1027.1" r="1.5"/><circle cx="1399.9" cy="1026.6" r="1.5"/><circle cx="1413.6" cy="1032.5" r="1.5"/><circle cx="1407.1" cy="1046.1" r="1.5"/><circle cx="1441.6" cy="1033.4" r="1.5"/><circle cx="1465.2" cy="1015.9" r="1.5"/></g>
<path d="M1246.50,1083.5 v-8 M1246.50,996 v8 M1301.30,1083.5 v-8 M1301.30,996 v8 M1356.10,1083.5 v-8 M1356.10,996 v8 M1410.90,1083.5 v-8 M1410.90,996 v8 M1465.70,1083.5 v-8 M1465.70,996 v8 M1520.50,1083.5 v-8 M1520.50,996 v8 M1273.90,1083.5 v-5 M1328.70,1083.5 v-5 M1383.50,1083.5 v-5 M1438.30,1083.5 v-5 M1493.10,1083.5 v-5 M1246.5,1083.50 h8 M1520.5,1083.50 h-8 M1246.5,1039.75 h8 M1520.5,1039.75 h-8 M1246.5,996.00 h8 M1520.5,996.00 h-8 M1246.5,1061.62 h5 M1520.5,1061.62 h-5 M1246.5,1017.88 h5 M1520.5,1017.88 h-5 " stroke="#707070" stroke-width="1.4" fill="none" />
<rect x="1246.5" y="996" width="274.0" height="87.5" fill="none" stroke="#707070" stroke-width="1.8"/>
<text x="1246.50" y="1100.0" font-family="Liberation Sans" font-size="13" fill="#6f6f6f" text-anchor="middle" >-4</text>
<text x="1301.30" y="1100.0" font-family="Liberation Sans" font-size="13" fill="#6f6f6f" text-anchor="middle" >-3</text>
<text x="1356.10" y="1100.0" font-family="Liberation Sans" font-size="13" fill="#6f6f6f" text-anchor="middle" >-2</text>
<text x="1410.90" y="1100.0" font-family="Liberation Sans" font-size="13" fill="#6f6f6f" text-anchor="middle" >-1</text>
<text x="1465.70" y="1100.0" font-family="Liberation Sans" font-size="13" fill="#6f6f6f" text-anchor="middle" >0</text>
<text x="1520.50" y="1100.0" font-family="Liberation Sans" font-size="13" fill="#6f6f6f" text-anchor="middle" >1</text>
<text x="1240.2" y="1003.80" font-family="Liberation Sans" font-size="13" fill="#6f6f6f" text-anchor="end" >4</text>
<text x="1240.2" y="1047.55" font-family="Liberation Sans" font-size="13" fill="#6f6f6f" text-anchor="end" >2</text>
<text x="1240.2" y="1091.30" font-family="Liberation Sans" font-size="13" fill="#6f6f6f" text-anchor="end" >0</text>
<text x="1382.7" y="980" font-family="Liberation Sans" font-size="15" fill="#6a6a6a" text-anchor="middle" >Poincare Map</text>
<text x="1385.0" y="1116.8" font-family="Liberation Sans" font-size="14.5" fill="#6a6a6a" text-anchor="middle" >x(t)</text>
<text x="0" y="0" transform="translate(1223.0,1038.0) rotate(-90)" font-family="Liberation Sans" font-size="14.5" fill="#6a6a6a" text-anchor="middle">v(t)</text>
<rect x="1564.3" y="959" width="348.4000000000001" height="161" fill="none" stroke="#7b7b7b" stroke-width="1.4"/>
<g fill="#000"><circle cx="1775.1" cy="1046.0" r="1.4"/><circle cx="1647.5" cy="1011.2" r="1.4"/><circle cx="1771.2" cy="1058.7" r="1.4"/><circle cx="1687.7" cy="1021.1" r="1.4"/><circle cx="1709.7" cy="1032.1" r="1.4"/><circle cx="1672.4" cy="1032.7" r="1.4"/><circle cx="1798.9" cy="1010.0" r="1.4"/><circle cx="1722.3" cy="1049.6" r="1.4"/><circle cx="1731.8" cy="1019.3" r="1.4"/><circle cx="1787.3" cy="1016.8" r="1.4"/><circle cx="1725.8" cy="1053.1" r="1.4"/><circle cx="1748.0" cy="1013.4" r="1.4"/><circle cx="1739.7" cy="1056.1" r="1.4"/><circle cx="1732.2" cy="1017.4" r="1.4"/><circle cx="1798.6" cy="1026.1" r="1.4"/><circle cx="1757.7" cy="1043.4" r="1.4"/><circle cx="1656.5" cy="1014.0" r="1.4"/><circle cx="1802.7" cy="1042.5" r="1.4"/><circle cx="1737.1" cy="1028.3" r="1.4"/><circle cx="1657.5" cy="1036.9" r="1.4"/><circle cx="1807.6" cy="1045.3" r="1.4"/><circle cx="1681.3" cy="1043.4" r="1.4"/><circle cx="1809.5" cy="1011.0" r="1.4"/><circle cx="1737.9" cy="1042.8" r="1.4"/><circle cx="1671.0" cy="1025.1" r="1.4"/><circle cx="1789.4" cy="1010.4" r="1.4"/><circle cx="1712.3" cy="1054.8" r="1.4"/><circle cx="1798.1" cy="1003.9" r="1.4"/><circle cx="1710.9" cy="1051.5" r="1.4"/><circle cx="1779.3" cy="1005.9" r="1.4"/><circle cx="1693.2" cy="1060.7" r="1.4"/><circle cx="1820.4" cy="1043.3" r="1.4"/><circle cx="1695.3" cy="1041.5" r="1.4"/><circle cx="1756.4" cy="1013.6" r="1.4"/><circle cx="1725.5" cy="1058.9" r="1.4"/><circle cx="1793.6" cy="1002.5" r="1.4"/><circle cx="1702.1" cy="1054.5" r="1.4"/><circle cx="1815.8" cy="1010.2" r="1.4"/><circle cx="1745.0" cy="1038.9" r="1.4"/><circle cx="1656.1" cy="1017.9" r="1.4"/><circle cx="1806.3" cy="1040.1" r="1.4"/><circle cx="1772.3" cy="1020.6" r="1.4"/><circle cx="1741.7" cy="1052.4" r="1.4"/><circle cx="1703.5" cy="1025.0" r="1.4"/><circle cx="1669.7" cy="1035.6" r="1.4"/><circle cx="1812.4" cy="1016.3" r="1.4"/><circle cx="1749.2" cy="1040.3" r="1.4"/><circle cx="1656.0" cy="1016.5" r="1.4"/><circle cx="1804.7" cy="1041.4" r="1.4"/><circle cx="1756.7" cy="1022.8" r="1.4"/><circle cx="1780.6" cy="1041.7" r="1.4"/><circle cx="1665.1" cy="1042.1" r="1.4"/><circle cx="1815.4" cy="1038.1" r="1.4"/><circle cx="1774.9" cy="1021.7" r="1.4"/><circle cx="1744.5" cy="1051.3" r="1.4"/><circle cx="1693.0" cy="1026.0" r="1.4"/><circle cx="1692.8" cy="1035.0" r="1.4"/><circle cx="1725.1" cy="1024.9" r="1.4"/><circle cx="1659.9" cy="1036.9" r="1.4"/><circle cx="1812.2" cy="1040.2" r="1.4"/><circle cx="1765.4" cy="1021.6" r="1.4"/><circle cx="1755.9" cy="1049.5" r="1.4"/><circle cx="1673.1" cy="1021.0" r="1.4"/><circle cx="1779.0" cy="1011.8" r="1.4"/><circle cx="1708.0" cy="1058.6" r="1.4"/><circle cx="1822.4" cy="1014.8" r="1.4"/><circle cx="1758.4" cy="1034.1" r="1.4"/><circle cx="1675.0" cy="1041.9" r="1.4"/><circle cx="1815.9" cy="1017.6" r="1.4"/><circle cx="1755.3" cy="1037.9" r="1.4"/><circle cx="1646.1" cy="1019.9" r="1.4"/><circle cx="1778.3" cy="1057.7" r="1.4"/><circle cx="1678.2" cy="1017.1" r="1.4"/><circle cx="1763.1" cy="1015.6" r="1.4"/><circle cx="1727.0" cy="1057.5" r="1.4"/><circle cx="1779.8" cy="1004.2" r="1.4"/><circle cx="1689.7" cy="1060.9" r="1.4"/><circle cx="1816.2" cy="1048.1" r="1.4"/><circle cx="1643.2" cy="1032.5" r="1.4"/><circle cx="1765.7" cy="1064.4" r="1.4"/><circle cx="1725.7" cy="1016.8" r="1.4"/><circle cx="1792.1" cy="1017.7" r="1.4"/><circle cx="1730.8" cy="1050.8" r="1.4"/><circle cx="1717.8" cy="1022.9" r="1.4"/><circle cx="1664.1" cy="1037.8" r="1.4"/><circle cx="1816.5" cy="1032.1" r="1.4"/><circle cx="1779.9" cy="1029.3" r="1.4"/><circle cx="1777.1" cy="1040.2" r="1.4"/><circle cx="1673.5" cy="1042.7" r="1.4"/><circle cx="1818.1" cy="1021.9" r="1.4"/><circle cx="1764.3" cy="1035.4" r="1.4"/><circle cx="1689.9" cy="1040.7" r="1.4"/><circle cx="1770.6" cy="1010.1" r="1.4"/><circle cx="1701.0" cy="1061.9" r="1.4"/><circle cx="1824.8" cy="1036.9" r="1.4"/><circle cx="1756.6" cy="1024.1" r="1.4"/><circle cx="1788.8" cy="1036.8" r="1.4"/><circle cx="1787.6" cy="1022.1" r="1.4"/><circle cx="1741.9" cy="1049.6" r="1.4"/><circle cx="1689.6" cy="1026.6" r="1.4"/><circle cx="1704.7" cy="1032.4" r="1.4"/><circle cx="1681.4" cy="1033.8" r="1.4"/><circle cx="1766.4" cy="1012.3" r="1.4"/><circle cx="1710.0" cy="1061.0" r="1.4"/><circle cx="1826.0" cy="1020.3" r="1.4"/><circle cx="1767.7" cy="1030.4" r="1.4"/><circle cx="1793.6" cy="1025.2" r="1.4"/><circle cx="1753.2" cy="1045.7" r="1.4"/><circle cx="1665.6" cy="1018.6" r="1.4"/><circle cx="1807.3" cy="1017.6" r="1.4"/><circle cx="1745.4" cy="1043.1" r="1.4"/><circle cx="1665.3" cy="1020.8" r="1.4"/><circle cx="1807.4" cy="1016.9" r="1.4"/><circle cx="1744.3" cy="1043.1" r="1.4"/><circle cx="1666.3" cy="1021.6" r="1.4"/><circle cx="1805.0" cy="1014.9" r="1.4"/><circle cx="1737.9" cy="1045.0" r="1.4"/><circle cx="1677.6" cy="1026.6" r="1.4"/><circle cx="1759.6" cy="1015.2" r="1.4"/><circle cx="1729.3" cy="1057.5" r="1.4"/><circle cx="1772.4" cy="1005.7" r="1.4"/><circle cx="1688.5" cy="1063.2" r="1.4"/><circle cx="1808.4" cy="1055.4" r="1.4"/><circle cx="1654.0" cy="1002.1" r="1.4"/><circle cx="1763.7" cy="1059.3" r="1.4"/><circle cx="1700.0" cy="1022.4" r="1.4"/><circle cx="1675.9" cy="1037.4" r="1.4"/><circle cx="1802.1" cy="1009.7" r="1.4"/><circle cx="1725.9" cy="1047.8" r="1.4"/><circle cx="1710.1" cy="1025.6" r="1.4"/><circle cx="1662.1" cy="1033.5" r="1.4"/><circle cx="1815.6" cy="1030.1" r="1.4"/><circle cx="1776.8" cy="1032.0" r="1.4"/><circle cx="1791.4" cy="1029.8" r="1.4"/><circle cx="1770.8" cy="1040.9" r="1.4"/><circle cx="1645.3" cy="1029.1" r="1.4"/><circle cx="1776.6" cy="1060.1" r="1.4"/><circle cx="1687.1" cy="1019.9" r="1.4"/><circle cx="1714.6" cy="1030.9" r="1.4"/><circle cx="1663.9" cy="1030.4" r="1.4"/><circle cx="1814.1" cy="1022.2" r="1.4"/><circle cx="1760.8" cy="1037.8" r="1.4"/><circle cx="1646.0" cy="1028.2" r="1.4"/><circle cx="1779.6" cy="1058.8" r="1.4"/><circle cx="1680.3" cy="1017.5" r="1.4"/><circle cx="1752.0" cy="1018.8" r="1.4"/><circle cx="1765.8" cy="1048.0" r="1.4"/><circle cx="1661.6" cy="1013.2" r="1.4"/><circle cx="1809.0" cy="1032.9" r="1.4"/><circle cx="1780.2" cy="1032.4" r="1.4"/><circle cx="1789.6" cy="1031.7" r="1.4"/><circle cx="1779.1" cy="1037.7" r="1.4"/><circle cx="1749.9" cy="1023.6" r="1.4"/><circle cx="1796.1" cy="1028.4" r="1.4"/><circle cx="1764.7" cy="1042.0" r="1.4"/><circle cx="1646.6" cy="1015.0" r="1.4"/><circle cx="1774.7" cy="1058.1" r="1.4"/><circle cx="1682.4" cy="1019.3" r="1.4"/><circle cx="1736.2" cy="1023.7" r="1.4"/><circle cx="1730.7" cy="1028.4" r="1.4"/><circle cx="1651.7" cy="1029.9" r="1.4"/><circle cx="1798.3" cy="1050.3" r="1.4"/><circle cx="1641.7" cy="1012.1" r="1.4"/><circle cx="1750.2" cy="1065.9" r="1.4"/><circle cx="1779.8" cy="1002.1" r="1.4"/><circle cx="1684.9" cy="1061.4" r="1.4"/><circle cx="1808.5" cy="1054.4" r="1.4"/><circle cx="1650.3" cy="1002.8" r="1.4"/><circle cx="1755.7" cy="1062.3" r="1.4"/><circle cx="1735.2" cy="1014.9" r="1.4"/><circle cx="1782.6" cy="1043.1" r="1.4"/><circle cx="1653.1" cy="1038.1" r="1.4"/><circle cx="1794.9" cy="1054.2" r="1.4"/><circle cx="1657.1" cy="1004.9" r="1.4"/><circle cx="1782.0" cy="1052.8" r="1.4"/><circle cx="1662.0" cy="1009.0" r="1.4"/><circle cx="1803.3" cy="1039.7" r="1.4"/><circle cx="1776.1" cy="1020.4" r="1.4"/><circle cx="1738.0" cy="1052.7" r="1.4"/><circle cx="1713.2" cy="1023.3" r="1.4"/><circle cx="1662.0" cy="1035.8" r="1.4"/><circle cx="1815.4" cy="1033.7" r="1.4"/><circle cx="1781.6" cy="1027.7" r="1.4"/><circle cx="1767.5" cy="1043.7" r="1.4"/><circle cx="1648.1" cy="1012.8" r="1.4"/><circle cx="1776.6" cy="1057.0" r="1.4"/><circle cx="1677.4" cy="1017.2" r="1.4"/><circle cx="1766.4" cy="1014.7" r="1.4"/><circle cx="1720.1" cy="1058.7" r="1.4"/><circle cx="1805.1" cy="1003.6" r="1.4"/><circle cx="1720.5" cy="1047.1" r="1.4"/><circle cx="1718.9" cy="1023.7" r="1.4"/><circle cx="1661.0" cy="1036.5" r="1.4"/><circle cx="1814.0" cy="1037.2" r="1.4"/><circle cx="1780.2" cy="1022.9" r="1.4"/><circle cx="1746.3" cy="1049.9" r="1.4"/><circle cx="1684.7" cy="1025.7" r="1.4"/><circle cx="1722.6" cy="1027.3" r="1.4"/><circle cx="1654.1" cy="1029.6" r="1.4"/><circle cx="1805.1" cy="1045.3" r="1.4"/><circle cx="1680.3" cy="1043.4" r="1.4"/><circle cx="1811.3" cy="1012.1" r="1.4"/><circle cx="1741.8" cy="1041.6" r="1.4"/><circle cx="1664.5" cy="1021.6" r="1.4"/><circle cx="1809.0" cy="1018.2" r="1.4"/><circle cx="1748.2" cy="1042.0" r="1.4"/><circle cx="1660.6" cy="1018.0" r="1.4"/><circle cx="1811.3" cy="1029.3" r="1.4"/><circle cx="1772.9" cy="1035.4" r="1.4"/><circle cx="1759.0" cy="1020.9" r="1.4"/><circle cx="1763.9" cy="1047.8" r="1.4"/><circle cx="1662.6" cy="1014.1" r="1.4"/><circle cx="1810.1" cy="1029.4" r="1.4"/><circle cx="1772.6" cy="1035.9" r="1.4"/><circle cx="1745.3" cy="1024.7" r="1.4"/><circle cx="1780.3" cy="1017.0" r="1.4"/><circle cx="1724.1" cy="1055.1" r="1.4"/><circle cx="1769.3" cy="1007.0" r="1.4"/><circle cx="1691.2" cy="1063.7" r="1.4"/><circle cx="1810.9" cy="1054.0" r="1.4"/><circle cx="1648.2" cy="1003.1" r="1.4"/><circle cx="1750.2" cy="1064.2" r="1.4"/><circle cx="1766.0" cy="1005.5" r="1.4"/><circle cx="1686.3" cy="1065.1" r="1.4"/><circle cx="1799.1" cy="1061.0" r="1.4"/><circle cx="1675.1" cy="1010.3" r="1.4"/><circle cx="1802.1" cy="1016.9" r="1.4"/><circle cx="1738.1" cy="1046.2" r="1.4"/><circle cx="1681.4" cy="1027.0" r="1.4"/><circle cx="1741.1" cy="1021.0" r="1.4"/><circle cx="1797.3" cy="1024.8" r="1.4"/><circle cx="1753.0" cy="1044.9" r="1.4"/><circle cx="1663.8" cy="1017.9" r="1.4"/><circle cx="1810.1" cy="1021.8" r="1.4"/><circle cx="1756.0" cy="1040.3" r="1.4"/><circle cx="1650.2" cy="1015.0" r="1.4"/><circle cx="1787.4" cy="1052.8" r="1.4"/><circle cx="1657.9" cy="1006.7" r="1.4"/><circle cx="1789.7" cy="1049.5" r="1.4"/><circle cx="1644.8" cy="1009.9" r="1.4"/><circle cx="1758.1" cy="1063.0" r="1.4"/><circle cx="1733.7" cy="1015.1" r="1.4"/><circle cx="1787.9" cy="1040.4" r="1.4"/><circle cx="1737.3" cy="1027.7" r="1.4"/><circle cx="1662.9" cy="1039.3" r="1.4"/><circle cx="1814.8" cy="1037.4" r="1.4"/><circle cx="1778.8" cy="1022.4" r="1.4"/><circle cx="1745.3" cy="1050.4" r="1.4"/><circle cx="1688.1" cy="1026.0" r="1.4"/><circle cx="1709.0" cy="1031.4" r="1.4"/><circle cx="1671.6" cy="1032.9" r="1.4"/><circle cx="1802.0" cy="1010.8" r="1.4"/><circle cx="1727.6" cy="1047.6" r="1.4"/><circle cx="1705.4" cy="1026.5" r="1.4"/><circle cx="1668.0" cy="1034.5" r="1.4"/><circle cx="1813.3" cy="1018.0" r="1.4"/><circle cx="1753.0" cy="1039.4" r="1.4"/><circle cx="1650.7" cy="1015.7" r="1.4"/><circle cx="1789.9" cy="1051.8" r="1.4"/><circle cx="1652.4" cy="1006.1" r="1.4"/><circle cx="1773.3" cy="1056.8" r="1.4"/><circle cx="1679.2" cy="1018.7" r="1.4"/><circle cx="1752.9" cy="1018.3" r="1.4"/><circle cx="1760.3" cy="1049.6" r="1.4"/><circle cx="1670.1" cy="1018.5" r="1.4"/><circle cx="1794.8" cy="1012.1" r="1.4"/><circle cx="1721.1" cy="1051.5" r="1.4"/><circle cx="1749.1" cy="1013.5" r="1.4"/><circle cx="1738.0" cy="1056.5" r="1.4"/><circle cx="1739.5" cy="1015.2" r="1.4"/><circle cx="1773.2" cy="1046.7" r="1.4"/><circle cx="1651.4" cy="1010.0" r="1.4"/><circle cx="1781.4" cy="1054.4" r="1.4"/><circle cx="1667.0" cy="1011.2" r="1.4"/><circle cx="1809.0" cy="1026.0" r="1.4"/><circle cx="1763.6" cy="1039.1" r="1.4"/><circle cx="1644.9" cy="1026.2" r="1.4"/><circle cx="1775.9" cy="1059.8" r="1.4"/><circle cx="1686.7" cy="1020.0" r="1.4"/><circle cx="1715.9" cy="1030.4" r="1.4"/><circle cx="1661.9" cy="1029.7" r="1.4"/><circle cx="1814.7" cy="1026.5" r="1.4"/><circle cx="1769.4" cy="1035.5" r="1.4"/><circle cx="1732.3" cy="1028.8" r="1.4"/><circle cx="1651.2" cy="1029.8" r="1.4"/><circle cx="1797.1" cy="1051.0" r="1.4"/><circle cx="1644.4" cy="1008.7" r="1.4"/><circle cx="1753.2" cy="1064.3" r="1.4"/><circle cx="1758.1" cy="1007.6" r="1.4"/><circle cx="1695.9" cy="1065.3" r="1.4"/><circle cx="1812.7" cy="1053.6" r="1.4"/><circle cx="1646.4" cy="1003.6" r="1.4"/><circle cx="1746.2" cy="1065.7" r="1.4"/><circle cx="1789.0" cy="1000.9" r="1.4"/><circle cx="1692.9" cy="1057.4" r="1.4"/><circle cx="1824.1" cy="1032.7" r="1.4"/><circle cx="1775.4" cy="1024.0" r="1.4"/><circle cx="1755.3" cy="1048.3" r="1.4"/><circle cx="1670.5" cy="1020.1" r="1.4"/><circle cx="1791.3" cy="1011.4" r="1.4"/><circle cx="1716.0" cy="1053.5" r="1.4"/><circle cx="1779.8" cy="1005.3" r="1.4"/><circle cx="1692.2" cy="1060.7" r="1.4"/><circle cx="1819.4" cy="1044.5" r="1.4"/><circle cx="1678.5" cy="1044.1" r="1.4"/><circle cx="1815.9" cy="1016.2" r="1.4"/><circle cx="1753.4" cy="1038.1" r="1.4"/><circle cx="1647.6" cy="1017.9" r="1.4"/><circle cx="1782.1" cy="1055.8" r="1.4"/><circle cx="1670.3" cy="1012.6" r="1.4"/><circle cx="1804.6" cy="1017.6" r="1.4"/><circle cx="1742.3" cy="1044.6" r="1.4"/><circle cx="1671.8" cy="1024.1" r="1.4"/><circle cx="1785.5" cy="1010.7" r="1.4"/><circle cx="1709.2" cy="1056.6" r="1.4"/><circle cx="1813.7" cy="1007.7" r="1.4"/><circle cx="1738.8" cy="1040.6" r="1.4"/><circle cx="1664.5" cy="1022.5" r="1.4"/><circle cx="1809.0" cy="1017.9" r="1.4"/><circle cx="1747.7" cy="1042.0" r="1.4"/><circle cx="1661.1" cy="1018.4" r="1.4"/><circle cx="1811.5" cy="1027.9" r="1.4"/><circle cx="1769.8" cy="1036.5" r="1.4"/><circle cx="1708.8" cy="1036.3" r="1.4"/><circle cx="1687.6" cy="1032.3" r="1.4"/><circle cx="1732.0" cy="1023.1" r="1.4"/><circle cx="1710.6" cy="1034.7" r="1.4"/><circle cx="1678.6" cy="1032.6" r="1.4"/><circle cx="1773.7" cy="1010.9" r="1.4"/><circle cx="1703.9" cy="1060.7" r="1.4"/><circle cx="1826.5" cy="1028.2" r="1.4"/><circle cx="1774.4" cy="1026.1" r="1.4"/><circle cx="1767.8" cy="1044.6" r="1.4"/><circle cx="1650.5" cy="1011.6" r="1.4"/><circle cx="1782.1" cy="1054.5" r="1.4"/><circle cx="1666.8" cy="1010.9" r="1.4"/><circle cx="1809.0" cy="1027.1" r="1.4"/><circle cx="1766.2" cy="1038.4" r="1.4"/><circle cx="1652.3" cy="1036.4" r="1.4"/><circle cx="1794.8" cy="1053.9" r="1.4"/><circle cx="1655.8" cy="1004.8" r="1.4"/><circle cx="1778.8" cy="1054.2" r="1.4"/><circle cx="1668.3" cy="1012.5" r="1.4"/><circle cx="1807.5" cy="1020.8" r="1.4"/><circle cx="1751.4" cy="1042.1" r="1.4"/><circle cx="1658.4" cy="1016.3" r="1.4"/><circle cx="1808.5" cy="1036.2" r="1.4"/><circle cx="1784.7" cy="1026.5" r="1.4"/><circle cx="1759.7" cy="1045.6" r="1.4"/><circle cx="1660.4" cy="1014.5" r="1.4"/><circle cx="1809.1" cy="1033.7" r="1.4"/><circle cx="1781.9" cy="1031.0" r="1.4"/><circle cx="1782.9" cy="1036.9" r="1.4"/><circle cx="1778.2" cy="1019.0" r="1.4"/><circle cx="1731.3" cy="1053.9" r="1.4"/><circle cx="1738.7" cy="1016.1" r="1.4"/><circle cx="1781.5" cy="1043.3" r="1.4"/><circle cx="1649.2" cy="1035.2" r="1.4"/><circle cx="1785.8" cy="1057.7" r="1.4"/><circle cx="1673.1" cy="1012.9" r="1.4"/><circle cx="1798.3" cy="1014.2" r="1.4"/><circle cx="1729.0" cy="1049.0" r="1.4"/><circle cx="1710.7" cy="1025.0" r="1.4"/><circle cx="1661.6" cy="1033.8" r="1.4"/><circle cx="1815.3" cy="1031.9" r="1.4"/><circle cx="1779.6" cy="1030.3" r="1.4"/><circle cx="1782.1" cy="1037.8" r="1.4"/><circle cx="1763.7" cy="1020.3" r="1.4"/><circle cx="1751.2" cy="1051.0" r="1.4"/><circle cx="1682.7" cy="1024.5" r="1.4"/><circle cx="1730.3" cy="1025.0" r="1.4"/><circle cx="1670.0" cy="1040.3" r="1.4"/><circle cx="1817.7" cy="1023.9" r="1.4"/><circle cx="1767.1" cy="1034.9" r="1.4"/><circle cx="1727.1" cy="1030.5" r="1.4"/><circle cx="1653.6" cy="1025.4" r="1.4"/><circle cx="1804.5" cy="1044.5" r="1.4"/><circle cx="1696.5" cy="1040.6" r="1.4"/><circle cx="1746.1" cy="1017.0" r="1.4"/><circle cx="1768.0" cy="1047.8" r="1.4"/><circle cx="1659.4" cy="1011.8" r="1.4"/><circle cx="1804.6" cy="1039.5" r="1.4"/><circle cx="1777.1" cy="1020.6" r="1.4"/><circle cx="1738.3" cy="1052.5" r="1.4"/><circle cx="1710.9" cy="1023.9" r="1.4"/><circle cx="1662.2" cy="1035.0" r="1.4"/><circle cx="1815.7" cy="1032.0" r="1.4"/><circle cx="1779.8" cy="1029.9" r="1.4"/><circle cx="1780.0" cy="1038.9" r="1.4"/><circle cx="1727.0" cy="1030.9" r="1.4"/><circle cx="1654.2" cy="1025.1" r="1.4"/><circle cx="1805.8" cy="1043.2" r="1.4"/><circle cx="1724.9" cy="1032.3" r="1.4"/><circle cx="1657.9" cy="1025.6" r="1.4"/><circle cx="1812.1" cy="1034.4" r="1.4"/><circle cx="1782.8" cy="1028.4" r="1.4"/><circle cx="1769.6" cy="1042.8" r="1.4"/><circle cx="1644.4" cy="1016.8" r="1.4"/><circle cx="1768.6" cy="1060.7" r="1.4"/><circle cx="1699.3" cy="1021.8" r="1.4"/><circle cx="1678.2" cy="1037.6" r="1.4"/><circle cx="1796.0" cy="1008.4" r="1.4"/><circle cx="1715.9" cy="1051.7" r="1.4"/><circle cx="1766.6" cy="1008.5" r="1.4"/><circle cx="1695.9" cy="1063.6" r="1.4"/><circle cx="1817.1" cy="1049.0" r="1.4"/><circle cx="1639.4" cy="1025.8" r="1.4"/><circle cx="1752.3" cy="1067.5" r="1.4"/><circle cx="1786.4" cy="1000.7" r="1.4"/><circle cx="1689.2" cy="1058.7" r="1.4"/><circle cx="1820.0" cy="1042.4" r="1.4"/><circle cx="1713.1" cy="1036.7" r="1.4"/><circle cx="1681.3" cy="1032.0" r="1.4"/><circle cx="1758.5" cy="1014.7" r="1.4"/><circle cx="1728.5" cy="1057.8" r="1.4"/><circle cx="1777.5" cy="1004.5" r="1.4"/><circle cx="1688.7" cy="1061.8" r="1.4"/><circle cx="1812.8" cy="1051.6" r="1.4"/><circle cx="1640.2" cy="1010.6" r="1.4"/><circle cx="1740.8" cy="1068.7" r="1.4"/><circle cx="1819.8" cy="1005.8" r="1.4"/><circle cx="1742.9" cy="1037.2" r="1.4"/><circle cx="1654.0" cy="1018.4" r="1.4"/><circle cx="1802.3" cy="1044.3" r="1.4"/><circle cx="1696.4" cy="1040.6" r="1.4"/><circle cx="1746.1" cy="1017.0" r="1.4"/><circle cx="1768.3" cy="1047.8" r="1.4"/><circle cx="1658.9" cy="1011.6" r="1.4"/><circle cx="1803.4" cy="1040.8" r="1.4"/><circle cx="1764.8" cy="1021.1" r="1.4"/><circle cx="1754.2" cy="1050.0" r="1.4"/><circle cx="1676.3" cy="1022.5" r="1.4"/><circle cx="1762.2" cy="1015.0" r="1.4"/><circle cx="1725.4" cy="1058.1" r="1.4"/><circle cx="1788.2" cy="1003.0" r="1.4"/><circle cx="1696.1" cy="1057.3" r="1.4"/><circle cx="1824.9" cy="1027.6" r="1.4"/><circle cx="1775.1" cy="1027.6" r="1.4"/><circle cx="1774.8" cy="1041.9" r="1.4"/><circle cx="1646.0" cy="1030.9" r="1.4"/><circle cx="1778.1" cy="1059.9" r="1.4"/><circle cx="1684.8" cy="1019.1" r="1.4"/><circle cx="1725.9" cy="1027.3" r="1.4"/><circle cx="1653.2" cy="1030.4" r="1.4"/><circle cx="1802.3" cy="1047.8" r="1.4"/><circle cx="1644.7" cy="1032.7" r="1.4"/><circle cx="1771.8" cy="1062.4" r="1.4"/><circle cx="1702.6" cy="1021.0" r="1.4"/><circle cx="1675.5" cy="1038.1" r="1.4"/><circle cx="1805.6" cy="1010.7" r="1.4"/><circle cx="1732.3" cy="1045.4" r="1.4"/><circle cx="1686.1" cy="1028.3" r="1.4"/><circle cx="1722.8" cy="1026.8" r="1.4"/><circle cx="1654.2" cy="1030.5" r="1.4"/><circle cx="1804.9" cy="1045.7" r="1.4"/><circle cx="1672.9" cy="1043.7" r="1.4"/><circle cx="1819.1" cy="1025.6" r="1.4"/><circle cx="1771.1" cy="1033.1" r="1.4"/><circle cx="1785.9" cy="1019.3" r="1.4"/><circle cx="1732.2" cy="1052.1" r="1.4"/><circle cx="1723.2" cy="1021.1" r="1.4"/><circle cx="1696.5" cy="1038.0" r="1.4"/><circle cx="1729.6" cy="1022.8" r="1.4"/><circle cx="1700.7" cy="1037.3" r="1.4"/><circle cx="1711.7" cy="1028.2" r="1.4"/><circle cx="1662.7" cy="1031.7" r="1.4"/><circle cx="1815.3" cy="1026.6" r="1.4"/><circle cx="1770.1" cy="1035.0" r="1.4"/><circle cx="1748.7" cy="1023.6" r="1.4"/><circle cx="1796.4" cy="1025.9" r="1.4"/><circle cx="1756.2" cy="1044.3" r="1.4"/><circle cx="1659.9" cy="1015.3" r="1.4"/><circle cx="1809.4" cy="1033.6" r="1.4"/><circle cx="1781.7" cy="1031.0" r="1.4"/><circle cx="1783.1" cy="1036.8" r="1.4"/><circle cx="1780.1" cy="1019.1" r="1.4"/><circle cx="1731.5" cy="1053.5" r="1.4"/><circle cx="1735.2" cy="1017.2" r="1.4"/><circle cx="1795.8" cy="1033.3" r="1.4"/><circle cx="1782.1" cy="1034.7" r="1.4"/><circle cx="1790.9" cy="1024.5" r="1.4"/><circle cx="1750.4" cy="1046.9" r="1.4"/><circle cx="1670.9" cy="1021.6" r="1.4"/><circle cx="1788.8" cy="1011.0" r="1.4"/><circle cx="1712.8" cy="1054.9" r="1.4"/><circle cx="1797.7" cy="1003.8" r="1.4"/><circle cx="1710.1" cy="1051.8" r="1.4"/><circle cx="1783.6" cy="1005.2" r="1.4"/><circle cx="1695.5" cy="1059.0" r="1.4"/><circle cx="1824.3" cy="1034.6" r="1.4"/><circle cx="1770.6" cy="1022.8" r="1.4"/><circle cx="1754.8" cy="1049.1" r="1.4"/><circle cx="1673.2" cy="1021.3" r="1.4"/><circle cx="1778.3" cy="1011.8" r="1.4"/><circle cx="1707.8" cy="1058.8" r="1.4"/><circle cx="1823.0" cy="1015.7" r="1.4"/><circle cx="1760.0" cy="1033.5" r="1.4"/><circle cx="1698.5" cy="1038.8" r="1.4"/><circle cx="1727.6" cy="1023.3" r="1.4"/><circle cx="1681.2" cy="1040.4" r="1.4"/></g>
<path d="M1601.70,1083.5 v-8 M1601.70,996 v8 M1629.13,1083.5 v-8 M1629.13,996 v8 M1656.56,1083.5 v-8 M1656.56,996 v8 M1683.99,1083.5 v-8 M1683.99,996 v8 M1711.42,1083.5 v-8 M1711.42,996 v8 M1738.85,1083.5 v-8 M1738.85,996 v8 M1766.28,1083.5 v-8 M1766.28,996 v8 M1793.71,1083.5 v-8 M1793.71,996 v8 M1821.14,1083.5 v-8 M1821.14,996 v8 M1848.57,1083.5 v-8 M1848.57,996 v8 M1876.00,1083.5 v-8 M1876.00,996 v8 M1615.41,1083.5 v-5 M1642.85,1083.5 v-5 M1670.28,1083.5 v-5 M1697.70,1083.5 v-5 M1725.13,1083.5 v-5 M1752.57,1083.5 v-5 M1780.00,1083.5 v-5 M1807.42,1083.5 v-5 M1834.86,1083.5 v-5 M1862.28,1083.5 v-5 M1601.7,996.00 h8 M1876,996.00 h-8 M1601.7,1039.75 h8 M1876,1039.75 h-8 M1601.7,1083.50 h8 M1876,1083.50 h-8 M1601.7,1017.88 h5 M1876,1017.88 h-5 M1601.7,1061.62 h5 M1876,1061.62 h-5 " stroke="#707070" stroke-width="1.4" fill="none" />
<rect x="1601.7" y="996" width="274.29999999999995" height="87.5" fill="none" stroke="#707070" stroke-width="1.8"/>
<text x="1601.70" y="1100.0" font-family="Liberation Sans" font-size="13" fill="#6f6f6f" text-anchor="middle" >-5</text>
<text x="1629.13" y="1100.0" font-family="Liberation Sans" font-size="13" fill="#6f6f6f" text-anchor="middle" >-4</text>
<text x="1656.56" y="1100.0" font-family="Liberation Sans" font-size="13" fill="#6f6f6f" text-anchor="middle" >-3</text>
<text x="1683.99" y="1100.0" font-family="Liberation Sans" font-size="13" fill="#6f6f6f" text-anchor="middle" >-2</text>
<text x="1711.42" y="1100.0" font-family="Liberation Sans" font-size="13" fill="#6f6f6f" text-anchor="middle" >-1</text>
<text x="1738.85" y="1100.0" font-family="Liberation Sans" font-size="13" fill="#6f6f6f" text-anchor="middle" >0</text>
<text x="1766.28" y="1100.0" font-family="Liberation Sans" font-size="13" fill="#6f6f6f" text-anchor="middle" >1</text>
<text x="1793.71" y="1100.0" font-family="Liberation Sans" font-size="13" fill="#6f6f6f" text-anchor="middle" >2</text>
<text x="1821.14" y="1100.0" font-family="Liberation Sans" font-size="13" fill="#6f6f6f" text-anchor="middle" >3</text>
<text x="1848.57" y="1100.0" font-family="Liberation Sans" font-size="13" fill="#6f6f6f" text-anchor="middle" >4</text>
<text x="1876.00" y="1100.0" font-family="Liberation Sans" font-size="13" fill="#6f6f6f" text-anchor="middle" >5</text>
<text x="1595.4" y="1003.80" font-family="Liberation Sans" font-size="13" fill="#6f6f6f" text-anchor="end" >2</text>
<text x="1595.4" y="1047.55" font-family="Liberation Sans" font-size="13" fill="#6f6f6f" text-anchor="end" >-3</text>
<text x="1595.4" y="1091.30" font-family="Liberation Sans" font-size="13" fill="#6f6f6f" text-anchor="end" >-7</text>
<text x="1738.05" y="980" font-family="Liberation Sans" font-size="15" fill="#6a6a6a" text-anchor="middle" >Poincare Map</text>
<text x="1740.35" y="1116.8" font-family="Liberation Sans" font-size="14.5" fill="#6a6a6a" text-anchor="middle" >x(t)</text>
<text x="0" y="0" transform="translate(1577.6,1038.0) rotate(-90)" font-family="Liberation Sans" font-size="14.5" fill="#6a6a6a" text-anchor="middle">v(t)</text></svg></body></html>
